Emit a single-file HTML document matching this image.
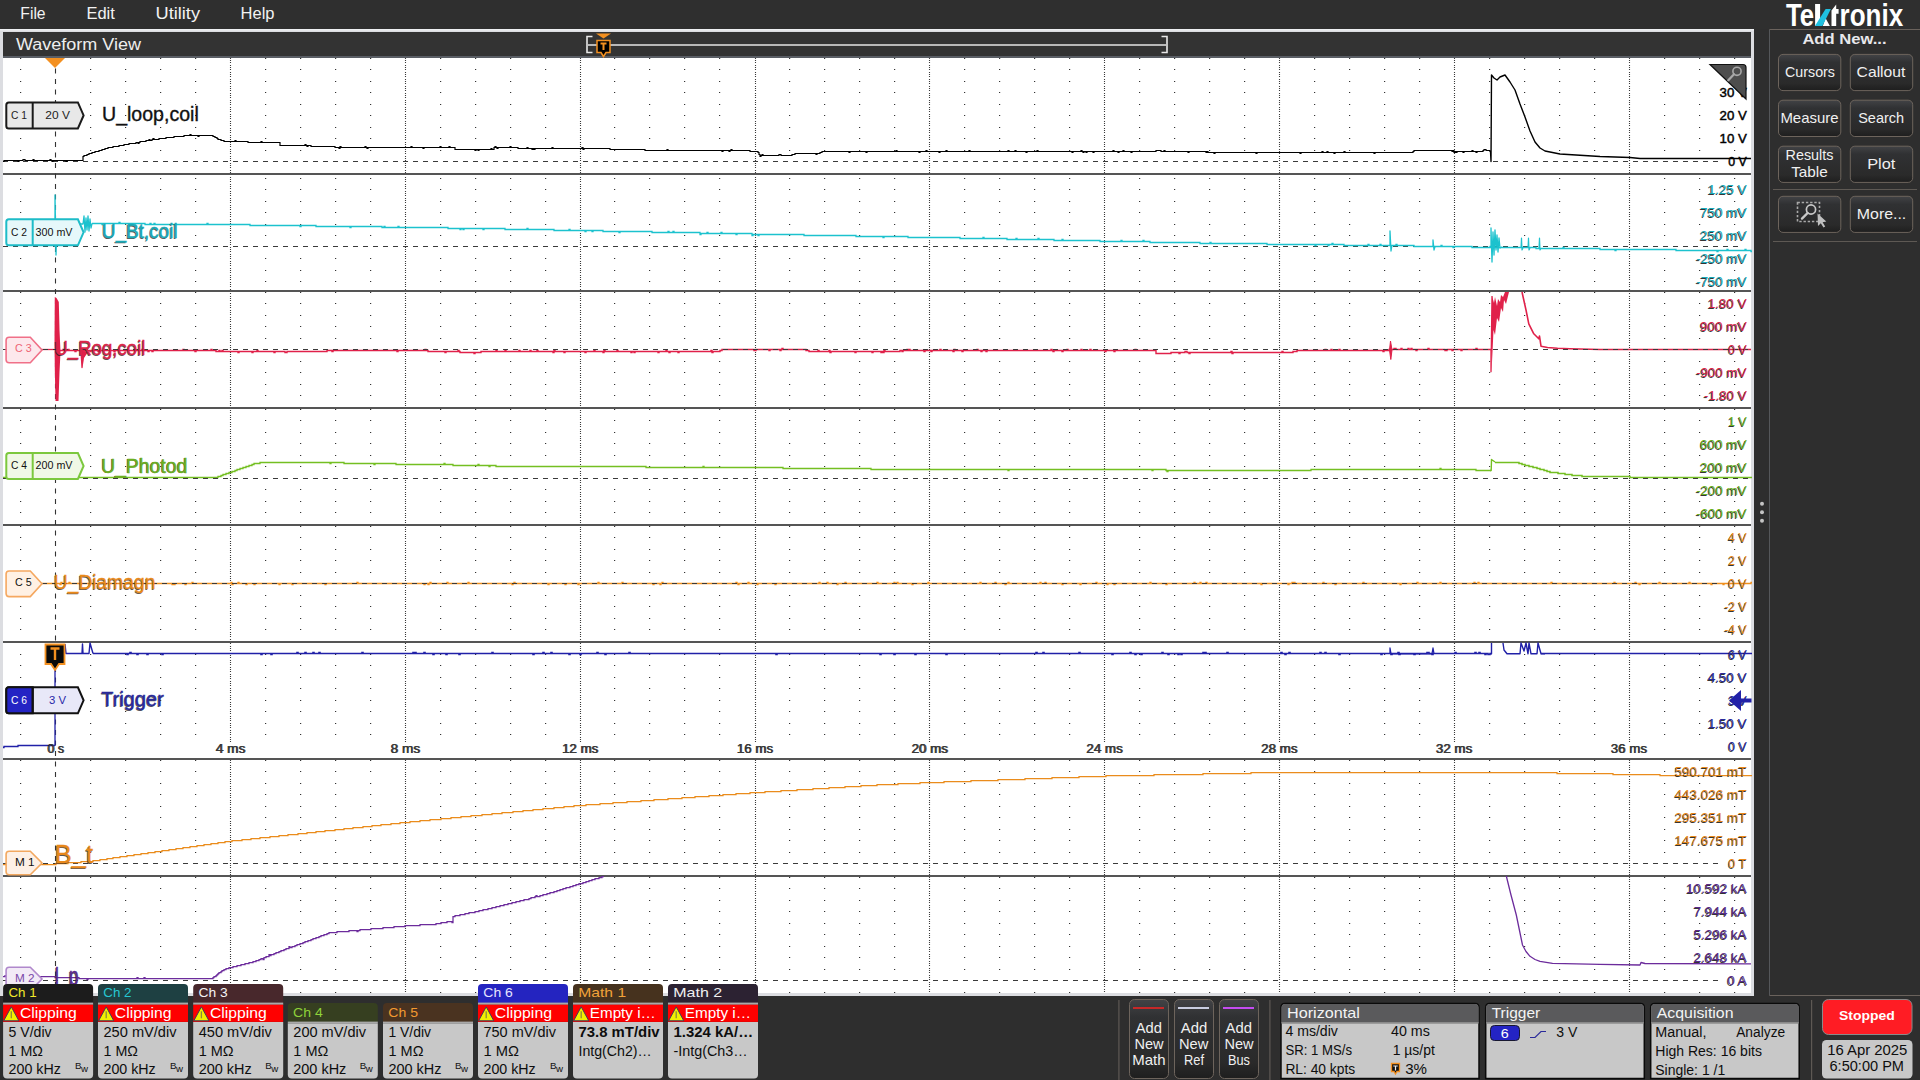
<!DOCTYPE html>
<html><head><meta charset="utf-8"><title>Waveform View</title>
<style>html,body{margin:0;padding:0;background:#2e2e2e;overflow:hidden}svg{display:block}text{font-family:"Liberation Sans", sans-serif}</style>
</head><body>
<svg width="1920" height="1080" viewBox="0 0 1920 1080">
<rect x="0" y="0" width="1920" height="1080" fill="#2e2e2e"/>
<rect x="0" y="0" width="1920" height="29" fill="#2f2f2f"/>
<text x="20.3" y="19.1" font-size="16.0" fill="#f2f2f2" textLength="25.3" lengthAdjust="spacingAndGlyphs">File</text>
<text x="86.4" y="19.1" font-size="16.0" fill="#f2f2f2" textLength="28.4" lengthAdjust="spacingAndGlyphs">Edit</text>
<text x="155.5" y="19.1" font-size="16.0" fill="#f2f2f2" textLength="44.5" lengthAdjust="spacingAndGlyphs">Utility</text>
<text x="240.6" y="19.1" font-size="16.0" fill="#f2f2f2" textLength="33.9" lengthAdjust="spacingAndGlyphs">Help</text>
<rect x="0" y="29" width="1754" height="967" fill="#dcdde1"/>
<rect x="0" y="29" width="1754" height="1.5" fill="#eef0f2"/>
<rect x="3" y="32" width="1748" height="24" fill="#333333"/>
<rect x="3" y="56" width="1748" height="2" fill="#5a5e65"/>
<text x="16.0" y="50.0" font-size="16.0" fill="#eeeeee" textLength="125.0" lengthAdjust="spacingAndGlyphs">Waveform View</text>
<path d="M592.5,36.5 H587 V52.5 H592.5" fill="none" stroke="#e8e8e8" stroke-width="1.6"/>
<path d="M1161.5,36.5 H1167 V52.5 H1161.5" fill="none" stroke="#e8e8e8" stroke-width="1.6"/>
<rect x="588" y="44" width="578" height="2" fill="#b8b8b8"/>
<path d="M596,33.5 H611 L603.5,38.5 Z" fill="#f39020"/>
<path d="M597,40.5 H610 V52.5 H606 L603.5,56.5 L601,52.5 H597 Z" fill="#000" stroke="#f39020" stroke-width="1.5"/>
<path d="M600.5,43.5 H606.5 M603.5,43.5 V50" stroke="#f39020" stroke-width="2"/>
<rect x="3" y="58" width="1748" height="935" fill="#ffffff"/>
<path d="M20,58.5h1.2 M90,58.5h1.2 M125,58.5h1.2 M160,58.5h1.2 M195,58.5h1.2 M265,58.5h1.2 M300,58.5h1.2 M335,58.5h1.2 M370,58.5h1.2 M440,58.5h1.2 M475,58.5h1.2 M510,58.5h1.2 M545,58.5h1.2 M614,58.5h1.2 M649,58.5h1.2 M684,58.5h1.2 M719,58.5h1.2 M789,58.5h1.2 M824,58.5h1.2 M859,58.5h1.2 M894,58.5h1.2 M964,58.5h1.2 M999,58.5h1.2 M1034,58.5h1.2 M1069,58.5h1.2 M1139,58.5h1.2 M1174,58.5h1.2 M1209,58.5h1.2 M1244,58.5h1.2 M1314,58.5h1.2 M1349,58.5h1.2 M1384,58.5h1.2 M1419,58.5h1.2 M1489,58.5h1.2 M1524,58.5h1.2 M1559,58.5h1.2 M1594,58.5h1.2 M1664,58.5h1.2 M1699,58.5h1.2 M1734,58.5h1.2 M20,69.5h1.2 M90,69.5h1.2 M125,69.5h1.2 M160,69.5h1.2 M195,69.5h1.2 M265,69.5h1.2 M300,69.5h1.2 M335,69.5h1.2 M370,69.5h1.2 M440,69.5h1.2 M475,69.5h1.2 M510,69.5h1.2 M545,69.5h1.2 M614,69.5h1.2 M649,69.5h1.2 M684,69.5h1.2 M719,69.5h1.2 M789,69.5h1.2 M824,69.5h1.2 M859,69.5h1.2 M894,69.5h1.2 M964,69.5h1.2 M999,69.5h1.2 M1034,69.5h1.2 M1069,69.5h1.2 M1139,69.5h1.2 M1174,69.5h1.2 M1209,69.5h1.2 M1244,69.5h1.2 M1314,69.5h1.2 M1349,69.5h1.2 M1384,69.5h1.2 M1419,69.5h1.2 M1489,69.5h1.2 M1524,69.5h1.2 M1559,69.5h1.2 M1594,69.5h1.2 M1664,69.5h1.2 M1699,69.5h1.2 M1734,69.5h1.2 M20,81.5h1.2 M90,81.5h1.2 M125,81.5h1.2 M160,81.5h1.2 M195,81.5h1.2 M265,81.5h1.2 M300,81.5h1.2 M335,81.5h1.2 M370,81.5h1.2 M440,81.5h1.2 M475,81.5h1.2 M510,81.5h1.2 M545,81.5h1.2 M614,81.5h1.2 M649,81.5h1.2 M684,81.5h1.2 M719,81.5h1.2 M789,81.5h1.2 M824,81.5h1.2 M859,81.5h1.2 M894,81.5h1.2 M964,81.5h1.2 M999,81.5h1.2 M1034,81.5h1.2 M1069,81.5h1.2 M1139,81.5h1.2 M1174,81.5h1.2 M1209,81.5h1.2 M1244,81.5h1.2 M1314,81.5h1.2 M1349,81.5h1.2 M1384,81.5h1.2 M1419,81.5h1.2 M1489,81.5h1.2 M1524,81.5h1.2 M1559,81.5h1.2 M1594,81.5h1.2 M1664,81.5h1.2 M1699,81.5h1.2 M1734,81.5h1.2 M20,92.5h1.2 M90,92.5h1.2 M125,92.5h1.2 M160,92.5h1.2 M195,92.5h1.2 M265,92.5h1.2 M300,92.5h1.2 M335,92.5h1.2 M370,92.5h1.2 M440,92.5h1.2 M475,92.5h1.2 M510,92.5h1.2 M545,92.5h1.2 M614,92.5h1.2 M649,92.5h1.2 M684,92.5h1.2 M719,92.5h1.2 M789,92.5h1.2 M824,92.5h1.2 M859,92.5h1.2 M894,92.5h1.2 M964,92.5h1.2 M999,92.5h1.2 M1034,92.5h1.2 M1069,92.5h1.2 M1139,92.5h1.2 M1174,92.5h1.2 M1209,92.5h1.2 M1244,92.5h1.2 M1314,92.5h1.2 M1349,92.5h1.2 M1384,92.5h1.2 M1419,92.5h1.2 M1489,92.5h1.2 M1524,92.5h1.2 M1559,92.5h1.2 M1594,92.5h1.2 M1664,92.5h1.2 M1699,92.5h1.2 M20,104.5h1.2 M90,104.5h1.2 M125,104.5h1.2 M160,104.5h1.2 M195,104.5h1.2 M265,104.5h1.2 M300,104.5h1.2 M335,104.5h1.2 M370,104.5h1.2 M440,104.5h1.2 M475,104.5h1.2 M510,104.5h1.2 M545,104.5h1.2 M614,104.5h1.2 M649,104.5h1.2 M684,104.5h1.2 M719,104.5h1.2 M789,104.5h1.2 M824,104.5h1.2 M859,104.5h1.2 M894,104.5h1.2 M964,104.5h1.2 M999,104.5h1.2 M1034,104.5h1.2 M1069,104.5h1.2 M1139,104.5h1.2 M1174,104.5h1.2 M1209,104.5h1.2 M1244,104.5h1.2 M1314,104.5h1.2 M1349,104.5h1.2 M1384,104.5h1.2 M1419,104.5h1.2 M1489,104.5h1.2 M1524,104.5h1.2 M1559,104.5h1.2 M1594,104.5h1.2 M1664,104.5h1.2 M1699,104.5h1.2 M1734,104.5h1.2 M20,115.5h1.2 M90,115.5h1.2 M125,115.5h1.2 M160,115.5h1.2 M195,115.5h1.2 M265,115.5h1.2 M300,115.5h1.2 M335,115.5h1.2 M370,115.5h1.2 M440,115.5h1.2 M475,115.5h1.2 M510,115.5h1.2 M545,115.5h1.2 M614,115.5h1.2 M649,115.5h1.2 M684,115.5h1.2 M719,115.5h1.2 M789,115.5h1.2 M824,115.5h1.2 M859,115.5h1.2 M894,115.5h1.2 M964,115.5h1.2 M999,115.5h1.2 M1034,115.5h1.2 M1069,115.5h1.2 M1139,115.5h1.2 M1174,115.5h1.2 M1209,115.5h1.2 M1244,115.5h1.2 M1314,115.5h1.2 M1349,115.5h1.2 M1384,115.5h1.2 M1419,115.5h1.2 M1489,115.5h1.2 M1524,115.5h1.2 M1559,115.5h1.2 M1594,115.5h1.2 M1664,115.5h1.2 M1699,115.5h1.2 M20,127.5h1.2 M90,127.5h1.2 M125,127.5h1.2 M160,127.5h1.2 M195,127.5h1.2 M265,127.5h1.2 M300,127.5h1.2 M335,127.5h1.2 M370,127.5h1.2 M440,127.5h1.2 M475,127.5h1.2 M510,127.5h1.2 M545,127.5h1.2 M614,127.5h1.2 M649,127.5h1.2 M684,127.5h1.2 M719,127.5h1.2 M789,127.5h1.2 M824,127.5h1.2 M859,127.5h1.2 M894,127.5h1.2 M964,127.5h1.2 M999,127.5h1.2 M1034,127.5h1.2 M1069,127.5h1.2 M1139,127.5h1.2 M1174,127.5h1.2 M1209,127.5h1.2 M1244,127.5h1.2 M1314,127.5h1.2 M1349,127.5h1.2 M1384,127.5h1.2 M1419,127.5h1.2 M1489,127.5h1.2 M1524,127.5h1.2 M1559,127.5h1.2 M1594,127.5h1.2 M1664,127.5h1.2 M1699,127.5h1.2 M1734,127.5h1.2 M20,138.5h1.2 M90,138.5h1.2 M125,138.5h1.2 M160,138.5h1.2 M195,138.5h1.2 M265,138.5h1.2 M300,138.5h1.2 M335,138.5h1.2 M370,138.5h1.2 M440,138.5h1.2 M475,138.5h1.2 M510,138.5h1.2 M545,138.5h1.2 M614,138.5h1.2 M649,138.5h1.2 M684,138.5h1.2 M719,138.5h1.2 M789,138.5h1.2 M824,138.5h1.2 M859,138.5h1.2 M894,138.5h1.2 M964,138.5h1.2 M999,138.5h1.2 M1034,138.5h1.2 M1069,138.5h1.2 M1139,138.5h1.2 M1174,138.5h1.2 M1209,138.5h1.2 M1244,138.5h1.2 M1314,138.5h1.2 M1349,138.5h1.2 M1384,138.5h1.2 M1419,138.5h1.2 M1489,138.5h1.2 M1524,138.5h1.2 M1559,138.5h1.2 M1594,138.5h1.2 M1664,138.5h1.2 M1699,138.5h1.2 M20,150.5h1.2 M90,150.5h1.2 M125,150.5h1.2 M160,150.5h1.2 M195,150.5h1.2 M265,150.5h1.2 M300,150.5h1.2 M335,150.5h1.2 M370,150.5h1.2 M440,150.5h1.2 M475,150.5h1.2 M510,150.5h1.2 M545,150.5h1.2 M614,150.5h1.2 M649,150.5h1.2 M684,150.5h1.2 M719,150.5h1.2 M789,150.5h1.2 M824,150.5h1.2 M859,150.5h1.2 M894,150.5h1.2 M964,150.5h1.2 M999,150.5h1.2 M1034,150.5h1.2 M1069,150.5h1.2 M1139,150.5h1.2 M1174,150.5h1.2 M1209,150.5h1.2 M1244,150.5h1.2 M1314,150.5h1.2 M1349,150.5h1.2 M1384,150.5h1.2 M1419,150.5h1.2 M1489,150.5h1.2 M1524,150.5h1.2 M1559,150.5h1.2 M1594,150.5h1.2 M1664,150.5h1.2 M1699,150.5h1.2 M1734,150.5h1.2 M20,178.5h1.2 M90,178.5h1.2 M125,178.5h1.2 M160,178.5h1.2 M195,178.5h1.2 M265,178.5h1.2 M300,178.5h1.2 M335,178.5h1.2 M370,178.5h1.2 M440,178.5h1.2 M475,178.5h1.2 M510,178.5h1.2 M545,178.5h1.2 M614,178.5h1.2 M649,178.5h1.2 M684,178.5h1.2 M719,178.5h1.2 M789,178.5h1.2 M824,178.5h1.2 M859,178.5h1.2 M894,178.5h1.2 M964,178.5h1.2 M999,178.5h1.2 M1034,178.5h1.2 M1069,178.5h1.2 M1139,178.5h1.2 M1174,178.5h1.2 M1209,178.5h1.2 M1244,178.5h1.2 M1314,178.5h1.2 M1349,178.5h1.2 M1384,178.5h1.2 M1419,178.5h1.2 M1489,178.5h1.2 M1524,178.5h1.2 M1559,178.5h1.2 M1594,178.5h1.2 M1664,178.5h1.2 M1699,178.5h1.2 M1734,178.5h1.2 M20,189.5h1.2 M90,189.5h1.2 M125,189.5h1.2 M160,189.5h1.2 M195,189.5h1.2 M265,189.5h1.2 M300,189.5h1.2 M335,189.5h1.2 M370,189.5h1.2 M440,189.5h1.2 M475,189.5h1.2 M510,189.5h1.2 M545,189.5h1.2 M614,189.5h1.2 M649,189.5h1.2 M684,189.5h1.2 M719,189.5h1.2 M789,189.5h1.2 M824,189.5h1.2 M859,189.5h1.2 M894,189.5h1.2 M964,189.5h1.2 M999,189.5h1.2 M1034,189.5h1.2 M1069,189.5h1.2 M1139,189.5h1.2 M1174,189.5h1.2 M1209,189.5h1.2 M1244,189.5h1.2 M1314,189.5h1.2 M1349,189.5h1.2 M1384,189.5h1.2 M1419,189.5h1.2 M1489,189.5h1.2 M1524,189.5h1.2 M1559,189.5h1.2 M1594,189.5h1.2 M1664,189.5h1.2 M1699,189.5h1.2 M20,201.5h1.2 M90,201.5h1.2 M125,201.5h1.2 M160,201.5h1.2 M195,201.5h1.2 M265,201.5h1.2 M300,201.5h1.2 M335,201.5h1.2 M370,201.5h1.2 M440,201.5h1.2 M475,201.5h1.2 M510,201.5h1.2 M545,201.5h1.2 M614,201.5h1.2 M649,201.5h1.2 M684,201.5h1.2 M719,201.5h1.2 M789,201.5h1.2 M824,201.5h1.2 M859,201.5h1.2 M894,201.5h1.2 M964,201.5h1.2 M999,201.5h1.2 M1034,201.5h1.2 M1069,201.5h1.2 M1139,201.5h1.2 M1174,201.5h1.2 M1209,201.5h1.2 M1244,201.5h1.2 M1314,201.5h1.2 M1349,201.5h1.2 M1384,201.5h1.2 M1419,201.5h1.2 M1489,201.5h1.2 M1524,201.5h1.2 M1559,201.5h1.2 M1594,201.5h1.2 M1664,201.5h1.2 M1699,201.5h1.2 M1734,201.5h1.2 M20,212.5h1.2 M90,212.5h1.2 M125,212.5h1.2 M160,212.5h1.2 M195,212.5h1.2 M265,212.5h1.2 M300,212.5h1.2 M335,212.5h1.2 M370,212.5h1.2 M440,212.5h1.2 M475,212.5h1.2 M510,212.5h1.2 M545,212.5h1.2 M614,212.5h1.2 M649,212.5h1.2 M684,212.5h1.2 M719,212.5h1.2 M789,212.5h1.2 M824,212.5h1.2 M859,212.5h1.2 M894,212.5h1.2 M964,212.5h1.2 M999,212.5h1.2 M1034,212.5h1.2 M1069,212.5h1.2 M1139,212.5h1.2 M1174,212.5h1.2 M1209,212.5h1.2 M1244,212.5h1.2 M1314,212.5h1.2 M1349,212.5h1.2 M1384,212.5h1.2 M1419,212.5h1.2 M1489,212.5h1.2 M1524,212.5h1.2 M1559,212.5h1.2 M1594,212.5h1.2 M1664,212.5h1.2 M20,224.5h1.2 M90,224.5h1.2 M125,224.5h1.2 M160,224.5h1.2 M195,224.5h1.2 M265,224.5h1.2 M300,224.5h1.2 M335,224.5h1.2 M370,224.5h1.2 M440,224.5h1.2 M475,224.5h1.2 M510,224.5h1.2 M545,224.5h1.2 M614,224.5h1.2 M649,224.5h1.2 M684,224.5h1.2 M719,224.5h1.2 M789,224.5h1.2 M824,224.5h1.2 M859,224.5h1.2 M894,224.5h1.2 M964,224.5h1.2 M999,224.5h1.2 M1034,224.5h1.2 M1069,224.5h1.2 M1139,224.5h1.2 M1174,224.5h1.2 M1209,224.5h1.2 M1244,224.5h1.2 M1314,224.5h1.2 M1349,224.5h1.2 M1384,224.5h1.2 M1419,224.5h1.2 M1489,224.5h1.2 M1524,224.5h1.2 M1559,224.5h1.2 M1594,224.5h1.2 M1664,224.5h1.2 M1699,224.5h1.2 M1734,224.5h1.2 M20,235.5h1.2 M90,235.5h1.2 M125,235.5h1.2 M160,235.5h1.2 M195,235.5h1.2 M265,235.5h1.2 M300,235.5h1.2 M335,235.5h1.2 M370,235.5h1.2 M440,235.5h1.2 M475,235.5h1.2 M510,235.5h1.2 M545,235.5h1.2 M614,235.5h1.2 M649,235.5h1.2 M684,235.5h1.2 M719,235.5h1.2 M789,235.5h1.2 M824,235.5h1.2 M859,235.5h1.2 M894,235.5h1.2 M964,235.5h1.2 M999,235.5h1.2 M1034,235.5h1.2 M1069,235.5h1.2 M1139,235.5h1.2 M1174,235.5h1.2 M1209,235.5h1.2 M1244,235.5h1.2 M1314,235.5h1.2 M1349,235.5h1.2 M1384,235.5h1.2 M1419,235.5h1.2 M1489,235.5h1.2 M1524,235.5h1.2 M1559,235.5h1.2 M1594,235.5h1.2 M1664,235.5h1.2 M20,258.5h1.2 M90,258.5h1.2 M125,258.5h1.2 M160,258.5h1.2 M195,258.5h1.2 M265,258.5h1.2 M300,258.5h1.2 M335,258.5h1.2 M370,258.5h1.2 M440,258.5h1.2 M475,258.5h1.2 M510,258.5h1.2 M545,258.5h1.2 M614,258.5h1.2 M649,258.5h1.2 M684,258.5h1.2 M719,258.5h1.2 M789,258.5h1.2 M824,258.5h1.2 M859,258.5h1.2 M894,258.5h1.2 M964,258.5h1.2 M999,258.5h1.2 M1034,258.5h1.2 M1069,258.5h1.2 M1139,258.5h1.2 M1174,258.5h1.2 M1209,258.5h1.2 M1244,258.5h1.2 M1314,258.5h1.2 M1349,258.5h1.2 M1384,258.5h1.2 M1419,258.5h1.2 M1489,258.5h1.2 M1524,258.5h1.2 M1559,258.5h1.2 M1594,258.5h1.2 M1664,258.5h1.2 M20,270.5h1.2 M90,270.5h1.2 M125,270.5h1.2 M160,270.5h1.2 M195,270.5h1.2 M265,270.5h1.2 M300,270.5h1.2 M335,270.5h1.2 M370,270.5h1.2 M440,270.5h1.2 M475,270.5h1.2 M510,270.5h1.2 M545,270.5h1.2 M614,270.5h1.2 M649,270.5h1.2 M684,270.5h1.2 M719,270.5h1.2 M789,270.5h1.2 M824,270.5h1.2 M859,270.5h1.2 M894,270.5h1.2 M964,270.5h1.2 M999,270.5h1.2 M1034,270.5h1.2 M1069,270.5h1.2 M1139,270.5h1.2 M1174,270.5h1.2 M1209,270.5h1.2 M1244,270.5h1.2 M1314,270.5h1.2 M1349,270.5h1.2 M1384,270.5h1.2 M1419,270.5h1.2 M1489,270.5h1.2 M1524,270.5h1.2 M1559,270.5h1.2 M1594,270.5h1.2 M1664,270.5h1.2 M1699,270.5h1.2 M1734,270.5h1.2 M20,281.5h1.2 M90,281.5h1.2 M125,281.5h1.2 M160,281.5h1.2 M195,281.5h1.2 M265,281.5h1.2 M300,281.5h1.2 M335,281.5h1.2 M370,281.5h1.2 M440,281.5h1.2 M475,281.5h1.2 M510,281.5h1.2 M545,281.5h1.2 M614,281.5h1.2 M649,281.5h1.2 M684,281.5h1.2 M719,281.5h1.2 M789,281.5h1.2 M824,281.5h1.2 M859,281.5h1.2 M894,281.5h1.2 M964,281.5h1.2 M999,281.5h1.2 M1034,281.5h1.2 M1069,281.5h1.2 M1139,281.5h1.2 M1174,281.5h1.2 M1209,281.5h1.2 M1244,281.5h1.2 M1314,281.5h1.2 M1349,281.5h1.2 M1384,281.5h1.2 M1419,281.5h1.2 M1489,281.5h1.2 M1524,281.5h1.2 M1559,281.5h1.2 M1594,281.5h1.2 M1664,281.5h1.2 M20,292.5h1.2 M90,292.5h1.2 M125,292.5h1.2 M160,292.5h1.2 M195,292.5h1.2 M265,292.5h1.2 M300,292.5h1.2 M335,292.5h1.2 M370,292.5h1.2 M440,292.5h1.2 M475,292.5h1.2 M510,292.5h1.2 M545,292.5h1.2 M614,292.5h1.2 M649,292.5h1.2 M684,292.5h1.2 M719,292.5h1.2 M789,292.5h1.2 M824,292.5h1.2 M859,292.5h1.2 M894,292.5h1.2 M964,292.5h1.2 M999,292.5h1.2 M1034,292.5h1.2 M1069,292.5h1.2 M1139,292.5h1.2 M1174,292.5h1.2 M1209,292.5h1.2 M1244,292.5h1.2 M1314,292.5h1.2 M1349,292.5h1.2 M1384,292.5h1.2 M1419,292.5h1.2 M1489,292.5h1.2 M1524,292.5h1.2 M1559,292.5h1.2 M1594,292.5h1.2 M1664,292.5h1.2 M1699,292.5h1.2 M1734,292.5h1.2 M20,303.5h1.2 M90,303.5h1.2 M125,303.5h1.2 M160,303.5h1.2 M195,303.5h1.2 M265,303.5h1.2 M300,303.5h1.2 M335,303.5h1.2 M370,303.5h1.2 M440,303.5h1.2 M475,303.5h1.2 M510,303.5h1.2 M545,303.5h1.2 M614,303.5h1.2 M649,303.5h1.2 M684,303.5h1.2 M719,303.5h1.2 M789,303.5h1.2 M824,303.5h1.2 M859,303.5h1.2 M894,303.5h1.2 M964,303.5h1.2 M999,303.5h1.2 M1034,303.5h1.2 M1069,303.5h1.2 M1139,303.5h1.2 M1174,303.5h1.2 M1209,303.5h1.2 M1244,303.5h1.2 M1314,303.5h1.2 M1349,303.5h1.2 M1384,303.5h1.2 M1419,303.5h1.2 M1489,303.5h1.2 M1524,303.5h1.2 M1559,303.5h1.2 M1594,303.5h1.2 M1664,303.5h1.2 M1699,303.5h1.2 M20,315.5h1.2 M90,315.5h1.2 M125,315.5h1.2 M160,315.5h1.2 M195,315.5h1.2 M265,315.5h1.2 M300,315.5h1.2 M335,315.5h1.2 M370,315.5h1.2 M440,315.5h1.2 M475,315.5h1.2 M510,315.5h1.2 M545,315.5h1.2 M614,315.5h1.2 M649,315.5h1.2 M684,315.5h1.2 M719,315.5h1.2 M789,315.5h1.2 M824,315.5h1.2 M859,315.5h1.2 M894,315.5h1.2 M964,315.5h1.2 M999,315.5h1.2 M1034,315.5h1.2 M1069,315.5h1.2 M1139,315.5h1.2 M1174,315.5h1.2 M1209,315.5h1.2 M1244,315.5h1.2 M1314,315.5h1.2 M1349,315.5h1.2 M1384,315.5h1.2 M1419,315.5h1.2 M1489,315.5h1.2 M1524,315.5h1.2 M1559,315.5h1.2 M1594,315.5h1.2 M1664,315.5h1.2 M1699,315.5h1.2 M1734,315.5h1.2 M20,326.5h1.2 M90,326.5h1.2 M125,326.5h1.2 M160,326.5h1.2 M195,326.5h1.2 M265,326.5h1.2 M300,326.5h1.2 M335,326.5h1.2 M370,326.5h1.2 M440,326.5h1.2 M475,326.5h1.2 M510,326.5h1.2 M545,326.5h1.2 M614,326.5h1.2 M649,326.5h1.2 M684,326.5h1.2 M719,326.5h1.2 M789,326.5h1.2 M824,326.5h1.2 M859,326.5h1.2 M894,326.5h1.2 M964,326.5h1.2 M999,326.5h1.2 M1034,326.5h1.2 M1069,326.5h1.2 M1139,326.5h1.2 M1174,326.5h1.2 M1209,326.5h1.2 M1244,326.5h1.2 M1314,326.5h1.2 M1349,326.5h1.2 M1384,326.5h1.2 M1419,326.5h1.2 M1489,326.5h1.2 M1524,326.5h1.2 M1559,326.5h1.2 M1594,326.5h1.2 M1664,326.5h1.2 M20,338.5h1.2 M90,338.5h1.2 M125,338.5h1.2 M160,338.5h1.2 M195,338.5h1.2 M265,338.5h1.2 M300,338.5h1.2 M335,338.5h1.2 M370,338.5h1.2 M440,338.5h1.2 M475,338.5h1.2 M510,338.5h1.2 M545,338.5h1.2 M614,338.5h1.2 M649,338.5h1.2 M684,338.5h1.2 M719,338.5h1.2 M789,338.5h1.2 M824,338.5h1.2 M859,338.5h1.2 M894,338.5h1.2 M964,338.5h1.2 M999,338.5h1.2 M1034,338.5h1.2 M1069,338.5h1.2 M1139,338.5h1.2 M1174,338.5h1.2 M1209,338.5h1.2 M1244,338.5h1.2 M1314,338.5h1.2 M1349,338.5h1.2 M1384,338.5h1.2 M1419,338.5h1.2 M1489,338.5h1.2 M1524,338.5h1.2 M1559,338.5h1.2 M1594,338.5h1.2 M1664,338.5h1.2 M1699,338.5h1.2 M1734,338.5h1.2 M20,361.5h1.2 M90,361.5h1.2 M125,361.5h1.2 M160,361.5h1.2 M195,361.5h1.2 M265,361.5h1.2 M300,361.5h1.2 M335,361.5h1.2 M370,361.5h1.2 M440,361.5h1.2 M475,361.5h1.2 M510,361.5h1.2 M545,361.5h1.2 M614,361.5h1.2 M649,361.5h1.2 M684,361.5h1.2 M719,361.5h1.2 M789,361.5h1.2 M824,361.5h1.2 M859,361.5h1.2 M894,361.5h1.2 M964,361.5h1.2 M999,361.5h1.2 M1034,361.5h1.2 M1069,361.5h1.2 M1139,361.5h1.2 M1174,361.5h1.2 M1209,361.5h1.2 M1244,361.5h1.2 M1314,361.5h1.2 M1349,361.5h1.2 M1384,361.5h1.2 M1419,361.5h1.2 M1489,361.5h1.2 M1524,361.5h1.2 M1559,361.5h1.2 M1594,361.5h1.2 M1664,361.5h1.2 M1699,361.5h1.2 M1734,361.5h1.2 M20,372.5h1.2 M90,372.5h1.2 M125,372.5h1.2 M160,372.5h1.2 M195,372.5h1.2 M265,372.5h1.2 M300,372.5h1.2 M335,372.5h1.2 M370,372.5h1.2 M440,372.5h1.2 M475,372.5h1.2 M510,372.5h1.2 M545,372.5h1.2 M614,372.5h1.2 M649,372.5h1.2 M684,372.5h1.2 M719,372.5h1.2 M789,372.5h1.2 M824,372.5h1.2 M859,372.5h1.2 M894,372.5h1.2 M964,372.5h1.2 M999,372.5h1.2 M1034,372.5h1.2 M1069,372.5h1.2 M1139,372.5h1.2 M1174,372.5h1.2 M1209,372.5h1.2 M1244,372.5h1.2 M1314,372.5h1.2 M1349,372.5h1.2 M1384,372.5h1.2 M1419,372.5h1.2 M1489,372.5h1.2 M1524,372.5h1.2 M1559,372.5h1.2 M1594,372.5h1.2 M1664,372.5h1.2 M20,384.5h1.2 M90,384.5h1.2 M125,384.5h1.2 M160,384.5h1.2 M195,384.5h1.2 M265,384.5h1.2 M300,384.5h1.2 M335,384.5h1.2 M370,384.5h1.2 M440,384.5h1.2 M475,384.5h1.2 M510,384.5h1.2 M545,384.5h1.2 M614,384.5h1.2 M649,384.5h1.2 M684,384.5h1.2 M719,384.5h1.2 M789,384.5h1.2 M824,384.5h1.2 M859,384.5h1.2 M894,384.5h1.2 M964,384.5h1.2 M999,384.5h1.2 M1034,384.5h1.2 M1069,384.5h1.2 M1139,384.5h1.2 M1174,384.5h1.2 M1209,384.5h1.2 M1244,384.5h1.2 M1314,384.5h1.2 M1349,384.5h1.2 M1384,384.5h1.2 M1419,384.5h1.2 M1489,384.5h1.2 M1524,384.5h1.2 M1559,384.5h1.2 M1594,384.5h1.2 M1664,384.5h1.2 M1699,384.5h1.2 M1734,384.5h1.2 M20,395.5h1.2 M90,395.5h1.2 M125,395.5h1.2 M160,395.5h1.2 M195,395.5h1.2 M265,395.5h1.2 M300,395.5h1.2 M335,395.5h1.2 M370,395.5h1.2 M440,395.5h1.2 M475,395.5h1.2 M510,395.5h1.2 M545,395.5h1.2 M614,395.5h1.2 M649,395.5h1.2 M684,395.5h1.2 M719,395.5h1.2 M789,395.5h1.2 M824,395.5h1.2 M859,395.5h1.2 M894,395.5h1.2 M964,395.5h1.2 M999,395.5h1.2 M1034,395.5h1.2 M1069,395.5h1.2 M1139,395.5h1.2 M1174,395.5h1.2 M1209,395.5h1.2 M1244,395.5h1.2 M1314,395.5h1.2 M1349,395.5h1.2 M1384,395.5h1.2 M1419,395.5h1.2 M1489,395.5h1.2 M1524,395.5h1.2 M1559,395.5h1.2 M1594,395.5h1.2 M1664,395.5h1.2 M1699,395.5h1.2 M20,409.5h1.2 M90,409.5h1.2 M125,409.5h1.2 M160,409.5h1.2 M195,409.5h1.2 M265,409.5h1.2 M300,409.5h1.2 M335,409.5h1.2 M370,409.5h1.2 M440,409.5h1.2 M475,409.5h1.2 M510,409.5h1.2 M545,409.5h1.2 M614,409.5h1.2 M649,409.5h1.2 M684,409.5h1.2 M719,409.5h1.2 M789,409.5h1.2 M824,409.5h1.2 M859,409.5h1.2 M894,409.5h1.2 M964,409.5h1.2 M999,409.5h1.2 M1034,409.5h1.2 M1069,409.5h1.2 M1139,409.5h1.2 M1174,409.5h1.2 M1209,409.5h1.2 M1244,409.5h1.2 M1314,409.5h1.2 M1349,409.5h1.2 M1384,409.5h1.2 M1419,409.5h1.2 M1489,409.5h1.2 M1524,409.5h1.2 M1559,409.5h1.2 M1594,409.5h1.2 M1664,409.5h1.2 M1699,409.5h1.2 M1734,409.5h1.2 M20,420.5h1.2 M90,420.5h1.2 M125,420.5h1.2 M160,420.5h1.2 M195,420.5h1.2 M265,420.5h1.2 M300,420.5h1.2 M335,420.5h1.2 M370,420.5h1.2 M440,420.5h1.2 M475,420.5h1.2 M510,420.5h1.2 M545,420.5h1.2 M614,420.5h1.2 M649,420.5h1.2 M684,420.5h1.2 M719,420.5h1.2 M789,420.5h1.2 M824,420.5h1.2 M859,420.5h1.2 M894,420.5h1.2 M964,420.5h1.2 M999,420.5h1.2 M1034,420.5h1.2 M1069,420.5h1.2 M1139,420.5h1.2 M1174,420.5h1.2 M1209,420.5h1.2 M1244,420.5h1.2 M1314,420.5h1.2 M1349,420.5h1.2 M1384,420.5h1.2 M1419,420.5h1.2 M1489,420.5h1.2 M1524,420.5h1.2 M1559,420.5h1.2 M1594,420.5h1.2 M1664,420.5h1.2 M1699,420.5h1.2 M20,432.5h1.2 M90,432.5h1.2 M125,432.5h1.2 M160,432.5h1.2 M195,432.5h1.2 M265,432.5h1.2 M300,432.5h1.2 M335,432.5h1.2 M370,432.5h1.2 M440,432.5h1.2 M475,432.5h1.2 M510,432.5h1.2 M545,432.5h1.2 M614,432.5h1.2 M649,432.5h1.2 M684,432.5h1.2 M719,432.5h1.2 M789,432.5h1.2 M824,432.5h1.2 M859,432.5h1.2 M894,432.5h1.2 M964,432.5h1.2 M999,432.5h1.2 M1034,432.5h1.2 M1069,432.5h1.2 M1139,432.5h1.2 M1174,432.5h1.2 M1209,432.5h1.2 M1244,432.5h1.2 M1314,432.5h1.2 M1349,432.5h1.2 M1384,432.5h1.2 M1419,432.5h1.2 M1489,432.5h1.2 M1524,432.5h1.2 M1559,432.5h1.2 M1594,432.5h1.2 M1664,432.5h1.2 M1699,432.5h1.2 M1734,432.5h1.2 M20,443.5h1.2 M90,443.5h1.2 M125,443.5h1.2 M160,443.5h1.2 M195,443.5h1.2 M265,443.5h1.2 M300,443.5h1.2 M335,443.5h1.2 M370,443.5h1.2 M440,443.5h1.2 M475,443.5h1.2 M510,443.5h1.2 M545,443.5h1.2 M614,443.5h1.2 M649,443.5h1.2 M684,443.5h1.2 M719,443.5h1.2 M789,443.5h1.2 M824,443.5h1.2 M859,443.5h1.2 M894,443.5h1.2 M964,443.5h1.2 M999,443.5h1.2 M1034,443.5h1.2 M1069,443.5h1.2 M1139,443.5h1.2 M1174,443.5h1.2 M1209,443.5h1.2 M1244,443.5h1.2 M1314,443.5h1.2 M1349,443.5h1.2 M1384,443.5h1.2 M1419,443.5h1.2 M1489,443.5h1.2 M1524,443.5h1.2 M1559,443.5h1.2 M1594,443.5h1.2 M1664,443.5h1.2 M20,455.5h1.2 M90,455.5h1.2 M125,455.5h1.2 M160,455.5h1.2 M195,455.5h1.2 M265,455.5h1.2 M300,455.5h1.2 M335,455.5h1.2 M370,455.5h1.2 M440,455.5h1.2 M475,455.5h1.2 M510,455.5h1.2 M545,455.5h1.2 M614,455.5h1.2 M649,455.5h1.2 M684,455.5h1.2 M719,455.5h1.2 M789,455.5h1.2 M824,455.5h1.2 M859,455.5h1.2 M894,455.5h1.2 M964,455.5h1.2 M999,455.5h1.2 M1034,455.5h1.2 M1069,455.5h1.2 M1139,455.5h1.2 M1174,455.5h1.2 M1209,455.5h1.2 M1244,455.5h1.2 M1314,455.5h1.2 M1349,455.5h1.2 M1384,455.5h1.2 M1419,455.5h1.2 M1489,455.5h1.2 M1524,455.5h1.2 M1559,455.5h1.2 M1594,455.5h1.2 M1664,455.5h1.2 M1699,455.5h1.2 M1734,455.5h1.2 M20,466.5h1.2 M90,466.5h1.2 M125,466.5h1.2 M160,466.5h1.2 M195,466.5h1.2 M265,466.5h1.2 M300,466.5h1.2 M335,466.5h1.2 M370,466.5h1.2 M440,466.5h1.2 M475,466.5h1.2 M510,466.5h1.2 M545,466.5h1.2 M614,466.5h1.2 M649,466.5h1.2 M684,466.5h1.2 M719,466.5h1.2 M789,466.5h1.2 M824,466.5h1.2 M859,466.5h1.2 M894,466.5h1.2 M964,466.5h1.2 M999,466.5h1.2 M1034,466.5h1.2 M1069,466.5h1.2 M1139,466.5h1.2 M1174,466.5h1.2 M1209,466.5h1.2 M1244,466.5h1.2 M1314,466.5h1.2 M1349,466.5h1.2 M1384,466.5h1.2 M1419,466.5h1.2 M1489,466.5h1.2 M1524,466.5h1.2 M1559,466.5h1.2 M1594,466.5h1.2 M1664,466.5h1.2 M20,489.5h1.2 M90,489.5h1.2 M125,489.5h1.2 M160,489.5h1.2 M195,489.5h1.2 M265,489.5h1.2 M300,489.5h1.2 M335,489.5h1.2 M370,489.5h1.2 M440,489.5h1.2 M475,489.5h1.2 M510,489.5h1.2 M545,489.5h1.2 M614,489.5h1.2 M649,489.5h1.2 M684,489.5h1.2 M719,489.5h1.2 M789,489.5h1.2 M824,489.5h1.2 M859,489.5h1.2 M894,489.5h1.2 M964,489.5h1.2 M999,489.5h1.2 M1034,489.5h1.2 M1069,489.5h1.2 M1139,489.5h1.2 M1174,489.5h1.2 M1209,489.5h1.2 M1244,489.5h1.2 M1314,489.5h1.2 M1349,489.5h1.2 M1384,489.5h1.2 M1419,489.5h1.2 M1489,489.5h1.2 M1524,489.5h1.2 M1559,489.5h1.2 M1594,489.5h1.2 M1664,489.5h1.2 M20,501.5h1.2 M90,501.5h1.2 M125,501.5h1.2 M160,501.5h1.2 M195,501.5h1.2 M265,501.5h1.2 M300,501.5h1.2 M335,501.5h1.2 M370,501.5h1.2 M440,501.5h1.2 M475,501.5h1.2 M510,501.5h1.2 M545,501.5h1.2 M614,501.5h1.2 M649,501.5h1.2 M684,501.5h1.2 M719,501.5h1.2 M789,501.5h1.2 M824,501.5h1.2 M859,501.5h1.2 M894,501.5h1.2 M964,501.5h1.2 M999,501.5h1.2 M1034,501.5h1.2 M1069,501.5h1.2 M1139,501.5h1.2 M1174,501.5h1.2 M1209,501.5h1.2 M1244,501.5h1.2 M1314,501.5h1.2 M1349,501.5h1.2 M1384,501.5h1.2 M1419,501.5h1.2 M1489,501.5h1.2 M1524,501.5h1.2 M1559,501.5h1.2 M1594,501.5h1.2 M1664,501.5h1.2 M1699,501.5h1.2 M1734,501.5h1.2 M20,512.5h1.2 M90,512.5h1.2 M125,512.5h1.2 M160,512.5h1.2 M195,512.5h1.2 M265,512.5h1.2 M300,512.5h1.2 M335,512.5h1.2 M370,512.5h1.2 M440,512.5h1.2 M475,512.5h1.2 M510,512.5h1.2 M545,512.5h1.2 M614,512.5h1.2 M649,512.5h1.2 M684,512.5h1.2 M719,512.5h1.2 M789,512.5h1.2 M824,512.5h1.2 M859,512.5h1.2 M894,512.5h1.2 M964,512.5h1.2 M999,512.5h1.2 M1034,512.5h1.2 M1069,512.5h1.2 M1139,512.5h1.2 M1174,512.5h1.2 M1209,512.5h1.2 M1244,512.5h1.2 M1314,512.5h1.2 M1349,512.5h1.2 M1384,512.5h1.2 M1419,512.5h1.2 M1489,512.5h1.2 M1524,512.5h1.2 M1559,512.5h1.2 M1594,512.5h1.2 M1664,512.5h1.2 M20,526.5h1.2 M90,526.5h1.2 M125,526.5h1.2 M160,526.5h1.2 M195,526.5h1.2 M265,526.5h1.2 M300,526.5h1.2 M335,526.5h1.2 M370,526.5h1.2 M440,526.5h1.2 M475,526.5h1.2 M510,526.5h1.2 M545,526.5h1.2 M614,526.5h1.2 M649,526.5h1.2 M684,526.5h1.2 M719,526.5h1.2 M789,526.5h1.2 M824,526.5h1.2 M859,526.5h1.2 M894,526.5h1.2 M964,526.5h1.2 M999,526.5h1.2 M1034,526.5h1.2 M1069,526.5h1.2 M1139,526.5h1.2 M1174,526.5h1.2 M1209,526.5h1.2 M1244,526.5h1.2 M1314,526.5h1.2 M1349,526.5h1.2 M1384,526.5h1.2 M1419,526.5h1.2 M1489,526.5h1.2 M1524,526.5h1.2 M1559,526.5h1.2 M1594,526.5h1.2 M1664,526.5h1.2 M1699,526.5h1.2 M1734,526.5h1.2 M20,537.5h1.2 M90,537.5h1.2 M125,537.5h1.2 M160,537.5h1.2 M195,537.5h1.2 M265,537.5h1.2 M300,537.5h1.2 M335,537.5h1.2 M370,537.5h1.2 M440,537.5h1.2 M475,537.5h1.2 M510,537.5h1.2 M545,537.5h1.2 M614,537.5h1.2 M649,537.5h1.2 M684,537.5h1.2 M719,537.5h1.2 M789,537.5h1.2 M824,537.5h1.2 M859,537.5h1.2 M894,537.5h1.2 M964,537.5h1.2 M999,537.5h1.2 M1034,537.5h1.2 M1069,537.5h1.2 M1139,537.5h1.2 M1174,537.5h1.2 M1209,537.5h1.2 M1244,537.5h1.2 M1314,537.5h1.2 M1349,537.5h1.2 M1384,537.5h1.2 M1419,537.5h1.2 M1489,537.5h1.2 M1524,537.5h1.2 M1559,537.5h1.2 M1594,537.5h1.2 M1664,537.5h1.2 M1699,537.5h1.2 M20,549.5h1.2 M90,549.5h1.2 M125,549.5h1.2 M160,549.5h1.2 M195,549.5h1.2 M265,549.5h1.2 M300,549.5h1.2 M335,549.5h1.2 M370,549.5h1.2 M440,549.5h1.2 M475,549.5h1.2 M510,549.5h1.2 M545,549.5h1.2 M614,549.5h1.2 M649,549.5h1.2 M684,549.5h1.2 M719,549.5h1.2 M789,549.5h1.2 M824,549.5h1.2 M859,549.5h1.2 M894,549.5h1.2 M964,549.5h1.2 M999,549.5h1.2 M1034,549.5h1.2 M1069,549.5h1.2 M1139,549.5h1.2 M1174,549.5h1.2 M1209,549.5h1.2 M1244,549.5h1.2 M1314,549.5h1.2 M1349,549.5h1.2 M1384,549.5h1.2 M1419,549.5h1.2 M1489,549.5h1.2 M1524,549.5h1.2 M1559,549.5h1.2 M1594,549.5h1.2 M1664,549.5h1.2 M1699,549.5h1.2 M1734,549.5h1.2 M20,560.5h1.2 M90,560.5h1.2 M125,560.5h1.2 M160,560.5h1.2 M195,560.5h1.2 M265,560.5h1.2 M300,560.5h1.2 M335,560.5h1.2 M370,560.5h1.2 M440,560.5h1.2 M475,560.5h1.2 M510,560.5h1.2 M545,560.5h1.2 M614,560.5h1.2 M649,560.5h1.2 M684,560.5h1.2 M719,560.5h1.2 M789,560.5h1.2 M824,560.5h1.2 M859,560.5h1.2 M894,560.5h1.2 M964,560.5h1.2 M999,560.5h1.2 M1034,560.5h1.2 M1069,560.5h1.2 M1139,560.5h1.2 M1174,560.5h1.2 M1209,560.5h1.2 M1244,560.5h1.2 M1314,560.5h1.2 M1349,560.5h1.2 M1384,560.5h1.2 M1419,560.5h1.2 M1489,560.5h1.2 M1524,560.5h1.2 M1559,560.5h1.2 M1594,560.5h1.2 M1664,560.5h1.2 M1699,560.5h1.2 M20,572.5h1.2 M90,572.5h1.2 M125,572.5h1.2 M160,572.5h1.2 M195,572.5h1.2 M265,572.5h1.2 M300,572.5h1.2 M335,572.5h1.2 M370,572.5h1.2 M440,572.5h1.2 M475,572.5h1.2 M510,572.5h1.2 M545,572.5h1.2 M614,572.5h1.2 M649,572.5h1.2 M684,572.5h1.2 M719,572.5h1.2 M789,572.5h1.2 M824,572.5h1.2 M859,572.5h1.2 M894,572.5h1.2 M964,572.5h1.2 M999,572.5h1.2 M1034,572.5h1.2 M1069,572.5h1.2 M1139,572.5h1.2 M1174,572.5h1.2 M1209,572.5h1.2 M1244,572.5h1.2 M1314,572.5h1.2 M1349,572.5h1.2 M1384,572.5h1.2 M1419,572.5h1.2 M1489,572.5h1.2 M1524,572.5h1.2 M1559,572.5h1.2 M1594,572.5h1.2 M1664,572.5h1.2 M1699,572.5h1.2 M1734,572.5h1.2 M20,595.5h1.2 M90,595.5h1.2 M125,595.5h1.2 M160,595.5h1.2 M195,595.5h1.2 M265,595.5h1.2 M300,595.5h1.2 M335,595.5h1.2 M370,595.5h1.2 M440,595.5h1.2 M475,595.5h1.2 M510,595.5h1.2 M545,595.5h1.2 M614,595.5h1.2 M649,595.5h1.2 M684,595.5h1.2 M719,595.5h1.2 M789,595.5h1.2 M824,595.5h1.2 M859,595.5h1.2 M894,595.5h1.2 M964,595.5h1.2 M999,595.5h1.2 M1034,595.5h1.2 M1069,595.5h1.2 M1139,595.5h1.2 M1174,595.5h1.2 M1209,595.5h1.2 M1244,595.5h1.2 M1314,595.5h1.2 M1349,595.5h1.2 M1384,595.5h1.2 M1419,595.5h1.2 M1489,595.5h1.2 M1524,595.5h1.2 M1559,595.5h1.2 M1594,595.5h1.2 M1664,595.5h1.2 M1699,595.5h1.2 M1734,595.5h1.2 M20,606.5h1.2 M90,606.5h1.2 M125,606.5h1.2 M160,606.5h1.2 M195,606.5h1.2 M265,606.5h1.2 M300,606.5h1.2 M335,606.5h1.2 M370,606.5h1.2 M440,606.5h1.2 M475,606.5h1.2 M510,606.5h1.2 M545,606.5h1.2 M614,606.5h1.2 M649,606.5h1.2 M684,606.5h1.2 M719,606.5h1.2 M789,606.5h1.2 M824,606.5h1.2 M859,606.5h1.2 M894,606.5h1.2 M964,606.5h1.2 M999,606.5h1.2 M1034,606.5h1.2 M1069,606.5h1.2 M1139,606.5h1.2 M1174,606.5h1.2 M1209,606.5h1.2 M1244,606.5h1.2 M1314,606.5h1.2 M1349,606.5h1.2 M1384,606.5h1.2 M1419,606.5h1.2 M1489,606.5h1.2 M1524,606.5h1.2 M1559,606.5h1.2 M1594,606.5h1.2 M1664,606.5h1.2 M1699,606.5h1.2 M20,618.5h1.2 M90,618.5h1.2 M125,618.5h1.2 M160,618.5h1.2 M195,618.5h1.2 M265,618.5h1.2 M300,618.5h1.2 M335,618.5h1.2 M370,618.5h1.2 M440,618.5h1.2 M475,618.5h1.2 M510,618.5h1.2 M545,618.5h1.2 M614,618.5h1.2 M649,618.5h1.2 M684,618.5h1.2 M719,618.5h1.2 M789,618.5h1.2 M824,618.5h1.2 M859,618.5h1.2 M894,618.5h1.2 M964,618.5h1.2 M999,618.5h1.2 M1034,618.5h1.2 M1069,618.5h1.2 M1139,618.5h1.2 M1174,618.5h1.2 M1209,618.5h1.2 M1244,618.5h1.2 M1314,618.5h1.2 M1349,618.5h1.2 M1384,618.5h1.2 M1419,618.5h1.2 M1489,618.5h1.2 M1524,618.5h1.2 M1559,618.5h1.2 M1594,618.5h1.2 M1664,618.5h1.2 M1699,618.5h1.2 M1734,618.5h1.2 M20,629.5h1.2 M90,629.5h1.2 M125,629.5h1.2 M160,629.5h1.2 M195,629.5h1.2 M265,629.5h1.2 M300,629.5h1.2 M335,629.5h1.2 M370,629.5h1.2 M440,629.5h1.2 M475,629.5h1.2 M510,629.5h1.2 M545,629.5h1.2 M614,629.5h1.2 M649,629.5h1.2 M684,629.5h1.2 M719,629.5h1.2 M789,629.5h1.2 M824,629.5h1.2 M859,629.5h1.2 M894,629.5h1.2 M964,629.5h1.2 M999,629.5h1.2 M1034,629.5h1.2 M1069,629.5h1.2 M1139,629.5h1.2 M1174,629.5h1.2 M1209,629.5h1.2 M1244,629.5h1.2 M1314,629.5h1.2 M1349,629.5h1.2 M1384,629.5h1.2 M1419,629.5h1.2 M1489,629.5h1.2 M1524,629.5h1.2 M1559,629.5h1.2 M1594,629.5h1.2 M1664,629.5h1.2 M1699,629.5h1.2 M20,654.5h1.2 M90,654.5h1.2 M125,654.5h1.2 M160,654.5h1.2 M195,654.5h1.2 M265,654.5h1.2 M300,654.5h1.2 M335,654.5h1.2 M370,654.5h1.2 M440,654.5h1.2 M475,654.5h1.2 M510,654.5h1.2 M545,654.5h1.2 M614,654.5h1.2 M649,654.5h1.2 M684,654.5h1.2 M719,654.5h1.2 M789,654.5h1.2 M824,654.5h1.2 M859,654.5h1.2 M894,654.5h1.2 M964,654.5h1.2 M999,654.5h1.2 M1034,654.5h1.2 M1069,654.5h1.2 M1139,654.5h1.2 M1174,654.5h1.2 M1209,654.5h1.2 M1244,654.5h1.2 M1314,654.5h1.2 M1349,654.5h1.2 M1384,654.5h1.2 M1419,654.5h1.2 M1489,654.5h1.2 M1524,654.5h1.2 M1559,654.5h1.2 M1594,654.5h1.2 M1664,654.5h1.2 M1699,654.5h1.2 M20,665.5h1.2 M90,665.5h1.2 M125,665.5h1.2 M160,665.5h1.2 M195,665.5h1.2 M265,665.5h1.2 M300,665.5h1.2 M335,665.5h1.2 M370,665.5h1.2 M440,665.5h1.2 M475,665.5h1.2 M510,665.5h1.2 M545,665.5h1.2 M614,665.5h1.2 M649,665.5h1.2 M684,665.5h1.2 M719,665.5h1.2 M789,665.5h1.2 M824,665.5h1.2 M859,665.5h1.2 M894,665.5h1.2 M964,665.5h1.2 M999,665.5h1.2 M1034,665.5h1.2 M1069,665.5h1.2 M1139,665.5h1.2 M1174,665.5h1.2 M1209,665.5h1.2 M1244,665.5h1.2 M1314,665.5h1.2 M1349,665.5h1.2 M1384,665.5h1.2 M1419,665.5h1.2 M1489,665.5h1.2 M1524,665.5h1.2 M1559,665.5h1.2 M1594,665.5h1.2 M1664,665.5h1.2 M1699,665.5h1.2 M1734,665.5h1.2 M20,677.5h1.2 M90,677.5h1.2 M125,677.5h1.2 M160,677.5h1.2 M195,677.5h1.2 M265,677.5h1.2 M300,677.5h1.2 M335,677.5h1.2 M370,677.5h1.2 M440,677.5h1.2 M475,677.5h1.2 M510,677.5h1.2 M545,677.5h1.2 M614,677.5h1.2 M649,677.5h1.2 M684,677.5h1.2 M719,677.5h1.2 M789,677.5h1.2 M824,677.5h1.2 M859,677.5h1.2 M894,677.5h1.2 M964,677.5h1.2 M999,677.5h1.2 M1034,677.5h1.2 M1069,677.5h1.2 M1139,677.5h1.2 M1174,677.5h1.2 M1209,677.5h1.2 M1244,677.5h1.2 M1314,677.5h1.2 M1349,677.5h1.2 M1384,677.5h1.2 M1419,677.5h1.2 M1489,677.5h1.2 M1524,677.5h1.2 M1559,677.5h1.2 M1594,677.5h1.2 M1664,677.5h1.2 M1699,677.5h1.2 M20,688.5h1.2 M90,688.5h1.2 M125,688.5h1.2 M160,688.5h1.2 M195,688.5h1.2 M265,688.5h1.2 M300,688.5h1.2 M335,688.5h1.2 M370,688.5h1.2 M440,688.5h1.2 M475,688.5h1.2 M510,688.5h1.2 M545,688.5h1.2 M614,688.5h1.2 M649,688.5h1.2 M684,688.5h1.2 M719,688.5h1.2 M789,688.5h1.2 M824,688.5h1.2 M859,688.5h1.2 M894,688.5h1.2 M964,688.5h1.2 M999,688.5h1.2 M1034,688.5h1.2 M1069,688.5h1.2 M1139,688.5h1.2 M1174,688.5h1.2 M1209,688.5h1.2 M1244,688.5h1.2 M1314,688.5h1.2 M1349,688.5h1.2 M1384,688.5h1.2 M1419,688.5h1.2 M1489,688.5h1.2 M1524,688.5h1.2 M1559,688.5h1.2 M1594,688.5h1.2 M1664,688.5h1.2 M1699,688.5h1.2 M1734,688.5h1.2 M20,700.5h1.2 M90,700.5h1.2 M125,700.5h1.2 M160,700.5h1.2 M195,700.5h1.2 M265,700.5h1.2 M300,700.5h1.2 M335,700.5h1.2 M370,700.5h1.2 M440,700.5h1.2 M475,700.5h1.2 M510,700.5h1.2 M545,700.5h1.2 M614,700.5h1.2 M649,700.5h1.2 M684,700.5h1.2 M719,700.5h1.2 M789,700.5h1.2 M824,700.5h1.2 M859,700.5h1.2 M894,700.5h1.2 M964,700.5h1.2 M999,700.5h1.2 M1034,700.5h1.2 M1069,700.5h1.2 M1139,700.5h1.2 M1174,700.5h1.2 M1209,700.5h1.2 M1244,700.5h1.2 M1314,700.5h1.2 M1349,700.5h1.2 M1384,700.5h1.2 M1419,700.5h1.2 M1489,700.5h1.2 M1524,700.5h1.2 M1559,700.5h1.2 M1594,700.5h1.2 M1664,700.5h1.2 M1699,700.5h1.2 M20,711.5h1.2 M90,711.5h1.2 M125,711.5h1.2 M160,711.5h1.2 M195,711.5h1.2 M265,711.5h1.2 M300,711.5h1.2 M335,711.5h1.2 M370,711.5h1.2 M440,711.5h1.2 M475,711.5h1.2 M510,711.5h1.2 M545,711.5h1.2 M614,711.5h1.2 M649,711.5h1.2 M684,711.5h1.2 M719,711.5h1.2 M789,711.5h1.2 M824,711.5h1.2 M859,711.5h1.2 M894,711.5h1.2 M964,711.5h1.2 M999,711.5h1.2 M1034,711.5h1.2 M1069,711.5h1.2 M1139,711.5h1.2 M1174,711.5h1.2 M1209,711.5h1.2 M1244,711.5h1.2 M1314,711.5h1.2 M1349,711.5h1.2 M1384,711.5h1.2 M1419,711.5h1.2 M1489,711.5h1.2 M1524,711.5h1.2 M1559,711.5h1.2 M1594,711.5h1.2 M1664,711.5h1.2 M1699,711.5h1.2 M1734,711.5h1.2 M20,723.5h1.2 M90,723.5h1.2 M125,723.5h1.2 M160,723.5h1.2 M195,723.5h1.2 M265,723.5h1.2 M300,723.5h1.2 M335,723.5h1.2 M370,723.5h1.2 M440,723.5h1.2 M475,723.5h1.2 M510,723.5h1.2 M545,723.5h1.2 M614,723.5h1.2 M649,723.5h1.2 M684,723.5h1.2 M719,723.5h1.2 M789,723.5h1.2 M824,723.5h1.2 M859,723.5h1.2 M894,723.5h1.2 M964,723.5h1.2 M999,723.5h1.2 M1034,723.5h1.2 M1069,723.5h1.2 M1139,723.5h1.2 M1174,723.5h1.2 M1209,723.5h1.2 M1244,723.5h1.2 M1314,723.5h1.2 M1349,723.5h1.2 M1384,723.5h1.2 M1419,723.5h1.2 M1489,723.5h1.2 M1524,723.5h1.2 M1559,723.5h1.2 M1594,723.5h1.2 M1664,723.5h1.2 M1699,723.5h1.2 M20,734.5h1.2 M90,734.5h1.2 M125,734.5h1.2 M160,734.5h1.2 M195,734.5h1.2 M265,734.5h1.2 M300,734.5h1.2 M335,734.5h1.2 M370,734.5h1.2 M440,734.5h1.2 M475,734.5h1.2 M510,734.5h1.2 M545,734.5h1.2 M614,734.5h1.2 M649,734.5h1.2 M684,734.5h1.2 M719,734.5h1.2 M789,734.5h1.2 M824,734.5h1.2 M859,734.5h1.2 M894,734.5h1.2 M964,734.5h1.2 M999,734.5h1.2 M1034,734.5h1.2 M1069,734.5h1.2 M1139,734.5h1.2 M1174,734.5h1.2 M1209,734.5h1.2 M1244,734.5h1.2 M1314,734.5h1.2 M1349,734.5h1.2 M1384,734.5h1.2 M1419,734.5h1.2 M1489,734.5h1.2 M1524,734.5h1.2 M1559,734.5h1.2 M1594,734.5h1.2 M1664,734.5h1.2 M1699,734.5h1.2 M1734,734.5h1.2 M20,760.5h1.2 M90,760.5h1.2 M125,760.5h1.2 M160,760.5h1.2 M195,760.5h1.2 M265,760.5h1.2 M300,760.5h1.2 M335,760.5h1.2 M370,760.5h1.2 M440,760.5h1.2 M475,760.5h1.2 M510,760.5h1.2 M545,760.5h1.2 M614,760.5h1.2 M649,760.5h1.2 M684,760.5h1.2 M719,760.5h1.2 M789,760.5h1.2 M824,760.5h1.2 M859,760.5h1.2 M894,760.5h1.2 M964,760.5h1.2 M999,760.5h1.2 M1034,760.5h1.2 M1069,760.5h1.2 M1139,760.5h1.2 M1174,760.5h1.2 M1209,760.5h1.2 M1244,760.5h1.2 M1314,760.5h1.2 M1349,760.5h1.2 M1384,760.5h1.2 M1419,760.5h1.2 M1489,760.5h1.2 M1524,760.5h1.2 M1559,760.5h1.2 M1594,760.5h1.2 M1664,760.5h1.2 M1699,760.5h1.2 M1734,760.5h1.2 M20,771.5h1.2 M90,771.5h1.2 M125,771.5h1.2 M160,771.5h1.2 M195,771.5h1.2 M265,771.5h1.2 M300,771.5h1.2 M335,771.5h1.2 M370,771.5h1.2 M440,771.5h1.2 M475,771.5h1.2 M510,771.5h1.2 M545,771.5h1.2 M614,771.5h1.2 M649,771.5h1.2 M684,771.5h1.2 M719,771.5h1.2 M789,771.5h1.2 M824,771.5h1.2 M859,771.5h1.2 M894,771.5h1.2 M964,771.5h1.2 M999,771.5h1.2 M1034,771.5h1.2 M1069,771.5h1.2 M1139,771.5h1.2 M1174,771.5h1.2 M1209,771.5h1.2 M1244,771.5h1.2 M1314,771.5h1.2 M1349,771.5h1.2 M1384,771.5h1.2 M1419,771.5h1.2 M1489,771.5h1.2 M1524,771.5h1.2 M1559,771.5h1.2 M1594,771.5h1.2 M1664,771.5h1.2 M20,783.5h1.2 M90,783.5h1.2 M125,783.5h1.2 M160,783.5h1.2 M195,783.5h1.2 M265,783.5h1.2 M300,783.5h1.2 M335,783.5h1.2 M370,783.5h1.2 M440,783.5h1.2 M475,783.5h1.2 M510,783.5h1.2 M545,783.5h1.2 M614,783.5h1.2 M649,783.5h1.2 M684,783.5h1.2 M719,783.5h1.2 M789,783.5h1.2 M824,783.5h1.2 M859,783.5h1.2 M894,783.5h1.2 M964,783.5h1.2 M999,783.5h1.2 M1034,783.5h1.2 M1069,783.5h1.2 M1139,783.5h1.2 M1174,783.5h1.2 M1209,783.5h1.2 M1244,783.5h1.2 M1314,783.5h1.2 M1349,783.5h1.2 M1384,783.5h1.2 M1419,783.5h1.2 M1489,783.5h1.2 M1524,783.5h1.2 M1559,783.5h1.2 M1594,783.5h1.2 M1664,783.5h1.2 M1699,783.5h1.2 M1734,783.5h1.2 M20,794.5h1.2 M90,794.5h1.2 M125,794.5h1.2 M160,794.5h1.2 M195,794.5h1.2 M265,794.5h1.2 M300,794.5h1.2 M335,794.5h1.2 M370,794.5h1.2 M440,794.5h1.2 M475,794.5h1.2 M510,794.5h1.2 M545,794.5h1.2 M614,794.5h1.2 M649,794.5h1.2 M684,794.5h1.2 M719,794.5h1.2 M789,794.5h1.2 M824,794.5h1.2 M859,794.5h1.2 M894,794.5h1.2 M964,794.5h1.2 M999,794.5h1.2 M1034,794.5h1.2 M1069,794.5h1.2 M1139,794.5h1.2 M1174,794.5h1.2 M1209,794.5h1.2 M1244,794.5h1.2 M1314,794.5h1.2 M1349,794.5h1.2 M1384,794.5h1.2 M1419,794.5h1.2 M1489,794.5h1.2 M1524,794.5h1.2 M1559,794.5h1.2 M1594,794.5h1.2 M1664,794.5h1.2 M20,806.5h1.2 M90,806.5h1.2 M125,806.5h1.2 M160,806.5h1.2 M195,806.5h1.2 M265,806.5h1.2 M300,806.5h1.2 M335,806.5h1.2 M370,806.5h1.2 M440,806.5h1.2 M475,806.5h1.2 M510,806.5h1.2 M545,806.5h1.2 M614,806.5h1.2 M649,806.5h1.2 M684,806.5h1.2 M719,806.5h1.2 M789,806.5h1.2 M824,806.5h1.2 M859,806.5h1.2 M894,806.5h1.2 M964,806.5h1.2 M999,806.5h1.2 M1034,806.5h1.2 M1069,806.5h1.2 M1139,806.5h1.2 M1174,806.5h1.2 M1209,806.5h1.2 M1244,806.5h1.2 M1314,806.5h1.2 M1349,806.5h1.2 M1384,806.5h1.2 M1419,806.5h1.2 M1489,806.5h1.2 M1524,806.5h1.2 M1559,806.5h1.2 M1594,806.5h1.2 M1664,806.5h1.2 M1699,806.5h1.2 M1734,806.5h1.2 M20,817.5h1.2 M90,817.5h1.2 M125,817.5h1.2 M160,817.5h1.2 M195,817.5h1.2 M265,817.5h1.2 M300,817.5h1.2 M335,817.5h1.2 M370,817.5h1.2 M440,817.5h1.2 M475,817.5h1.2 M510,817.5h1.2 M545,817.5h1.2 M614,817.5h1.2 M649,817.5h1.2 M684,817.5h1.2 M719,817.5h1.2 M789,817.5h1.2 M824,817.5h1.2 M859,817.5h1.2 M894,817.5h1.2 M964,817.5h1.2 M999,817.5h1.2 M1034,817.5h1.2 M1069,817.5h1.2 M1139,817.5h1.2 M1174,817.5h1.2 M1209,817.5h1.2 M1244,817.5h1.2 M1314,817.5h1.2 M1349,817.5h1.2 M1384,817.5h1.2 M1419,817.5h1.2 M1489,817.5h1.2 M1524,817.5h1.2 M1559,817.5h1.2 M1594,817.5h1.2 M1664,817.5h1.2 M20,829.5h1.2 M90,829.5h1.2 M125,829.5h1.2 M160,829.5h1.2 M195,829.5h1.2 M265,829.5h1.2 M300,829.5h1.2 M335,829.5h1.2 M370,829.5h1.2 M440,829.5h1.2 M475,829.5h1.2 M510,829.5h1.2 M545,829.5h1.2 M614,829.5h1.2 M649,829.5h1.2 M684,829.5h1.2 M719,829.5h1.2 M789,829.5h1.2 M824,829.5h1.2 M859,829.5h1.2 M894,829.5h1.2 M964,829.5h1.2 M999,829.5h1.2 M1034,829.5h1.2 M1069,829.5h1.2 M1139,829.5h1.2 M1174,829.5h1.2 M1209,829.5h1.2 M1244,829.5h1.2 M1314,829.5h1.2 M1349,829.5h1.2 M1384,829.5h1.2 M1419,829.5h1.2 M1489,829.5h1.2 M1524,829.5h1.2 M1559,829.5h1.2 M1594,829.5h1.2 M1664,829.5h1.2 M1699,829.5h1.2 M1734,829.5h1.2 M20,840.5h1.2 M90,840.5h1.2 M125,840.5h1.2 M160,840.5h1.2 M195,840.5h1.2 M265,840.5h1.2 M300,840.5h1.2 M335,840.5h1.2 M370,840.5h1.2 M440,840.5h1.2 M475,840.5h1.2 M510,840.5h1.2 M545,840.5h1.2 M614,840.5h1.2 M649,840.5h1.2 M684,840.5h1.2 M719,840.5h1.2 M789,840.5h1.2 M824,840.5h1.2 M859,840.5h1.2 M894,840.5h1.2 M964,840.5h1.2 M999,840.5h1.2 M1034,840.5h1.2 M1069,840.5h1.2 M1139,840.5h1.2 M1174,840.5h1.2 M1209,840.5h1.2 M1244,840.5h1.2 M1314,840.5h1.2 M1349,840.5h1.2 M1384,840.5h1.2 M1419,840.5h1.2 M1489,840.5h1.2 M1524,840.5h1.2 M1559,840.5h1.2 M1594,840.5h1.2 M1664,840.5h1.2 M20,852.5h1.2 M90,852.5h1.2 M125,852.5h1.2 M160,852.5h1.2 M195,852.5h1.2 M265,852.5h1.2 M300,852.5h1.2 M335,852.5h1.2 M370,852.5h1.2 M440,852.5h1.2 M475,852.5h1.2 M510,852.5h1.2 M545,852.5h1.2 M614,852.5h1.2 M649,852.5h1.2 M684,852.5h1.2 M719,852.5h1.2 M789,852.5h1.2 M824,852.5h1.2 M859,852.5h1.2 M894,852.5h1.2 M964,852.5h1.2 M999,852.5h1.2 M1034,852.5h1.2 M1069,852.5h1.2 M1139,852.5h1.2 M1174,852.5h1.2 M1209,852.5h1.2 M1244,852.5h1.2 M1314,852.5h1.2 M1349,852.5h1.2 M1384,852.5h1.2 M1419,852.5h1.2 M1489,852.5h1.2 M1524,852.5h1.2 M1559,852.5h1.2 M1594,852.5h1.2 M1664,852.5h1.2 M1699,852.5h1.2 M1734,852.5h1.2 M20,877.5h1.2 M90,877.5h1.2 M125,877.5h1.2 M160,877.5h1.2 M195,877.5h1.2 M265,877.5h1.2 M300,877.5h1.2 M335,877.5h1.2 M370,877.5h1.2 M440,877.5h1.2 M475,877.5h1.2 M510,877.5h1.2 M545,877.5h1.2 M614,877.5h1.2 M649,877.5h1.2 M684,877.5h1.2 M719,877.5h1.2 M789,877.5h1.2 M824,877.5h1.2 M859,877.5h1.2 M894,877.5h1.2 M964,877.5h1.2 M999,877.5h1.2 M1034,877.5h1.2 M1069,877.5h1.2 M1139,877.5h1.2 M1174,877.5h1.2 M1209,877.5h1.2 M1244,877.5h1.2 M1314,877.5h1.2 M1349,877.5h1.2 M1384,877.5h1.2 M1419,877.5h1.2 M1489,877.5h1.2 M1524,877.5h1.2 M1559,877.5h1.2 M1594,877.5h1.2 M1664,877.5h1.2 M1699,877.5h1.2 M1734,877.5h1.2 M20,888.5h1.2 M90,888.5h1.2 M125,888.5h1.2 M160,888.5h1.2 M195,888.5h1.2 M265,888.5h1.2 M300,888.5h1.2 M335,888.5h1.2 M370,888.5h1.2 M440,888.5h1.2 M475,888.5h1.2 M510,888.5h1.2 M545,888.5h1.2 M614,888.5h1.2 M649,888.5h1.2 M684,888.5h1.2 M719,888.5h1.2 M789,888.5h1.2 M824,888.5h1.2 M859,888.5h1.2 M894,888.5h1.2 M964,888.5h1.2 M999,888.5h1.2 M1034,888.5h1.2 M1069,888.5h1.2 M1139,888.5h1.2 M1174,888.5h1.2 M1209,888.5h1.2 M1244,888.5h1.2 M1314,888.5h1.2 M1349,888.5h1.2 M1384,888.5h1.2 M1419,888.5h1.2 M1489,888.5h1.2 M1524,888.5h1.2 M1559,888.5h1.2 M1594,888.5h1.2 M1664,888.5h1.2 M20,900.5h1.2 M90,900.5h1.2 M125,900.5h1.2 M160,900.5h1.2 M195,900.5h1.2 M265,900.5h1.2 M300,900.5h1.2 M335,900.5h1.2 M370,900.5h1.2 M440,900.5h1.2 M475,900.5h1.2 M510,900.5h1.2 M545,900.5h1.2 M614,900.5h1.2 M649,900.5h1.2 M684,900.5h1.2 M719,900.5h1.2 M789,900.5h1.2 M824,900.5h1.2 M859,900.5h1.2 M894,900.5h1.2 M964,900.5h1.2 M999,900.5h1.2 M1034,900.5h1.2 M1069,900.5h1.2 M1139,900.5h1.2 M1174,900.5h1.2 M1209,900.5h1.2 M1244,900.5h1.2 M1314,900.5h1.2 M1349,900.5h1.2 M1384,900.5h1.2 M1419,900.5h1.2 M1489,900.5h1.2 M1524,900.5h1.2 M1559,900.5h1.2 M1594,900.5h1.2 M1664,900.5h1.2 M1699,900.5h1.2 M1734,900.5h1.2 M20,911.5h1.2 M90,911.5h1.2 M125,911.5h1.2 M160,911.5h1.2 M195,911.5h1.2 M265,911.5h1.2 M300,911.5h1.2 M335,911.5h1.2 M370,911.5h1.2 M440,911.5h1.2 M475,911.5h1.2 M510,911.5h1.2 M545,911.5h1.2 M614,911.5h1.2 M649,911.5h1.2 M684,911.5h1.2 M719,911.5h1.2 M789,911.5h1.2 M824,911.5h1.2 M859,911.5h1.2 M894,911.5h1.2 M964,911.5h1.2 M999,911.5h1.2 M1034,911.5h1.2 M1069,911.5h1.2 M1139,911.5h1.2 M1174,911.5h1.2 M1209,911.5h1.2 M1244,911.5h1.2 M1314,911.5h1.2 M1349,911.5h1.2 M1384,911.5h1.2 M1419,911.5h1.2 M1489,911.5h1.2 M1524,911.5h1.2 M1559,911.5h1.2 M1594,911.5h1.2 M1664,911.5h1.2 M20,923.5h1.2 M90,923.5h1.2 M125,923.5h1.2 M160,923.5h1.2 M195,923.5h1.2 M265,923.5h1.2 M300,923.5h1.2 M335,923.5h1.2 M370,923.5h1.2 M440,923.5h1.2 M475,923.5h1.2 M510,923.5h1.2 M545,923.5h1.2 M614,923.5h1.2 M649,923.5h1.2 M684,923.5h1.2 M719,923.5h1.2 M789,923.5h1.2 M824,923.5h1.2 M859,923.5h1.2 M894,923.5h1.2 M964,923.5h1.2 M999,923.5h1.2 M1034,923.5h1.2 M1069,923.5h1.2 M1139,923.5h1.2 M1174,923.5h1.2 M1209,923.5h1.2 M1244,923.5h1.2 M1314,923.5h1.2 M1349,923.5h1.2 M1384,923.5h1.2 M1419,923.5h1.2 M1489,923.5h1.2 M1524,923.5h1.2 M1559,923.5h1.2 M1594,923.5h1.2 M1664,923.5h1.2 M1699,923.5h1.2 M1734,923.5h1.2 M20,934.5h1.2 M90,934.5h1.2 M125,934.5h1.2 M160,934.5h1.2 M195,934.5h1.2 M265,934.5h1.2 M300,934.5h1.2 M335,934.5h1.2 M370,934.5h1.2 M440,934.5h1.2 M475,934.5h1.2 M510,934.5h1.2 M545,934.5h1.2 M614,934.5h1.2 M649,934.5h1.2 M684,934.5h1.2 M719,934.5h1.2 M789,934.5h1.2 M824,934.5h1.2 M859,934.5h1.2 M894,934.5h1.2 M964,934.5h1.2 M999,934.5h1.2 M1034,934.5h1.2 M1069,934.5h1.2 M1139,934.5h1.2 M1174,934.5h1.2 M1209,934.5h1.2 M1244,934.5h1.2 M1314,934.5h1.2 M1349,934.5h1.2 M1384,934.5h1.2 M1419,934.5h1.2 M1489,934.5h1.2 M1524,934.5h1.2 M1559,934.5h1.2 M1594,934.5h1.2 M1664,934.5h1.2 M20,946.5h1.2 M90,946.5h1.2 M125,946.5h1.2 M160,946.5h1.2 M195,946.5h1.2 M265,946.5h1.2 M300,946.5h1.2 M335,946.5h1.2 M370,946.5h1.2 M440,946.5h1.2 M475,946.5h1.2 M510,946.5h1.2 M545,946.5h1.2 M614,946.5h1.2 M649,946.5h1.2 M684,946.5h1.2 M719,946.5h1.2 M789,946.5h1.2 M824,946.5h1.2 M859,946.5h1.2 M894,946.5h1.2 M964,946.5h1.2 M999,946.5h1.2 M1034,946.5h1.2 M1069,946.5h1.2 M1139,946.5h1.2 M1174,946.5h1.2 M1209,946.5h1.2 M1244,946.5h1.2 M1314,946.5h1.2 M1349,946.5h1.2 M1384,946.5h1.2 M1419,946.5h1.2 M1489,946.5h1.2 M1524,946.5h1.2 M1559,946.5h1.2 M1594,946.5h1.2 M1664,946.5h1.2 M1699,946.5h1.2 M1734,946.5h1.2 M20,957.5h1.2 M90,957.5h1.2 M125,957.5h1.2 M160,957.5h1.2 M195,957.5h1.2 M265,957.5h1.2 M300,957.5h1.2 M335,957.5h1.2 M370,957.5h1.2 M440,957.5h1.2 M475,957.5h1.2 M510,957.5h1.2 M545,957.5h1.2 M614,957.5h1.2 M649,957.5h1.2 M684,957.5h1.2 M719,957.5h1.2 M789,957.5h1.2 M824,957.5h1.2 M859,957.5h1.2 M894,957.5h1.2 M964,957.5h1.2 M999,957.5h1.2 M1034,957.5h1.2 M1069,957.5h1.2 M1139,957.5h1.2 M1174,957.5h1.2 M1209,957.5h1.2 M1244,957.5h1.2 M1314,957.5h1.2 M1349,957.5h1.2 M1384,957.5h1.2 M1419,957.5h1.2 M1489,957.5h1.2 M1524,957.5h1.2 M1559,957.5h1.2 M1594,957.5h1.2 M1664,957.5h1.2 M20,969.5h1.2 M90,969.5h1.2 M125,969.5h1.2 M160,969.5h1.2 M195,969.5h1.2 M265,969.5h1.2 M300,969.5h1.2 M335,969.5h1.2 M370,969.5h1.2 M440,969.5h1.2 M475,969.5h1.2 M510,969.5h1.2 M545,969.5h1.2 M614,969.5h1.2 M649,969.5h1.2 M684,969.5h1.2 M719,969.5h1.2 M789,969.5h1.2 M824,969.5h1.2 M859,969.5h1.2 M894,969.5h1.2 M964,969.5h1.2 M999,969.5h1.2 M1034,969.5h1.2 M1069,969.5h1.2 M1139,969.5h1.2 M1174,969.5h1.2 M1209,969.5h1.2 M1244,969.5h1.2 M1314,969.5h1.2 M1349,969.5h1.2 M1384,969.5h1.2 M1419,969.5h1.2 M1489,969.5h1.2 M1524,969.5h1.2 M1559,969.5h1.2 M1594,969.5h1.2 M1664,969.5h1.2 M1699,969.5h1.2 M1734,969.5h1.2 M20,992.5h1.2 M90,992.5h1.2 M125,992.5h1.2 M160,992.5h1.2 M195,992.5h1.2 M265,992.5h1.2 M300,992.5h1.2 M335,992.5h1.2 M370,992.5h1.2 M440,992.5h1.2 M475,992.5h1.2 M510,992.5h1.2 M545,992.5h1.2 M614,992.5h1.2 M649,992.5h1.2 M684,992.5h1.2 M719,992.5h1.2 M789,992.5h1.2 M824,992.5h1.2 M859,992.5h1.2 M894,992.5h1.2 M964,992.5h1.2 M999,992.5h1.2 M1034,992.5h1.2 M1069,992.5h1.2 M1139,992.5h1.2 M1174,992.5h1.2 M1209,992.5h1.2 M1244,992.5h1.2 M1314,992.5h1.2 M1349,992.5h1.2 M1384,992.5h1.2 M1419,992.5h1.2 M1489,992.5h1.2 M1524,992.5h1.2 M1559,992.5h1.2 M1594,992.5h1.2 M1664,992.5h1.2 M1699,992.5h1.2 M1734,992.5h1.2" stroke="#333" stroke-width="1.1"/>
<path d="M230.5,58v1M230.5,60v1M230.5,62v1M230.5,65v1M230.5,67v1M230.5,69v1M230.5,72v1M230.5,74v1M230.5,76v1M230.5,79v1M230.5,81v1M230.5,83v1M230.5,86v1M230.5,88v1M230.5,90v1M230.5,93v1M230.5,95v1M230.5,97v1M230.5,100v1M230.5,102v1M230.5,104v1M230.5,107v1M230.5,109v1M230.5,111v1M230.5,114v1M230.5,116v1M230.5,118v1M230.5,121v1M230.5,123v1M230.5,125v1M230.5,128v1M230.5,130v1M230.5,132v1M230.5,135v1M230.5,137v1M230.5,139v1M230.5,142v1M230.5,144v1M230.5,146v1M230.5,149v1M230.5,151v1M230.5,153v1M230.5,156v1M230.5,158v1M230.5,160v1M230.5,163v1M230.5,165v1M230.5,167v1M230.5,170v1M230.5,172v1M230.5,174v1M230.5,177v1M230.5,179v1M230.5,181v1M230.5,184v1M230.5,186v1M230.5,188v1M230.5,191v1M230.5,193v1M230.5,195v1M230.5,198v1M230.5,200v1M230.5,202v1M230.5,205v1M230.5,207v1M230.5,209v1M230.5,212v1M230.5,214v1M230.5,216v1M230.5,219v1M230.5,221v1M230.5,223v1M230.5,226v1M230.5,228v1M230.5,230v1M230.5,233v1M230.5,235v1M230.5,237v1M230.5,240v1M230.5,242v1M230.5,244v1M230.5,247v1M230.5,249v1M230.5,251v1M230.5,254v1M230.5,256v1M230.5,258v1M230.5,261v1M230.5,263v1M230.5,265v1M230.5,268v1M230.5,270v1M230.5,272v1M230.5,275v1M230.5,277v1M230.5,279v1M230.5,282v1M230.5,284v1M230.5,286v1M230.5,289v1M230.5,291v1M230.5,293v1M230.5,296v1M230.5,298v1M230.5,300v1M230.5,303v1M230.5,305v1M230.5,307v1M230.5,310v1M230.5,312v1M230.5,314v1M230.5,317v1M230.5,319v1M230.5,321v1M230.5,324v1M230.5,326v1M230.5,328v1M230.5,331v1M230.5,333v1M230.5,335v1M230.5,338v1M230.5,340v1M230.5,342v1M230.5,345v1M230.5,347v1M230.5,349v1M230.5,352v1M230.5,354v1M230.5,356v1M230.5,359v1M230.5,361v1M230.5,363v1M230.5,366v1M230.5,368v1M230.5,370v1M230.5,373v1M230.5,375v1M230.5,377v1M230.5,380v1M230.5,382v1M230.5,384v1M230.5,387v1M230.5,389v1M230.5,391v1M230.5,394v1M230.5,396v1M230.5,398v1M230.5,401v1M230.5,403v1M230.5,405v1M230.5,408v1M230.5,410v1M230.5,412v1M230.5,415v1M230.5,417v1M230.5,419v1M230.5,422v1M230.5,424v1M230.5,426v1M230.5,429v1M230.5,431v1M230.5,433v1M230.5,436v1M230.5,438v1M230.5,440v1M230.5,443v1M230.5,445v1M230.5,447v1M230.5,450v1M230.5,452v1M230.5,454v1M230.5,457v1M230.5,459v1M230.5,461v1M230.5,464v1M230.5,466v1M230.5,468v1M230.5,471v1M230.5,473v1M230.5,475v1M230.5,478v1M230.5,480v1M230.5,482v1M230.5,485v1M230.5,487v1M230.5,489v1M230.5,492v1M230.5,494v1M230.5,496v1M230.5,499v1M230.5,501v1M230.5,503v1M230.5,506v1M230.5,508v1M230.5,510v1M230.5,513v1M230.5,515v1M230.5,517v1M230.5,520v1M230.5,522v1M230.5,524v1M230.5,527v1M230.5,529v1M230.5,531v1M230.5,534v1M230.5,536v1M230.5,538v1M230.5,541v1M230.5,543v1M230.5,545v1M230.5,548v1M230.5,550v1M230.5,552v1M230.5,555v1M230.5,557v1M230.5,559v1M230.5,562v1M230.5,564v1M230.5,566v1M230.5,569v1M230.5,571v1M230.5,573v1M230.5,576v1M230.5,578v1M230.5,580v1M230.5,583v1M230.5,585v1M230.5,587v1M230.5,590v1M230.5,592v1M230.5,594v1M230.5,597v1M230.5,599v1M230.5,601v1M230.5,604v1M230.5,606v1M230.5,608v1M230.5,611v1M230.5,613v1M230.5,615v1M230.5,618v1M230.5,620v1M230.5,622v1M230.5,625v1M230.5,627v1M230.5,629v1M230.5,632v1M230.5,634v1M230.5,636v1M230.5,639v1M230.5,641v1M230.5,643v1M230.5,646v1M230.5,648v1M230.5,650v1M230.5,653v1M230.5,655v1M230.5,657v1M230.5,660v1M230.5,662v1M230.5,664v1M230.5,667v1M230.5,669v1M230.5,671v1M230.5,674v1M230.5,676v1M230.5,678v1M230.5,681v1M230.5,683v1M230.5,685v1M230.5,688v1M230.5,690v1M230.5,692v1M230.5,695v1M230.5,697v1M230.5,699v1M230.5,702v1M230.5,704v1M230.5,706v1M230.5,709v1M230.5,711v1M230.5,713v1M230.5,716v1M230.5,718v1M230.5,720v1M230.5,723v1M230.5,725v1M230.5,727v1M230.5,730v1M230.5,732v1M230.5,734v1M230.5,737v1M230.5,739v1M230.5,741v1M230.5,760v1M230.5,762v1M230.5,765v1M230.5,767v1M230.5,769v1M230.5,772v1M230.5,774v1M230.5,776v1M230.5,779v1M230.5,781v1M230.5,783v1M230.5,786v1M230.5,788v1M230.5,790v1M230.5,793v1M230.5,795v1M230.5,797v1M230.5,800v1M230.5,802v1M230.5,804v1M230.5,807v1M230.5,809v1M230.5,811v1M230.5,814v1M230.5,816v1M230.5,818v1M230.5,821v1M230.5,823v1M230.5,825v1M230.5,828v1M230.5,830v1M230.5,832v1M230.5,835v1M230.5,837v1M230.5,839v1M230.5,842v1M230.5,844v1M230.5,846v1M230.5,849v1M230.5,851v1M230.5,853v1M230.5,856v1M230.5,858v1M230.5,860v1M230.5,863v1M230.5,865v1M230.5,867v1M230.5,870v1M230.5,872v1M230.5,874v1M230.5,877v1M230.5,879v1M230.5,881v1M230.5,884v1M230.5,886v1M230.5,888v1M230.5,891v1M230.5,893v1M230.5,895v1M230.5,898v1M230.5,900v1M230.5,902v1M230.5,905v1M230.5,907v1M230.5,909v1M230.5,912v1M230.5,914v1M230.5,916v1M230.5,919v1M230.5,921v1M230.5,923v1M230.5,926v1M230.5,928v1M230.5,930v1M230.5,933v1M230.5,935v1M230.5,937v1M230.5,940v1M230.5,942v1M230.5,944v1M230.5,947v1M230.5,949v1M230.5,951v1M230.5,954v1M230.5,956v1M230.5,958v1M230.5,961v1M230.5,963v1M230.5,965v1M230.5,968v1M230.5,970v1M230.5,972v1M230.5,975v1M230.5,977v1M230.5,979v1M230.5,982v1M230.5,984v1M230.5,986v1M230.5,989v1M230.5,991v1M405.5,58v1M405.5,60v1M405.5,62v1M405.5,65v1M405.5,67v1M405.5,69v1M405.5,72v1M405.5,74v1M405.5,76v1M405.5,79v1M405.5,81v1M405.5,83v1M405.5,86v1M405.5,88v1M405.5,90v1M405.5,93v1M405.5,95v1M405.5,97v1M405.5,100v1M405.5,102v1M405.5,104v1M405.5,107v1M405.5,109v1M405.5,111v1M405.5,114v1M405.5,116v1M405.5,118v1M405.5,121v1M405.5,123v1M405.5,125v1M405.5,128v1M405.5,130v1M405.5,132v1M405.5,135v1M405.5,137v1M405.5,139v1M405.5,142v1M405.5,144v1M405.5,146v1M405.5,149v1M405.5,151v1M405.5,153v1M405.5,156v1M405.5,158v1M405.5,160v1M405.5,163v1M405.5,165v1M405.5,167v1M405.5,170v1M405.5,172v1M405.5,174v1M405.5,177v1M405.5,179v1M405.5,181v1M405.5,184v1M405.5,186v1M405.5,188v1M405.5,191v1M405.5,193v1M405.5,195v1M405.5,198v1M405.5,200v1M405.5,202v1M405.5,205v1M405.5,207v1M405.5,209v1M405.5,212v1M405.5,214v1M405.5,216v1M405.5,219v1M405.5,221v1M405.5,223v1M405.5,226v1M405.5,228v1M405.5,230v1M405.5,233v1M405.5,235v1M405.5,237v1M405.5,240v1M405.5,242v1M405.5,244v1M405.5,247v1M405.5,249v1M405.5,251v1M405.5,254v1M405.5,256v1M405.5,258v1M405.5,261v1M405.5,263v1M405.5,265v1M405.5,268v1M405.5,270v1M405.5,272v1M405.5,275v1M405.5,277v1M405.5,279v1M405.5,282v1M405.5,284v1M405.5,286v1M405.5,289v1M405.5,291v1M405.5,293v1M405.5,296v1M405.5,298v1M405.5,300v1M405.5,303v1M405.5,305v1M405.5,307v1M405.5,310v1M405.5,312v1M405.5,314v1M405.5,317v1M405.5,319v1M405.5,321v1M405.5,324v1M405.5,326v1M405.5,328v1M405.5,331v1M405.5,333v1M405.5,335v1M405.5,338v1M405.5,340v1M405.5,342v1M405.5,345v1M405.5,347v1M405.5,349v1M405.5,352v1M405.5,354v1M405.5,356v1M405.5,359v1M405.5,361v1M405.5,363v1M405.5,366v1M405.5,368v1M405.5,370v1M405.5,373v1M405.5,375v1M405.5,377v1M405.5,380v1M405.5,382v1M405.5,384v1M405.5,387v1M405.5,389v1M405.5,391v1M405.5,394v1M405.5,396v1M405.5,398v1M405.5,401v1M405.5,403v1M405.5,405v1M405.5,408v1M405.5,410v1M405.5,412v1M405.5,415v1M405.5,417v1M405.5,419v1M405.5,422v1M405.5,424v1M405.5,426v1M405.5,429v1M405.5,431v1M405.5,433v1M405.5,436v1M405.5,438v1M405.5,440v1M405.5,443v1M405.5,445v1M405.5,447v1M405.5,450v1M405.5,452v1M405.5,454v1M405.5,457v1M405.5,459v1M405.5,461v1M405.5,464v1M405.5,466v1M405.5,468v1M405.5,471v1M405.5,473v1M405.5,475v1M405.5,478v1M405.5,480v1M405.5,482v1M405.5,485v1M405.5,487v1M405.5,489v1M405.5,492v1M405.5,494v1M405.5,496v1M405.5,499v1M405.5,501v1M405.5,503v1M405.5,506v1M405.5,508v1M405.5,510v1M405.5,513v1M405.5,515v1M405.5,517v1M405.5,520v1M405.5,522v1M405.5,524v1M405.5,527v1M405.5,529v1M405.5,531v1M405.5,534v1M405.5,536v1M405.5,538v1M405.5,541v1M405.5,543v1M405.5,545v1M405.5,548v1M405.5,550v1M405.5,552v1M405.5,555v1M405.5,557v1M405.5,559v1M405.5,562v1M405.5,564v1M405.5,566v1M405.5,569v1M405.5,571v1M405.5,573v1M405.5,576v1M405.5,578v1M405.5,580v1M405.5,583v1M405.5,585v1M405.5,587v1M405.5,590v1M405.5,592v1M405.5,594v1M405.5,597v1M405.5,599v1M405.5,601v1M405.5,604v1M405.5,606v1M405.5,608v1M405.5,611v1M405.5,613v1M405.5,615v1M405.5,618v1M405.5,620v1M405.5,622v1M405.5,625v1M405.5,627v1M405.5,629v1M405.5,632v1M405.5,634v1M405.5,636v1M405.5,639v1M405.5,641v1M405.5,643v1M405.5,646v1M405.5,648v1M405.5,650v1M405.5,653v1M405.5,655v1M405.5,657v1M405.5,660v1M405.5,662v1M405.5,664v1M405.5,667v1M405.5,669v1M405.5,671v1M405.5,674v1M405.5,676v1M405.5,678v1M405.5,681v1M405.5,683v1M405.5,685v1M405.5,688v1M405.5,690v1M405.5,692v1M405.5,695v1M405.5,697v1M405.5,699v1M405.5,702v1M405.5,704v1M405.5,706v1M405.5,709v1M405.5,711v1M405.5,713v1M405.5,716v1M405.5,718v1M405.5,720v1M405.5,723v1M405.5,725v1M405.5,727v1M405.5,730v1M405.5,732v1M405.5,734v1M405.5,737v1M405.5,739v1M405.5,741v1M405.5,760v1M405.5,762v1M405.5,765v1M405.5,767v1M405.5,769v1M405.5,772v1M405.5,774v1M405.5,776v1M405.5,779v1M405.5,781v1M405.5,783v1M405.5,786v1M405.5,788v1M405.5,790v1M405.5,793v1M405.5,795v1M405.5,797v1M405.5,800v1M405.5,802v1M405.5,804v1M405.5,807v1M405.5,809v1M405.5,811v1M405.5,814v1M405.5,816v1M405.5,818v1M405.5,821v1M405.5,823v1M405.5,825v1M405.5,828v1M405.5,830v1M405.5,832v1M405.5,835v1M405.5,837v1M405.5,839v1M405.5,842v1M405.5,844v1M405.5,846v1M405.5,849v1M405.5,851v1M405.5,853v1M405.5,856v1M405.5,858v1M405.5,860v1M405.5,863v1M405.5,865v1M405.5,867v1M405.5,870v1M405.5,872v1M405.5,874v1M405.5,877v1M405.5,879v1M405.5,881v1M405.5,884v1M405.5,886v1M405.5,888v1M405.5,891v1M405.5,893v1M405.5,895v1M405.5,898v1M405.5,900v1M405.5,902v1M405.5,905v1M405.5,907v1M405.5,909v1M405.5,912v1M405.5,914v1M405.5,916v1M405.5,919v1M405.5,921v1M405.5,923v1M405.5,926v1M405.5,928v1M405.5,930v1M405.5,933v1M405.5,935v1M405.5,937v1M405.5,940v1M405.5,942v1M405.5,944v1M405.5,947v1M405.5,949v1M405.5,951v1M405.5,954v1M405.5,956v1M405.5,958v1M405.5,961v1M405.5,963v1M405.5,965v1M405.5,968v1M405.5,970v1M405.5,972v1M405.5,975v1M405.5,977v1M405.5,979v1M405.5,982v1M405.5,984v1M405.5,986v1M405.5,989v1M405.5,991v1M580.5,58v1M580.5,60v1M580.5,62v1M580.5,65v1M580.5,67v1M580.5,69v1M580.5,72v1M580.5,74v1M580.5,76v1M580.5,79v1M580.5,81v1M580.5,83v1M580.5,86v1M580.5,88v1M580.5,90v1M580.5,93v1M580.5,95v1M580.5,97v1M580.5,100v1M580.5,102v1M580.5,104v1M580.5,107v1M580.5,109v1M580.5,111v1M580.5,114v1M580.5,116v1M580.5,118v1M580.5,121v1M580.5,123v1M580.5,125v1M580.5,128v1M580.5,130v1M580.5,132v1M580.5,135v1M580.5,137v1M580.5,139v1M580.5,142v1M580.5,144v1M580.5,146v1M580.5,149v1M580.5,151v1M580.5,153v1M580.5,156v1M580.5,158v1M580.5,160v1M580.5,163v1M580.5,165v1M580.5,167v1M580.5,170v1M580.5,172v1M580.5,174v1M580.5,177v1M580.5,179v1M580.5,181v1M580.5,184v1M580.5,186v1M580.5,188v1M580.5,191v1M580.5,193v1M580.5,195v1M580.5,198v1M580.5,200v1M580.5,202v1M580.5,205v1M580.5,207v1M580.5,209v1M580.5,212v1M580.5,214v1M580.5,216v1M580.5,219v1M580.5,221v1M580.5,223v1M580.5,226v1M580.5,228v1M580.5,230v1M580.5,233v1M580.5,235v1M580.5,237v1M580.5,240v1M580.5,242v1M580.5,244v1M580.5,247v1M580.5,249v1M580.5,251v1M580.5,254v1M580.5,256v1M580.5,258v1M580.5,261v1M580.5,263v1M580.5,265v1M580.5,268v1M580.5,270v1M580.5,272v1M580.5,275v1M580.5,277v1M580.5,279v1M580.5,282v1M580.5,284v1M580.5,286v1M580.5,289v1M580.5,291v1M580.5,293v1M580.5,296v1M580.5,298v1M580.5,300v1M580.5,303v1M580.5,305v1M580.5,307v1M580.5,310v1M580.5,312v1M580.5,314v1M580.5,317v1M580.5,319v1M580.5,321v1M580.5,324v1M580.5,326v1M580.5,328v1M580.5,331v1M580.5,333v1M580.5,335v1M580.5,338v1M580.5,340v1M580.5,342v1M580.5,345v1M580.5,347v1M580.5,349v1M580.5,352v1M580.5,354v1M580.5,356v1M580.5,359v1M580.5,361v1M580.5,363v1M580.5,366v1M580.5,368v1M580.5,370v1M580.5,373v1M580.5,375v1M580.5,377v1M580.5,380v1M580.5,382v1M580.5,384v1M580.5,387v1M580.5,389v1M580.5,391v1M580.5,394v1M580.5,396v1M580.5,398v1M580.5,401v1M580.5,403v1M580.5,405v1M580.5,408v1M580.5,410v1M580.5,412v1M580.5,415v1M580.5,417v1M580.5,419v1M580.5,422v1M580.5,424v1M580.5,426v1M580.5,429v1M580.5,431v1M580.5,433v1M580.5,436v1M580.5,438v1M580.5,440v1M580.5,443v1M580.5,445v1M580.5,447v1M580.5,450v1M580.5,452v1M580.5,454v1M580.5,457v1M580.5,459v1M580.5,461v1M580.5,464v1M580.5,466v1M580.5,468v1M580.5,471v1M580.5,473v1M580.5,475v1M580.5,478v1M580.5,480v1M580.5,482v1M580.5,485v1M580.5,487v1M580.5,489v1M580.5,492v1M580.5,494v1M580.5,496v1M580.5,499v1M580.5,501v1M580.5,503v1M580.5,506v1M580.5,508v1M580.5,510v1M580.5,513v1M580.5,515v1M580.5,517v1M580.5,520v1M580.5,522v1M580.5,524v1M580.5,527v1M580.5,529v1M580.5,531v1M580.5,534v1M580.5,536v1M580.5,538v1M580.5,541v1M580.5,543v1M580.5,545v1M580.5,548v1M580.5,550v1M580.5,552v1M580.5,555v1M580.5,557v1M580.5,559v1M580.5,562v1M580.5,564v1M580.5,566v1M580.5,569v1M580.5,571v1M580.5,573v1M580.5,576v1M580.5,578v1M580.5,580v1M580.5,583v1M580.5,585v1M580.5,587v1M580.5,590v1M580.5,592v1M580.5,594v1M580.5,597v1M580.5,599v1M580.5,601v1M580.5,604v1M580.5,606v1M580.5,608v1M580.5,611v1M580.5,613v1M580.5,615v1M580.5,618v1M580.5,620v1M580.5,622v1M580.5,625v1M580.5,627v1M580.5,629v1M580.5,632v1M580.5,634v1M580.5,636v1M580.5,639v1M580.5,641v1M580.5,643v1M580.5,646v1M580.5,648v1M580.5,650v1M580.5,653v1M580.5,655v1M580.5,657v1M580.5,660v1M580.5,662v1M580.5,664v1M580.5,667v1M580.5,669v1M580.5,671v1M580.5,674v1M580.5,676v1M580.5,678v1M580.5,681v1M580.5,683v1M580.5,685v1M580.5,688v1M580.5,690v1M580.5,692v1M580.5,695v1M580.5,697v1M580.5,699v1M580.5,702v1M580.5,704v1M580.5,706v1M580.5,709v1M580.5,711v1M580.5,713v1M580.5,716v1M580.5,718v1M580.5,720v1M580.5,723v1M580.5,725v1M580.5,727v1M580.5,730v1M580.5,732v1M580.5,734v1M580.5,737v1M580.5,739v1M580.5,741v1M580.5,760v1M580.5,762v1M580.5,765v1M580.5,767v1M580.5,769v1M580.5,772v1M580.5,774v1M580.5,776v1M580.5,779v1M580.5,781v1M580.5,783v1M580.5,786v1M580.5,788v1M580.5,790v1M580.5,793v1M580.5,795v1M580.5,797v1M580.5,800v1M580.5,802v1M580.5,804v1M580.5,807v1M580.5,809v1M580.5,811v1M580.5,814v1M580.5,816v1M580.5,818v1M580.5,821v1M580.5,823v1M580.5,825v1M580.5,828v1M580.5,830v1M580.5,832v1M580.5,835v1M580.5,837v1M580.5,839v1M580.5,842v1M580.5,844v1M580.5,846v1M580.5,849v1M580.5,851v1M580.5,853v1M580.5,856v1M580.5,858v1M580.5,860v1M580.5,863v1M580.5,865v1M580.5,867v1M580.5,870v1M580.5,872v1M580.5,874v1M580.5,877v1M580.5,879v1M580.5,881v1M580.5,884v1M580.5,886v1M580.5,888v1M580.5,891v1M580.5,893v1M580.5,895v1M580.5,898v1M580.5,900v1M580.5,902v1M580.5,905v1M580.5,907v1M580.5,909v1M580.5,912v1M580.5,914v1M580.5,916v1M580.5,919v1M580.5,921v1M580.5,923v1M580.5,926v1M580.5,928v1M580.5,930v1M580.5,933v1M580.5,935v1M580.5,937v1M580.5,940v1M580.5,942v1M580.5,944v1M580.5,947v1M580.5,949v1M580.5,951v1M580.5,954v1M580.5,956v1M580.5,958v1M580.5,961v1M580.5,963v1M580.5,965v1M580.5,968v1M580.5,970v1M580.5,972v1M580.5,975v1M580.5,977v1M580.5,979v1M580.5,982v1M580.5,984v1M580.5,986v1M580.5,989v1M580.5,991v1M755.5,58v1M755.5,60v1M755.5,62v1M755.5,65v1M755.5,67v1M755.5,69v1M755.5,72v1M755.5,74v1M755.5,76v1M755.5,79v1M755.5,81v1M755.5,83v1M755.5,86v1M755.5,88v1M755.5,90v1M755.5,93v1M755.5,95v1M755.5,97v1M755.5,100v1M755.5,102v1M755.5,104v1M755.5,107v1M755.5,109v1M755.5,111v1M755.5,114v1M755.5,116v1M755.5,118v1M755.5,121v1M755.5,123v1M755.5,125v1M755.5,128v1M755.5,130v1M755.5,132v1M755.5,135v1M755.5,137v1M755.5,139v1M755.5,142v1M755.5,144v1M755.5,146v1M755.5,149v1M755.5,151v1M755.5,153v1M755.5,156v1M755.5,158v1M755.5,160v1M755.5,163v1M755.5,165v1M755.5,167v1M755.5,170v1M755.5,172v1M755.5,174v1M755.5,177v1M755.5,179v1M755.5,181v1M755.5,184v1M755.5,186v1M755.5,188v1M755.5,191v1M755.5,193v1M755.5,195v1M755.5,198v1M755.5,200v1M755.5,202v1M755.5,205v1M755.5,207v1M755.5,209v1M755.5,212v1M755.5,214v1M755.5,216v1M755.5,219v1M755.5,221v1M755.5,223v1M755.5,226v1M755.5,228v1M755.5,230v1M755.5,233v1M755.5,235v1M755.5,237v1M755.5,240v1M755.5,242v1M755.5,244v1M755.5,247v1M755.5,249v1M755.5,251v1M755.5,254v1M755.5,256v1M755.5,258v1M755.5,261v1M755.5,263v1M755.5,265v1M755.5,268v1M755.5,270v1M755.5,272v1M755.5,275v1M755.5,277v1M755.5,279v1M755.5,282v1M755.5,284v1M755.5,286v1M755.5,289v1M755.5,291v1M755.5,293v1M755.5,296v1M755.5,298v1M755.5,300v1M755.5,303v1M755.5,305v1M755.5,307v1M755.5,310v1M755.5,312v1M755.5,314v1M755.5,317v1M755.5,319v1M755.5,321v1M755.5,324v1M755.5,326v1M755.5,328v1M755.5,331v1M755.5,333v1M755.5,335v1M755.5,338v1M755.5,340v1M755.5,342v1M755.5,345v1M755.5,347v1M755.5,349v1M755.5,352v1M755.5,354v1M755.5,356v1M755.5,359v1M755.5,361v1M755.5,363v1M755.5,366v1M755.5,368v1M755.5,370v1M755.5,373v1M755.5,375v1M755.5,377v1M755.5,380v1M755.5,382v1M755.5,384v1M755.5,387v1M755.5,389v1M755.5,391v1M755.5,394v1M755.5,396v1M755.5,398v1M755.5,401v1M755.5,403v1M755.5,405v1M755.5,408v1M755.5,410v1M755.5,412v1M755.5,415v1M755.5,417v1M755.5,419v1M755.5,422v1M755.5,424v1M755.5,426v1M755.5,429v1M755.5,431v1M755.5,433v1M755.5,436v1M755.5,438v1M755.5,440v1M755.5,443v1M755.5,445v1M755.5,447v1M755.5,450v1M755.5,452v1M755.5,454v1M755.5,457v1M755.5,459v1M755.5,461v1M755.5,464v1M755.5,466v1M755.5,468v1M755.5,471v1M755.5,473v1M755.5,475v1M755.5,478v1M755.5,480v1M755.5,482v1M755.5,485v1M755.5,487v1M755.5,489v1M755.5,492v1M755.5,494v1M755.5,496v1M755.5,499v1M755.5,501v1M755.5,503v1M755.5,506v1M755.5,508v1M755.5,510v1M755.5,513v1M755.5,515v1M755.5,517v1M755.5,520v1M755.5,522v1M755.5,524v1M755.5,527v1M755.5,529v1M755.5,531v1M755.5,534v1M755.5,536v1M755.5,538v1M755.5,541v1M755.5,543v1M755.5,545v1M755.5,548v1M755.5,550v1M755.5,552v1M755.5,555v1M755.5,557v1M755.5,559v1M755.5,562v1M755.5,564v1M755.5,566v1M755.5,569v1M755.5,571v1M755.5,573v1M755.5,576v1M755.5,578v1M755.5,580v1M755.5,583v1M755.5,585v1M755.5,587v1M755.5,590v1M755.5,592v1M755.5,594v1M755.5,597v1M755.5,599v1M755.5,601v1M755.5,604v1M755.5,606v1M755.5,608v1M755.5,611v1M755.5,613v1M755.5,615v1M755.5,618v1M755.5,620v1M755.5,622v1M755.5,625v1M755.5,627v1M755.5,629v1M755.5,632v1M755.5,634v1M755.5,636v1M755.5,639v1M755.5,641v1M755.5,643v1M755.5,646v1M755.5,648v1M755.5,650v1M755.5,653v1M755.5,655v1M755.5,657v1M755.5,660v1M755.5,662v1M755.5,664v1M755.5,667v1M755.5,669v1M755.5,671v1M755.5,674v1M755.5,676v1M755.5,678v1M755.5,681v1M755.5,683v1M755.5,685v1M755.5,688v1M755.5,690v1M755.5,692v1M755.5,695v1M755.5,697v1M755.5,699v1M755.5,702v1M755.5,704v1M755.5,706v1M755.5,709v1M755.5,711v1M755.5,713v1M755.5,716v1M755.5,718v1M755.5,720v1M755.5,723v1M755.5,725v1M755.5,727v1M755.5,730v1M755.5,732v1M755.5,734v1M755.5,737v1M755.5,739v1M755.5,741v1M755.5,760v1M755.5,762v1M755.5,765v1M755.5,767v1M755.5,769v1M755.5,772v1M755.5,774v1M755.5,776v1M755.5,779v1M755.5,781v1M755.5,783v1M755.5,786v1M755.5,788v1M755.5,790v1M755.5,793v1M755.5,795v1M755.5,797v1M755.5,800v1M755.5,802v1M755.5,804v1M755.5,807v1M755.5,809v1M755.5,811v1M755.5,814v1M755.5,816v1M755.5,818v1M755.5,821v1M755.5,823v1M755.5,825v1M755.5,828v1M755.5,830v1M755.5,832v1M755.5,835v1M755.5,837v1M755.5,839v1M755.5,842v1M755.5,844v1M755.5,846v1M755.5,849v1M755.5,851v1M755.5,853v1M755.5,856v1M755.5,858v1M755.5,860v1M755.5,863v1M755.5,865v1M755.5,867v1M755.5,870v1M755.5,872v1M755.5,874v1M755.5,877v1M755.5,879v1M755.5,881v1M755.5,884v1M755.5,886v1M755.5,888v1M755.5,891v1M755.5,893v1M755.5,895v1M755.5,898v1M755.5,900v1M755.5,902v1M755.5,905v1M755.5,907v1M755.5,909v1M755.5,912v1M755.5,914v1M755.5,916v1M755.5,919v1M755.5,921v1M755.5,923v1M755.5,926v1M755.5,928v1M755.5,930v1M755.5,933v1M755.5,935v1M755.5,937v1M755.5,940v1M755.5,942v1M755.5,944v1M755.5,947v1M755.5,949v1M755.5,951v1M755.5,954v1M755.5,956v1M755.5,958v1M755.5,961v1M755.5,963v1M755.5,965v1M755.5,968v1M755.5,970v1M755.5,972v1M755.5,975v1M755.5,977v1M755.5,979v1M755.5,982v1M755.5,984v1M755.5,986v1M755.5,989v1M755.5,991v1M929.5,58v1M929.5,60v1M929.5,62v1M929.5,65v1M929.5,67v1M929.5,69v1M929.5,72v1M929.5,74v1M929.5,76v1M929.5,79v1M929.5,81v1M929.5,83v1M929.5,86v1M929.5,88v1M929.5,90v1M929.5,93v1M929.5,95v1M929.5,97v1M929.5,100v1M929.5,102v1M929.5,104v1M929.5,107v1M929.5,109v1M929.5,111v1M929.5,114v1M929.5,116v1M929.5,118v1M929.5,121v1M929.5,123v1M929.5,125v1M929.5,128v1M929.5,130v1M929.5,132v1M929.5,135v1M929.5,137v1M929.5,139v1M929.5,142v1M929.5,144v1M929.5,146v1M929.5,149v1M929.5,151v1M929.5,153v1M929.5,156v1M929.5,158v1M929.5,160v1M929.5,163v1M929.5,165v1M929.5,167v1M929.5,170v1M929.5,172v1M929.5,174v1M929.5,177v1M929.5,179v1M929.5,181v1M929.5,184v1M929.5,186v1M929.5,188v1M929.5,191v1M929.5,193v1M929.5,195v1M929.5,198v1M929.5,200v1M929.5,202v1M929.5,205v1M929.5,207v1M929.5,209v1M929.5,212v1M929.5,214v1M929.5,216v1M929.5,219v1M929.5,221v1M929.5,223v1M929.5,226v1M929.5,228v1M929.5,230v1M929.5,233v1M929.5,235v1M929.5,237v1M929.5,240v1M929.5,242v1M929.5,244v1M929.5,247v1M929.5,249v1M929.5,251v1M929.5,254v1M929.5,256v1M929.5,258v1M929.5,261v1M929.5,263v1M929.5,265v1M929.5,268v1M929.5,270v1M929.5,272v1M929.5,275v1M929.5,277v1M929.5,279v1M929.5,282v1M929.5,284v1M929.5,286v1M929.5,289v1M929.5,291v1M929.5,293v1M929.5,296v1M929.5,298v1M929.5,300v1M929.5,303v1M929.5,305v1M929.5,307v1M929.5,310v1M929.5,312v1M929.5,314v1M929.5,317v1M929.5,319v1M929.5,321v1M929.5,324v1M929.5,326v1M929.5,328v1M929.5,331v1M929.5,333v1M929.5,335v1M929.5,338v1M929.5,340v1M929.5,342v1M929.5,345v1M929.5,347v1M929.5,349v1M929.5,352v1M929.5,354v1M929.5,356v1M929.5,359v1M929.5,361v1M929.5,363v1M929.5,366v1M929.5,368v1M929.5,370v1M929.5,373v1M929.5,375v1M929.5,377v1M929.5,380v1M929.5,382v1M929.5,384v1M929.5,387v1M929.5,389v1M929.5,391v1M929.5,394v1M929.5,396v1M929.5,398v1M929.5,401v1M929.5,403v1M929.5,405v1M929.5,408v1M929.5,410v1M929.5,412v1M929.5,415v1M929.5,417v1M929.5,419v1M929.5,422v1M929.5,424v1M929.5,426v1M929.5,429v1M929.5,431v1M929.5,433v1M929.5,436v1M929.5,438v1M929.5,440v1M929.5,443v1M929.5,445v1M929.5,447v1M929.5,450v1M929.5,452v1M929.5,454v1M929.5,457v1M929.5,459v1M929.5,461v1M929.5,464v1M929.5,466v1M929.5,468v1M929.5,471v1M929.5,473v1M929.5,475v1M929.5,478v1M929.5,480v1M929.5,482v1M929.5,485v1M929.5,487v1M929.5,489v1M929.5,492v1M929.5,494v1M929.5,496v1M929.5,499v1M929.5,501v1M929.5,503v1M929.5,506v1M929.5,508v1M929.5,510v1M929.5,513v1M929.5,515v1M929.5,517v1M929.5,520v1M929.5,522v1M929.5,524v1M929.5,527v1M929.5,529v1M929.5,531v1M929.5,534v1M929.5,536v1M929.5,538v1M929.5,541v1M929.5,543v1M929.5,545v1M929.5,548v1M929.5,550v1M929.5,552v1M929.5,555v1M929.5,557v1M929.5,559v1M929.5,562v1M929.5,564v1M929.5,566v1M929.5,569v1M929.5,571v1M929.5,573v1M929.5,576v1M929.5,578v1M929.5,580v1M929.5,583v1M929.5,585v1M929.5,587v1M929.5,590v1M929.5,592v1M929.5,594v1M929.5,597v1M929.5,599v1M929.5,601v1M929.5,604v1M929.5,606v1M929.5,608v1M929.5,611v1M929.5,613v1M929.5,615v1M929.5,618v1M929.5,620v1M929.5,622v1M929.5,625v1M929.5,627v1M929.5,629v1M929.5,632v1M929.5,634v1M929.5,636v1M929.5,639v1M929.5,641v1M929.5,643v1M929.5,646v1M929.5,648v1M929.5,650v1M929.5,653v1M929.5,655v1M929.5,657v1M929.5,660v1M929.5,662v1M929.5,664v1M929.5,667v1M929.5,669v1M929.5,671v1M929.5,674v1M929.5,676v1M929.5,678v1M929.5,681v1M929.5,683v1M929.5,685v1M929.5,688v1M929.5,690v1M929.5,692v1M929.5,695v1M929.5,697v1M929.5,699v1M929.5,702v1M929.5,704v1M929.5,706v1M929.5,709v1M929.5,711v1M929.5,713v1M929.5,716v1M929.5,718v1M929.5,720v1M929.5,723v1M929.5,725v1M929.5,727v1M929.5,730v1M929.5,732v1M929.5,734v1M929.5,737v1M929.5,739v1M929.5,741v1M929.5,760v1M929.5,762v1M929.5,765v1M929.5,767v1M929.5,769v1M929.5,772v1M929.5,774v1M929.5,776v1M929.5,779v1M929.5,781v1M929.5,783v1M929.5,786v1M929.5,788v1M929.5,790v1M929.5,793v1M929.5,795v1M929.5,797v1M929.5,800v1M929.5,802v1M929.5,804v1M929.5,807v1M929.5,809v1M929.5,811v1M929.5,814v1M929.5,816v1M929.5,818v1M929.5,821v1M929.5,823v1M929.5,825v1M929.5,828v1M929.5,830v1M929.5,832v1M929.5,835v1M929.5,837v1M929.5,839v1M929.5,842v1M929.5,844v1M929.5,846v1M929.5,849v1M929.5,851v1M929.5,853v1M929.5,856v1M929.5,858v1M929.5,860v1M929.5,863v1M929.5,865v1M929.5,867v1M929.5,870v1M929.5,872v1M929.5,874v1M929.5,877v1M929.5,879v1M929.5,881v1M929.5,884v1M929.5,886v1M929.5,888v1M929.5,891v1M929.5,893v1M929.5,895v1M929.5,898v1M929.5,900v1M929.5,902v1M929.5,905v1M929.5,907v1M929.5,909v1M929.5,912v1M929.5,914v1M929.5,916v1M929.5,919v1M929.5,921v1M929.5,923v1M929.5,926v1M929.5,928v1M929.5,930v1M929.5,933v1M929.5,935v1M929.5,937v1M929.5,940v1M929.5,942v1M929.5,944v1M929.5,947v1M929.5,949v1M929.5,951v1M929.5,954v1M929.5,956v1M929.5,958v1M929.5,961v1M929.5,963v1M929.5,965v1M929.5,968v1M929.5,970v1M929.5,972v1M929.5,975v1M929.5,977v1M929.5,979v1M929.5,982v1M929.5,984v1M929.5,986v1M929.5,989v1M929.5,991v1M1104.5,58v1M1104.5,60v1M1104.5,62v1M1104.5,65v1M1104.5,67v1M1104.5,69v1M1104.5,72v1M1104.5,74v1M1104.5,76v1M1104.5,79v1M1104.5,81v1M1104.5,83v1M1104.5,86v1M1104.5,88v1M1104.5,90v1M1104.5,93v1M1104.5,95v1M1104.5,97v1M1104.5,100v1M1104.5,102v1M1104.5,104v1M1104.5,107v1M1104.5,109v1M1104.5,111v1M1104.5,114v1M1104.5,116v1M1104.5,118v1M1104.5,121v1M1104.5,123v1M1104.5,125v1M1104.5,128v1M1104.5,130v1M1104.5,132v1M1104.5,135v1M1104.5,137v1M1104.5,139v1M1104.5,142v1M1104.5,144v1M1104.5,146v1M1104.5,149v1M1104.5,151v1M1104.5,153v1M1104.5,156v1M1104.5,158v1M1104.5,160v1M1104.5,163v1M1104.5,165v1M1104.5,167v1M1104.5,170v1M1104.5,172v1M1104.5,174v1M1104.5,177v1M1104.5,179v1M1104.5,181v1M1104.5,184v1M1104.5,186v1M1104.5,188v1M1104.5,191v1M1104.5,193v1M1104.5,195v1M1104.5,198v1M1104.5,200v1M1104.5,202v1M1104.5,205v1M1104.5,207v1M1104.5,209v1M1104.5,212v1M1104.5,214v1M1104.5,216v1M1104.5,219v1M1104.5,221v1M1104.5,223v1M1104.5,226v1M1104.5,228v1M1104.5,230v1M1104.5,233v1M1104.5,235v1M1104.5,237v1M1104.5,240v1M1104.5,242v1M1104.5,244v1M1104.5,247v1M1104.5,249v1M1104.5,251v1M1104.5,254v1M1104.5,256v1M1104.5,258v1M1104.5,261v1M1104.5,263v1M1104.5,265v1M1104.5,268v1M1104.5,270v1M1104.5,272v1M1104.5,275v1M1104.5,277v1M1104.5,279v1M1104.5,282v1M1104.5,284v1M1104.5,286v1M1104.5,289v1M1104.5,291v1M1104.5,293v1M1104.5,296v1M1104.5,298v1M1104.5,300v1M1104.5,303v1M1104.5,305v1M1104.5,307v1M1104.5,310v1M1104.5,312v1M1104.5,314v1M1104.5,317v1M1104.5,319v1M1104.5,321v1M1104.5,324v1M1104.5,326v1M1104.5,328v1M1104.5,331v1M1104.5,333v1M1104.5,335v1M1104.5,338v1M1104.5,340v1M1104.5,342v1M1104.5,345v1M1104.5,347v1M1104.5,349v1M1104.5,352v1M1104.5,354v1M1104.5,356v1M1104.5,359v1M1104.5,361v1M1104.5,363v1M1104.5,366v1M1104.5,368v1M1104.5,370v1M1104.5,373v1M1104.5,375v1M1104.5,377v1M1104.5,380v1M1104.5,382v1M1104.5,384v1M1104.5,387v1M1104.5,389v1M1104.5,391v1M1104.5,394v1M1104.5,396v1M1104.5,398v1M1104.5,401v1M1104.5,403v1M1104.5,405v1M1104.5,408v1M1104.5,410v1M1104.5,412v1M1104.5,415v1M1104.5,417v1M1104.5,419v1M1104.5,422v1M1104.5,424v1M1104.5,426v1M1104.5,429v1M1104.5,431v1M1104.5,433v1M1104.5,436v1M1104.5,438v1M1104.5,440v1M1104.5,443v1M1104.5,445v1M1104.5,447v1M1104.5,450v1M1104.5,452v1M1104.5,454v1M1104.5,457v1M1104.5,459v1M1104.5,461v1M1104.5,464v1M1104.5,466v1M1104.5,468v1M1104.5,471v1M1104.5,473v1M1104.5,475v1M1104.5,478v1M1104.5,480v1M1104.5,482v1M1104.5,485v1M1104.5,487v1M1104.5,489v1M1104.5,492v1M1104.5,494v1M1104.5,496v1M1104.5,499v1M1104.5,501v1M1104.5,503v1M1104.5,506v1M1104.5,508v1M1104.5,510v1M1104.5,513v1M1104.5,515v1M1104.5,517v1M1104.5,520v1M1104.5,522v1M1104.5,524v1M1104.5,527v1M1104.5,529v1M1104.5,531v1M1104.5,534v1M1104.5,536v1M1104.5,538v1M1104.5,541v1M1104.5,543v1M1104.5,545v1M1104.5,548v1M1104.5,550v1M1104.5,552v1M1104.5,555v1M1104.5,557v1M1104.5,559v1M1104.5,562v1M1104.5,564v1M1104.5,566v1M1104.5,569v1M1104.5,571v1M1104.5,573v1M1104.5,576v1M1104.5,578v1M1104.5,580v1M1104.5,583v1M1104.5,585v1M1104.5,587v1M1104.5,590v1M1104.5,592v1M1104.5,594v1M1104.5,597v1M1104.5,599v1M1104.5,601v1M1104.5,604v1M1104.5,606v1M1104.5,608v1M1104.5,611v1M1104.5,613v1M1104.5,615v1M1104.5,618v1M1104.5,620v1M1104.5,622v1M1104.5,625v1M1104.5,627v1M1104.5,629v1M1104.5,632v1M1104.5,634v1M1104.5,636v1M1104.5,639v1M1104.5,641v1M1104.5,643v1M1104.5,646v1M1104.5,648v1M1104.5,650v1M1104.5,653v1M1104.5,655v1M1104.5,657v1M1104.5,660v1M1104.5,662v1M1104.5,664v1M1104.5,667v1M1104.5,669v1M1104.5,671v1M1104.5,674v1M1104.5,676v1M1104.5,678v1M1104.5,681v1M1104.5,683v1M1104.5,685v1M1104.5,688v1M1104.5,690v1M1104.5,692v1M1104.5,695v1M1104.5,697v1M1104.5,699v1M1104.5,702v1M1104.5,704v1M1104.5,706v1M1104.5,709v1M1104.5,711v1M1104.5,713v1M1104.5,716v1M1104.5,718v1M1104.5,720v1M1104.5,723v1M1104.5,725v1M1104.5,727v1M1104.5,730v1M1104.5,732v1M1104.5,734v1M1104.5,737v1M1104.5,739v1M1104.5,741v1M1104.5,760v1M1104.5,762v1M1104.5,765v1M1104.5,767v1M1104.5,769v1M1104.5,772v1M1104.5,774v1M1104.5,776v1M1104.5,779v1M1104.5,781v1M1104.5,783v1M1104.5,786v1M1104.5,788v1M1104.5,790v1M1104.5,793v1M1104.5,795v1M1104.5,797v1M1104.5,800v1M1104.5,802v1M1104.5,804v1M1104.5,807v1M1104.5,809v1M1104.5,811v1M1104.5,814v1M1104.5,816v1M1104.5,818v1M1104.5,821v1M1104.5,823v1M1104.5,825v1M1104.5,828v1M1104.5,830v1M1104.5,832v1M1104.5,835v1M1104.5,837v1M1104.5,839v1M1104.5,842v1M1104.5,844v1M1104.5,846v1M1104.5,849v1M1104.5,851v1M1104.5,853v1M1104.5,856v1M1104.5,858v1M1104.5,860v1M1104.5,863v1M1104.5,865v1M1104.5,867v1M1104.5,870v1M1104.5,872v1M1104.5,874v1M1104.5,877v1M1104.5,879v1M1104.5,881v1M1104.5,884v1M1104.5,886v1M1104.5,888v1M1104.5,891v1M1104.5,893v1M1104.5,895v1M1104.5,898v1M1104.5,900v1M1104.5,902v1M1104.5,905v1M1104.5,907v1M1104.5,909v1M1104.5,912v1M1104.5,914v1M1104.5,916v1M1104.5,919v1M1104.5,921v1M1104.5,923v1M1104.5,926v1M1104.5,928v1M1104.5,930v1M1104.5,933v1M1104.5,935v1M1104.5,937v1M1104.5,940v1M1104.5,942v1M1104.5,944v1M1104.5,947v1M1104.5,949v1M1104.5,951v1M1104.5,954v1M1104.5,956v1M1104.5,958v1M1104.5,961v1M1104.5,963v1M1104.5,965v1M1104.5,968v1M1104.5,970v1M1104.5,972v1M1104.5,975v1M1104.5,977v1M1104.5,979v1M1104.5,982v1M1104.5,984v1M1104.5,986v1M1104.5,989v1M1104.5,991v1M1279.5,58v1M1279.5,60v1M1279.5,62v1M1279.5,65v1M1279.5,67v1M1279.5,69v1M1279.5,72v1M1279.5,74v1M1279.5,76v1M1279.5,79v1M1279.5,81v1M1279.5,83v1M1279.5,86v1M1279.5,88v1M1279.5,90v1M1279.5,93v1M1279.5,95v1M1279.5,97v1M1279.5,100v1M1279.5,102v1M1279.5,104v1M1279.5,107v1M1279.5,109v1M1279.5,111v1M1279.5,114v1M1279.5,116v1M1279.5,118v1M1279.5,121v1M1279.5,123v1M1279.5,125v1M1279.5,128v1M1279.5,130v1M1279.5,132v1M1279.5,135v1M1279.5,137v1M1279.5,139v1M1279.5,142v1M1279.5,144v1M1279.5,146v1M1279.5,149v1M1279.5,151v1M1279.5,153v1M1279.5,156v1M1279.5,158v1M1279.5,160v1M1279.5,163v1M1279.5,165v1M1279.5,167v1M1279.5,170v1M1279.5,172v1M1279.5,174v1M1279.5,177v1M1279.5,179v1M1279.5,181v1M1279.5,184v1M1279.5,186v1M1279.5,188v1M1279.5,191v1M1279.5,193v1M1279.5,195v1M1279.5,198v1M1279.5,200v1M1279.5,202v1M1279.5,205v1M1279.5,207v1M1279.5,209v1M1279.5,212v1M1279.5,214v1M1279.5,216v1M1279.5,219v1M1279.5,221v1M1279.5,223v1M1279.5,226v1M1279.5,228v1M1279.5,230v1M1279.5,233v1M1279.5,235v1M1279.5,237v1M1279.5,240v1M1279.5,242v1M1279.5,244v1M1279.5,247v1M1279.5,249v1M1279.5,251v1M1279.5,254v1M1279.5,256v1M1279.5,258v1M1279.5,261v1M1279.5,263v1M1279.5,265v1M1279.5,268v1M1279.5,270v1M1279.5,272v1M1279.5,275v1M1279.5,277v1M1279.5,279v1M1279.5,282v1M1279.5,284v1M1279.5,286v1M1279.5,289v1M1279.5,291v1M1279.5,293v1M1279.5,296v1M1279.5,298v1M1279.5,300v1M1279.5,303v1M1279.5,305v1M1279.5,307v1M1279.5,310v1M1279.5,312v1M1279.5,314v1M1279.5,317v1M1279.5,319v1M1279.5,321v1M1279.5,324v1M1279.5,326v1M1279.5,328v1M1279.5,331v1M1279.5,333v1M1279.5,335v1M1279.5,338v1M1279.5,340v1M1279.5,342v1M1279.5,345v1M1279.5,347v1M1279.5,349v1M1279.5,352v1M1279.5,354v1M1279.5,356v1M1279.5,359v1M1279.5,361v1M1279.5,363v1M1279.5,366v1M1279.5,368v1M1279.5,370v1M1279.5,373v1M1279.5,375v1M1279.5,377v1M1279.5,380v1M1279.5,382v1M1279.5,384v1M1279.5,387v1M1279.5,389v1M1279.5,391v1M1279.5,394v1M1279.5,396v1M1279.5,398v1M1279.5,401v1M1279.5,403v1M1279.5,405v1M1279.5,408v1M1279.5,410v1M1279.5,412v1M1279.5,415v1M1279.5,417v1M1279.5,419v1M1279.5,422v1M1279.5,424v1M1279.5,426v1M1279.5,429v1M1279.5,431v1M1279.5,433v1M1279.5,436v1M1279.5,438v1M1279.5,440v1M1279.5,443v1M1279.5,445v1M1279.5,447v1M1279.5,450v1M1279.5,452v1M1279.5,454v1M1279.5,457v1M1279.5,459v1M1279.5,461v1M1279.5,464v1M1279.5,466v1M1279.5,468v1M1279.5,471v1M1279.5,473v1M1279.5,475v1M1279.5,478v1M1279.5,480v1M1279.5,482v1M1279.5,485v1M1279.5,487v1M1279.5,489v1M1279.5,492v1M1279.5,494v1M1279.5,496v1M1279.5,499v1M1279.5,501v1M1279.5,503v1M1279.5,506v1M1279.5,508v1M1279.5,510v1M1279.5,513v1M1279.5,515v1M1279.5,517v1M1279.5,520v1M1279.5,522v1M1279.5,524v1M1279.5,527v1M1279.5,529v1M1279.5,531v1M1279.5,534v1M1279.5,536v1M1279.5,538v1M1279.5,541v1M1279.5,543v1M1279.5,545v1M1279.5,548v1M1279.5,550v1M1279.5,552v1M1279.5,555v1M1279.5,557v1M1279.5,559v1M1279.5,562v1M1279.5,564v1M1279.5,566v1M1279.5,569v1M1279.5,571v1M1279.5,573v1M1279.5,576v1M1279.5,578v1M1279.5,580v1M1279.5,583v1M1279.5,585v1M1279.5,587v1M1279.5,590v1M1279.5,592v1M1279.5,594v1M1279.5,597v1M1279.5,599v1M1279.5,601v1M1279.5,604v1M1279.5,606v1M1279.5,608v1M1279.5,611v1M1279.5,613v1M1279.5,615v1M1279.5,618v1M1279.5,620v1M1279.5,622v1M1279.5,625v1M1279.5,627v1M1279.5,629v1M1279.5,632v1M1279.5,634v1M1279.5,636v1M1279.5,639v1M1279.5,641v1M1279.5,643v1M1279.5,646v1M1279.5,648v1M1279.5,650v1M1279.5,653v1M1279.5,655v1M1279.5,657v1M1279.5,660v1M1279.5,662v1M1279.5,664v1M1279.5,667v1M1279.5,669v1M1279.5,671v1M1279.5,674v1M1279.5,676v1M1279.5,678v1M1279.5,681v1M1279.5,683v1M1279.5,685v1M1279.5,688v1M1279.5,690v1M1279.5,692v1M1279.5,695v1M1279.5,697v1M1279.5,699v1M1279.5,702v1M1279.5,704v1M1279.5,706v1M1279.5,709v1M1279.5,711v1M1279.5,713v1M1279.5,716v1M1279.5,718v1M1279.5,720v1M1279.5,723v1M1279.5,725v1M1279.5,727v1M1279.5,730v1M1279.5,732v1M1279.5,734v1M1279.5,737v1M1279.5,739v1M1279.5,741v1M1279.5,760v1M1279.5,762v1M1279.5,765v1M1279.5,767v1M1279.5,769v1M1279.5,772v1M1279.5,774v1M1279.5,776v1M1279.5,779v1M1279.5,781v1M1279.5,783v1M1279.5,786v1M1279.5,788v1M1279.5,790v1M1279.5,793v1M1279.5,795v1M1279.5,797v1M1279.5,800v1M1279.5,802v1M1279.5,804v1M1279.5,807v1M1279.5,809v1M1279.5,811v1M1279.5,814v1M1279.5,816v1M1279.5,818v1M1279.5,821v1M1279.5,823v1M1279.5,825v1M1279.5,828v1M1279.5,830v1M1279.5,832v1M1279.5,835v1M1279.5,837v1M1279.5,839v1M1279.5,842v1M1279.5,844v1M1279.5,846v1M1279.5,849v1M1279.5,851v1M1279.5,853v1M1279.5,856v1M1279.5,858v1M1279.5,860v1M1279.5,863v1M1279.5,865v1M1279.5,867v1M1279.5,870v1M1279.5,872v1M1279.5,874v1M1279.5,877v1M1279.5,879v1M1279.5,881v1M1279.5,884v1M1279.5,886v1M1279.5,888v1M1279.5,891v1M1279.5,893v1M1279.5,895v1M1279.5,898v1M1279.5,900v1M1279.5,902v1M1279.5,905v1M1279.5,907v1M1279.5,909v1M1279.5,912v1M1279.5,914v1M1279.5,916v1M1279.5,919v1M1279.5,921v1M1279.5,923v1M1279.5,926v1M1279.5,928v1M1279.5,930v1M1279.5,933v1M1279.5,935v1M1279.5,937v1M1279.5,940v1M1279.5,942v1M1279.5,944v1M1279.5,947v1M1279.5,949v1M1279.5,951v1M1279.5,954v1M1279.5,956v1M1279.5,958v1M1279.5,961v1M1279.5,963v1M1279.5,965v1M1279.5,968v1M1279.5,970v1M1279.5,972v1M1279.5,975v1M1279.5,977v1M1279.5,979v1M1279.5,982v1M1279.5,984v1M1279.5,986v1M1279.5,989v1M1279.5,991v1M1454.5,58v1M1454.5,60v1M1454.5,62v1M1454.5,65v1M1454.5,67v1M1454.5,69v1M1454.5,72v1M1454.5,74v1M1454.5,76v1M1454.5,79v1M1454.5,81v1M1454.5,83v1M1454.5,86v1M1454.5,88v1M1454.5,90v1M1454.5,93v1M1454.5,95v1M1454.5,97v1M1454.5,100v1M1454.5,102v1M1454.5,104v1M1454.5,107v1M1454.5,109v1M1454.5,111v1M1454.5,114v1M1454.5,116v1M1454.5,118v1M1454.5,121v1M1454.5,123v1M1454.5,125v1M1454.5,128v1M1454.5,130v1M1454.5,132v1M1454.5,135v1M1454.5,137v1M1454.5,139v1M1454.5,142v1M1454.5,144v1M1454.5,146v1M1454.5,149v1M1454.5,151v1M1454.5,153v1M1454.5,156v1M1454.5,158v1M1454.5,160v1M1454.5,163v1M1454.5,165v1M1454.5,167v1M1454.5,170v1M1454.5,172v1M1454.5,174v1M1454.5,177v1M1454.5,179v1M1454.5,181v1M1454.5,184v1M1454.5,186v1M1454.5,188v1M1454.5,191v1M1454.5,193v1M1454.5,195v1M1454.5,198v1M1454.5,200v1M1454.5,202v1M1454.5,205v1M1454.5,207v1M1454.5,209v1M1454.5,212v1M1454.5,214v1M1454.5,216v1M1454.5,219v1M1454.5,221v1M1454.5,223v1M1454.5,226v1M1454.5,228v1M1454.5,230v1M1454.5,233v1M1454.5,235v1M1454.5,237v1M1454.5,240v1M1454.5,242v1M1454.5,244v1M1454.5,247v1M1454.5,249v1M1454.5,251v1M1454.5,254v1M1454.5,256v1M1454.5,258v1M1454.5,261v1M1454.5,263v1M1454.5,265v1M1454.5,268v1M1454.5,270v1M1454.5,272v1M1454.5,275v1M1454.5,277v1M1454.5,279v1M1454.5,282v1M1454.5,284v1M1454.5,286v1M1454.5,289v1M1454.5,291v1M1454.5,293v1M1454.5,296v1M1454.5,298v1M1454.5,300v1M1454.5,303v1M1454.5,305v1M1454.5,307v1M1454.5,310v1M1454.5,312v1M1454.5,314v1M1454.5,317v1M1454.5,319v1M1454.5,321v1M1454.5,324v1M1454.5,326v1M1454.5,328v1M1454.5,331v1M1454.5,333v1M1454.5,335v1M1454.5,338v1M1454.5,340v1M1454.5,342v1M1454.5,345v1M1454.5,347v1M1454.5,349v1M1454.5,352v1M1454.5,354v1M1454.5,356v1M1454.5,359v1M1454.5,361v1M1454.5,363v1M1454.5,366v1M1454.5,368v1M1454.5,370v1M1454.5,373v1M1454.5,375v1M1454.5,377v1M1454.5,380v1M1454.5,382v1M1454.5,384v1M1454.5,387v1M1454.5,389v1M1454.5,391v1M1454.5,394v1M1454.5,396v1M1454.5,398v1M1454.5,401v1M1454.5,403v1M1454.5,405v1M1454.5,408v1M1454.5,410v1M1454.5,412v1M1454.5,415v1M1454.5,417v1M1454.5,419v1M1454.5,422v1M1454.5,424v1M1454.5,426v1M1454.5,429v1M1454.5,431v1M1454.5,433v1M1454.5,436v1M1454.5,438v1M1454.5,440v1M1454.5,443v1M1454.5,445v1M1454.5,447v1M1454.5,450v1M1454.5,452v1M1454.5,454v1M1454.5,457v1M1454.5,459v1M1454.5,461v1M1454.5,464v1M1454.5,466v1M1454.5,468v1M1454.5,471v1M1454.5,473v1M1454.5,475v1M1454.5,478v1M1454.5,480v1M1454.5,482v1M1454.5,485v1M1454.5,487v1M1454.5,489v1M1454.5,492v1M1454.5,494v1M1454.5,496v1M1454.5,499v1M1454.5,501v1M1454.5,503v1M1454.5,506v1M1454.5,508v1M1454.5,510v1M1454.5,513v1M1454.5,515v1M1454.5,517v1M1454.5,520v1M1454.5,522v1M1454.5,524v1M1454.5,527v1M1454.5,529v1M1454.5,531v1M1454.5,534v1M1454.5,536v1M1454.5,538v1M1454.5,541v1M1454.5,543v1M1454.5,545v1M1454.5,548v1M1454.5,550v1M1454.5,552v1M1454.5,555v1M1454.5,557v1M1454.5,559v1M1454.5,562v1M1454.5,564v1M1454.5,566v1M1454.5,569v1M1454.5,571v1M1454.5,573v1M1454.5,576v1M1454.5,578v1M1454.5,580v1M1454.5,583v1M1454.5,585v1M1454.5,587v1M1454.5,590v1M1454.5,592v1M1454.5,594v1M1454.5,597v1M1454.5,599v1M1454.5,601v1M1454.5,604v1M1454.5,606v1M1454.5,608v1M1454.5,611v1M1454.5,613v1M1454.5,615v1M1454.5,618v1M1454.5,620v1M1454.5,622v1M1454.5,625v1M1454.5,627v1M1454.5,629v1M1454.5,632v1M1454.5,634v1M1454.5,636v1M1454.5,639v1M1454.5,641v1M1454.5,643v1M1454.5,646v1M1454.5,648v1M1454.5,650v1M1454.5,653v1M1454.5,655v1M1454.5,657v1M1454.5,660v1M1454.5,662v1M1454.5,664v1M1454.5,667v1M1454.5,669v1M1454.5,671v1M1454.5,674v1M1454.5,676v1M1454.5,678v1M1454.5,681v1M1454.5,683v1M1454.5,685v1M1454.5,688v1M1454.5,690v1M1454.5,692v1M1454.5,695v1M1454.5,697v1M1454.5,699v1M1454.5,702v1M1454.5,704v1M1454.5,706v1M1454.5,709v1M1454.5,711v1M1454.5,713v1M1454.5,716v1M1454.5,718v1M1454.5,720v1M1454.5,723v1M1454.5,725v1M1454.5,727v1M1454.5,730v1M1454.5,732v1M1454.5,734v1M1454.5,737v1M1454.5,739v1M1454.5,741v1M1454.5,760v1M1454.5,762v1M1454.5,765v1M1454.5,767v1M1454.5,769v1M1454.5,772v1M1454.5,774v1M1454.5,776v1M1454.5,779v1M1454.5,781v1M1454.5,783v1M1454.5,786v1M1454.5,788v1M1454.5,790v1M1454.5,793v1M1454.5,795v1M1454.5,797v1M1454.5,800v1M1454.5,802v1M1454.5,804v1M1454.5,807v1M1454.5,809v1M1454.5,811v1M1454.5,814v1M1454.5,816v1M1454.5,818v1M1454.5,821v1M1454.5,823v1M1454.5,825v1M1454.5,828v1M1454.5,830v1M1454.5,832v1M1454.5,835v1M1454.5,837v1M1454.5,839v1M1454.5,842v1M1454.5,844v1M1454.5,846v1M1454.5,849v1M1454.5,851v1M1454.5,853v1M1454.5,856v1M1454.5,858v1M1454.5,860v1M1454.5,863v1M1454.5,865v1M1454.5,867v1M1454.5,870v1M1454.5,872v1M1454.5,874v1M1454.5,877v1M1454.5,879v1M1454.5,881v1M1454.5,884v1M1454.5,886v1M1454.5,888v1M1454.5,891v1M1454.5,893v1M1454.5,895v1M1454.5,898v1M1454.5,900v1M1454.5,902v1M1454.5,905v1M1454.5,907v1M1454.5,909v1M1454.5,912v1M1454.5,914v1M1454.5,916v1M1454.5,919v1M1454.5,921v1M1454.5,923v1M1454.5,926v1M1454.5,928v1M1454.5,930v1M1454.5,933v1M1454.5,935v1M1454.5,937v1M1454.5,940v1M1454.5,942v1M1454.5,944v1M1454.5,947v1M1454.5,949v1M1454.5,951v1M1454.5,954v1M1454.5,956v1M1454.5,958v1M1454.5,961v1M1454.5,963v1M1454.5,965v1M1454.5,968v1M1454.5,970v1M1454.5,972v1M1454.5,975v1M1454.5,977v1M1454.5,979v1M1454.5,982v1M1454.5,984v1M1454.5,986v1M1454.5,989v1M1454.5,991v1M1629.5,58v1M1629.5,60v1M1629.5,62v1M1629.5,65v1M1629.5,67v1M1629.5,69v1M1629.5,72v1M1629.5,74v1M1629.5,76v1M1629.5,79v1M1629.5,81v1M1629.5,83v1M1629.5,86v1M1629.5,88v1M1629.5,90v1M1629.5,93v1M1629.5,95v1M1629.5,97v1M1629.5,100v1M1629.5,102v1M1629.5,104v1M1629.5,107v1M1629.5,109v1M1629.5,111v1M1629.5,114v1M1629.5,116v1M1629.5,118v1M1629.5,121v1M1629.5,123v1M1629.5,125v1M1629.5,128v1M1629.5,130v1M1629.5,132v1M1629.5,135v1M1629.5,137v1M1629.5,139v1M1629.5,142v1M1629.5,144v1M1629.5,146v1M1629.5,149v1M1629.5,151v1M1629.5,153v1M1629.5,156v1M1629.5,158v1M1629.5,160v1M1629.5,163v1M1629.5,165v1M1629.5,167v1M1629.5,170v1M1629.5,172v1M1629.5,174v1M1629.5,177v1M1629.5,179v1M1629.5,181v1M1629.5,184v1M1629.5,186v1M1629.5,188v1M1629.5,191v1M1629.5,193v1M1629.5,195v1M1629.5,198v1M1629.5,200v1M1629.5,202v1M1629.5,205v1M1629.5,207v1M1629.5,209v1M1629.5,212v1M1629.5,214v1M1629.5,216v1M1629.5,219v1M1629.5,221v1M1629.5,223v1M1629.5,226v1M1629.5,228v1M1629.5,230v1M1629.5,233v1M1629.5,235v1M1629.5,237v1M1629.5,240v1M1629.5,242v1M1629.5,244v1M1629.5,247v1M1629.5,249v1M1629.5,251v1M1629.5,254v1M1629.5,256v1M1629.5,258v1M1629.5,261v1M1629.5,263v1M1629.5,265v1M1629.5,268v1M1629.5,270v1M1629.5,272v1M1629.5,275v1M1629.5,277v1M1629.5,279v1M1629.5,282v1M1629.5,284v1M1629.5,286v1M1629.5,289v1M1629.5,291v1M1629.5,293v1M1629.5,296v1M1629.5,298v1M1629.5,300v1M1629.5,303v1M1629.5,305v1M1629.5,307v1M1629.5,310v1M1629.5,312v1M1629.5,314v1M1629.5,317v1M1629.5,319v1M1629.5,321v1M1629.5,324v1M1629.5,326v1M1629.5,328v1M1629.5,331v1M1629.5,333v1M1629.5,335v1M1629.5,338v1M1629.5,340v1M1629.5,342v1M1629.5,345v1M1629.5,347v1M1629.5,349v1M1629.5,352v1M1629.5,354v1M1629.5,356v1M1629.5,359v1M1629.5,361v1M1629.5,363v1M1629.5,366v1M1629.5,368v1M1629.5,370v1M1629.5,373v1M1629.5,375v1M1629.5,377v1M1629.5,380v1M1629.5,382v1M1629.5,384v1M1629.5,387v1M1629.5,389v1M1629.5,391v1M1629.5,394v1M1629.5,396v1M1629.5,398v1M1629.5,401v1M1629.5,403v1M1629.5,405v1M1629.5,408v1M1629.5,410v1M1629.5,412v1M1629.5,415v1M1629.5,417v1M1629.5,419v1M1629.5,422v1M1629.5,424v1M1629.5,426v1M1629.5,429v1M1629.5,431v1M1629.5,433v1M1629.5,436v1M1629.5,438v1M1629.5,440v1M1629.5,443v1M1629.5,445v1M1629.5,447v1M1629.5,450v1M1629.5,452v1M1629.5,454v1M1629.5,457v1M1629.5,459v1M1629.5,461v1M1629.5,464v1M1629.5,466v1M1629.5,468v1M1629.5,471v1M1629.5,473v1M1629.5,475v1M1629.5,478v1M1629.5,480v1M1629.5,482v1M1629.5,485v1M1629.5,487v1M1629.5,489v1M1629.5,492v1M1629.5,494v1M1629.5,496v1M1629.5,499v1M1629.5,501v1M1629.5,503v1M1629.5,506v1M1629.5,508v1M1629.5,510v1M1629.5,513v1M1629.5,515v1M1629.5,517v1M1629.5,520v1M1629.5,522v1M1629.5,524v1M1629.5,527v1M1629.5,529v1M1629.5,531v1M1629.5,534v1M1629.5,536v1M1629.5,538v1M1629.5,541v1M1629.5,543v1M1629.5,545v1M1629.5,548v1M1629.5,550v1M1629.5,552v1M1629.5,555v1M1629.5,557v1M1629.5,559v1M1629.5,562v1M1629.5,564v1M1629.5,566v1M1629.5,569v1M1629.5,571v1M1629.5,573v1M1629.5,576v1M1629.5,578v1M1629.5,580v1M1629.5,583v1M1629.5,585v1M1629.5,587v1M1629.5,590v1M1629.5,592v1M1629.5,594v1M1629.5,597v1M1629.5,599v1M1629.5,601v1M1629.5,604v1M1629.5,606v1M1629.5,608v1M1629.5,611v1M1629.5,613v1M1629.5,615v1M1629.5,618v1M1629.5,620v1M1629.5,622v1M1629.5,625v1M1629.5,627v1M1629.5,629v1M1629.5,632v1M1629.5,634v1M1629.5,636v1M1629.5,639v1M1629.5,641v1M1629.5,643v1M1629.5,646v1M1629.5,648v1M1629.5,650v1M1629.5,653v1M1629.5,655v1M1629.5,657v1M1629.5,660v1M1629.5,662v1M1629.5,664v1M1629.5,667v1M1629.5,669v1M1629.5,671v1M1629.5,674v1M1629.5,676v1M1629.5,678v1M1629.5,681v1M1629.5,683v1M1629.5,685v1M1629.5,688v1M1629.5,690v1M1629.5,692v1M1629.5,695v1M1629.5,697v1M1629.5,699v1M1629.5,702v1M1629.5,704v1M1629.5,706v1M1629.5,709v1M1629.5,711v1M1629.5,713v1M1629.5,716v1M1629.5,718v1M1629.5,720v1M1629.5,723v1M1629.5,725v1M1629.5,727v1M1629.5,730v1M1629.5,732v1M1629.5,734v1M1629.5,737v1M1629.5,739v1M1629.5,741v1M1629.5,760v1M1629.5,762v1M1629.5,765v1M1629.5,767v1M1629.5,769v1M1629.5,772v1M1629.5,774v1M1629.5,776v1M1629.5,779v1M1629.5,781v1M1629.5,783v1M1629.5,786v1M1629.5,788v1M1629.5,790v1M1629.5,793v1M1629.5,795v1M1629.5,797v1M1629.5,800v1M1629.5,802v1M1629.5,804v1M1629.5,807v1M1629.5,809v1M1629.5,811v1M1629.5,814v1M1629.5,816v1M1629.5,818v1M1629.5,821v1M1629.5,823v1M1629.5,825v1M1629.5,828v1M1629.5,830v1M1629.5,832v1M1629.5,835v1M1629.5,837v1M1629.5,839v1M1629.5,842v1M1629.5,844v1M1629.5,846v1M1629.5,849v1M1629.5,851v1M1629.5,853v1M1629.5,856v1M1629.5,858v1M1629.5,860v1M1629.5,863v1M1629.5,865v1M1629.5,867v1M1629.5,870v1M1629.5,872v1M1629.5,874v1M1629.5,877v1M1629.5,879v1M1629.5,881v1M1629.5,884v1M1629.5,886v1M1629.5,888v1M1629.5,891v1M1629.5,893v1M1629.5,895v1M1629.5,898v1M1629.5,900v1M1629.5,902v1M1629.5,905v1M1629.5,907v1M1629.5,909v1M1629.5,912v1M1629.5,914v1M1629.5,916v1M1629.5,919v1M1629.5,921v1M1629.5,923v1M1629.5,926v1M1629.5,928v1M1629.5,930v1M1629.5,933v1M1629.5,935v1M1629.5,937v1M1629.5,940v1M1629.5,942v1M1629.5,944v1M1629.5,947v1M1629.5,949v1M1629.5,951v1M1629.5,954v1M1629.5,956v1M1629.5,958v1M1629.5,961v1M1629.5,963v1M1629.5,965v1M1629.5,968v1M1629.5,970v1M1629.5,972v1M1629.5,975v1M1629.5,977v1M1629.5,979v1M1629.5,982v1M1629.5,984v1M1629.5,986v1M1629.5,989v1M1629.5,991v1" stroke="#3a3a3a" stroke-width="1.1"/>
<rect x="3" y="173" width="1748" height="2" fill="#555555"/>
<rect x="3" y="290" width="1748" height="2" fill="#555555"/>
<rect x="3" y="407" width="1748" height="2" fill="#555555"/>
<rect x="3" y="524" width="1748" height="2" fill="#555555"/>
<rect x="3" y="641" width="1748" height="2" fill="#555555"/>
<rect x="3" y="758" width="1748" height="2" fill="#555555"/>
<rect x="3" y="875" width="1748" height="2" fill="#555555"/>
<path d="M55.5,58V993" stroke="#333" stroke-width="1.1" stroke-dasharray="5 5.5"/>
<path d="M3,161.5H1718" stroke="#3a3a3a" stroke-width="1.2" stroke-dasharray="5 5" stroke-dashoffset="0"/>
<path d="M3,246.5H1738" stroke="#3a3a3a" stroke-width="1.2" stroke-dasharray="5 5" stroke-dashoffset="0"/>
<path d="M3,863.5H1718" stroke="#3a3a3a" stroke-width="1.2" stroke-dasharray="5 5" stroke-dashoffset="0"/>
<path d="M3,980.5H1718" stroke="#3a3a3a" stroke-width="1.2" stroke-dasharray="5 5" stroke-dashoffset="0"/>
<path d="M3,161.5H4V160.5H18V161.5H19V160.5H23V159.5H25V160.5H33V159.5H34V160.5H50V159.5H51V160.5H52V161.5H53V160.5H66V161.5H67V160.5H83V156.5H84V155.5H87V154.5H89V153.5H92V152.5H95V151.5H99V150.5H102V149.5H105V148.5H108V147.5H113V146.5H119V145.5H124V144.5H129V143.5H136V142.5H138V143.5H139V142.5H140V141.5H146V140.5H149V139.5H150V140.5H152V139.5H153V138.5H154V139.5H159V138.5H166V137.5H174V136.5H184V135.5H190V134.5H191V135.5H198V136.5H199V135.5H213V136.5H215V137.5H217V138.5H218V139.5H221V140.5H224V141.5H235V140.5H236V141.5H248V142.5H261V141.5H262V142.5H280V145.5H305V144.5H306V145.5H307V146.5H308V145.5H311V146.5H335V147.5H339V148.5H340V146.5H341V147.5H365V146.5H366V147.5H367V148.5H368V147.5H411V146.5H412V147.5H423V148.5H424V147.5H440V146.5H441V147.5H449V146.5H450V147.5H455V149.5H475V150.5H476V149.5H478V150.5H479V149.5H491V148.5H492V149.5H494V147.5H495V146.5H496V147.5H497V148.5H498V147.5H510V146.5H511V147.5H518V148.5H527V147.5H528V148.5H532V149.5H533V148.5H534V149.5H535V148.5H552V147.5H553V148.5H582V147.5H583V149.5H584V148.5H610V149.5H645V150.5H667V149.5H668V150.5H722V151.5H723V150.5H729V151.5H730V150.5H731V149.5H732V150.5H750V151.5H758V152.5H759V154.5H760V156.5H761V155.5H762V154.5H763V155.5H779V154.5H781V155.5H792V154.5H795V153.5H816V154.5H817V153.5H820V152.5H822V151.5H849V152.5H850V151.5H866V152.5H867V151.5H896V150.5H897V151.5H919V152.5H920V151.5H926V150.5H927V151.5H939V152.5H940V151.5H946V150.5H947V151.5H969V150.5H970V151.5H1008V150.5H1009V151.5H1015V150.5H1016V151.5H1026V152.5H1027V151.5H1037V150.5H1038V151.5H1072V152.5H1073V151.5H1081V150.5H1082V151.5H1083V152.5H1084V151.5H1086V152.5H1087V151.5H1093V152.5H1094V151.5H1113V150.5H1114V151.5H1118V152.5H1119V151.5H1123V150.5H1124V151.5H1131V152.5H1132V151.5H1156V150.5H1161V151.5H1164V150.5H1165V151.5H1188V152.5H1189V151.5H1206V152.5H1207V151.5H1208V152.5H1214V153.5H1215V152.5H1256V153.5H1257V152.5H1300V153.5H1301V152.5H1322V151.5H1323V152.5H1327V151.5H1328V152.5H1334V153.5H1335V152.5H1344V151.5H1345V152.5H1374V153.5H1375V152.5H1413V151.5H1414V150.5H1452V151.5H1453V150.5H1454V152.5H1455V151.5H1456V152.5H1457V151.5H1463V152.5H1464V151.5H1472V150.5H1473V151.5H1476V152.5H1477V151.5H1483V150.5H1484V149.5H1486V150.5H1490V151.5H1491" fill="none" stroke="#000000" stroke-width="1.2"/>
<polyline points="1490.5,151.0 1491.0,161.5 1491.5,75.0 1494.0,78.0 1497.0,80.0 1500.0,77.0 1505.0,75.0 1510.0,82.0 1515.0,90.0 1520.0,104.0 1525.0,117.0 1530.0,131.0 1535.0,142.0 1540.0,148.0 1545.0,151.0 1560.0,154.0 1600.0,156.5 1630.0,157.5 1640.0,158.5 1751.0,158.5" fill="none" stroke="#000000" stroke-width="1.4" stroke-linejoin="round"/>
<text x="1719.6" y="97.1" font-size="12.9" fill="#000" textLength="27.2" lengthAdjust="spacingAndGlyphs" stroke="#000" stroke-width="0.45">30 V</text><text x="1719.6" y="120.1" font-size="12.9" fill="#000" textLength="27.2" lengthAdjust="spacingAndGlyphs" stroke="#000" stroke-width="0.45">20 V</text><text x="1719.6" y="143.1" font-size="12.9" fill="#000" textLength="27.2" lengthAdjust="spacingAndGlyphs" stroke="#000" stroke-width="0.45">10 V</text><text x="1728.3" y="166.1" font-size="12.9" fill="#000" textLength="18.5" lengthAdjust="spacingAndGlyphs" stroke="#000" stroke-width="0.45">0 V</text>
<path d="M1710,64.5 H1743 Q1746,64.5 1746,67.5 V99 Z" fill="#4d4d4d" stroke="#111" stroke-width="1.2"/>
<circle cx="1737" cy="71.3" r="4.1" fill="none" stroke="#a8a8a8" stroke-width="1.6"/><path d="M1734,74.3 L1728.3,80.2" stroke="#a8a8a8" stroke-width="2.3" stroke-linecap="round"/>
<path d="M8.8,102.4 H77.9 L83.6,115.4 L77.9,128.4 H8.8 Q6.3,128.4 6.3,125.9 V104.9 Q6.3,102.4 8.8,102.4 Z" fill="#e8e8e8" stroke="#1a1a1a" stroke-width="2"/><path d="M32.7,102.4V128.4" stroke="#1a1a1a" stroke-width="2"/><text x="10.9" y="118.8" font-size="11.0" fill="#222" textLength="16.0" lengthAdjust="spacingAndGlyphs">C 1</text><text x="45.3" y="118.8" font-size="11.0" fill="#222" textLength="24.6" lengthAdjust="spacingAndGlyphs">20 V</text>
<text x="102.0" y="121.4" font-size="19.3" fill="#111" textLength="96.8" lengthAdjust="spacingAndGlyphs" stroke="#111" stroke-width="0.35">U_loop,coil</text>
<polyline points="55.0,247.0 55.0,195.0 56.0,255.0 57.0,224.0 60.0,222.0 65.0,224.0 83.0,224.0 84.0,216.0 85.0,232.0 86.0,218.0 87.0,230.0 88.0,216.0 89.0,231.0 90.0,219.0 91.0,228.0 92.0,223.5" fill="none" stroke="#1cc2ce" stroke-width="1.3" stroke-linejoin="round"/>
<path d="M92,223.5H102V224.5H103V223.5H119V222.5H120V223.5H145V224.5H150V223.5H151V224.5H154V223.5H155V224.5H207V223.5H208V224.5H250V225.5H300V226.5H301V225.5H316V226.5H350V227.5H351V226.5H382V227.5H384V226.5H385V227.5H398V226.5H399V227.5H448V228.5H460V229.5H461V228.5H463V229.5H464V228.5H483V229.5H484V228.5H505V229.5H527V228.5H528V229.5H554V230.5H569V229.5H570V230.5H585V231.5H586V230.5H592V231.5H593V230.5H603V231.5H619V232.5H620V231.5H652V232.5H668V231.5H669V232.5H673V231.5H674V232.5H700V234.5H701V233.5H707V232.5H708V233.5H721V232.5H722V233.5H736V234.5H737V233.5H752V235.5H753V234.5H758V235.5H759V234.5H804V235.5H856V236.5H883V237.5H884V236.5H908V237.5H960V238.5H983V237.5H984V238.5H1007V239.5H1016V238.5H1017V239.5H1038V238.5H1039V239.5H1054V240.5H1062V239.5H1063V240.5H1100V241.5H1121V240.5H1122V241.5H1143V240.5H1144V241.5H1150V242.5H1200V243.5H1210V242.5H1211V243.5H1267V244.5H1315V245.5H1316V244.5H1328V245.5H1329V244.5H1332V243.5H1333V244.5H1344V245.5H1368V244.5H1369V245.5H1380V244.5H1381V245.5H1396V244.5H1397V245.5H1414V246.5H1441V245.5H1442V246.5H1453V247.5H1454V246.5H1472V247.5H1490V246.5H1491V247.5H1536V248.5H1563V247.5H1564V248.5H1600V249.5H1615V250.5H1616V249.5H1676V250.5H1717V251.5H1718V250.5H1727V249.5H1728V250.5H1745V249.5H1746V250.5H1751V251.5H1752" fill="none" stroke="#1cc2ce" stroke-width="1.3"/>
<polyline points="1390.0,245.0 1390.0,231.0 1391.0,251.0 1392.0,245.0" fill="none" stroke="#1cc2ce" stroke-width="1.3" stroke-linejoin="round"/>
<polyline points="1433.0,246.0 1433.0,240.0 1434.0,250.0 1435.0,246.5" fill="none" stroke="#1cc2ce" stroke-width="1.3" stroke-linejoin="round"/>
<polyline points="1491.0,247.0 1491.0,228.0 1492.0,262.0 1493.0,232.0 1494.0,255.0 1495.0,230.0 1496.0,250.0 1497.0,235.0 1498.0,252.0 1499.0,238.0 1500.0,248.0 1502.0,247.0" fill="none" stroke="#1cc2ce" stroke-width="1.3" stroke-linejoin="round"/>
<polyline points="1521.0,248.0 1521.5,238.0 1522.0,250.0 1523.0,248.0" fill="none" stroke="#1cc2ce" stroke-width="1.2" stroke-linejoin="round"/>
<polyline points="1528.0,248.0 1528.5,238.0 1529.0,250.0 1530.0,248.0" fill="none" stroke="#1cc2ce" stroke-width="1.2" stroke-linejoin="round"/>
<polyline points="1539.0,248.0 1539.5,238.0 1540.0,250.0 1541.0,248.0" fill="none" stroke="#1cc2ce" stroke-width="1.2" stroke-linejoin="round"/>
<text x="1707.0" y="195.0" font-size="12.9" fill="#111" textLength="38.9" lengthAdjust="spacingAndGlyphs" opacity="0.85">1.25 V</text><text x="1707.9" y="194.1" font-size="12.9" fill="#1aa9b6" textLength="38.9" lengthAdjust="spacingAndGlyphs">1.25 V</text><text x="1699.2" y="218.0" font-size="12.9" fill="#111" textLength="46.7" lengthAdjust="spacingAndGlyphs" opacity="0.85">750 mV</text><text x="1700.1" y="217.1" font-size="12.9" fill="#1aa9b6" textLength="46.7" lengthAdjust="spacingAndGlyphs">750 mV</text><text x="1699.2" y="241.0" font-size="12.9" fill="#111" textLength="46.7" lengthAdjust="spacingAndGlyphs" opacity="0.85">250 mV</text><text x="1700.1" y="240.1" font-size="12.9" fill="#1aa9b6" textLength="46.7" lengthAdjust="spacingAndGlyphs">250 mV</text><text x="1695.3" y="264.0" font-size="12.9" fill="#111" textLength="50.6" lengthAdjust="spacingAndGlyphs" opacity="0.85">-250 mV</text><text x="1696.2" y="263.1" font-size="12.9" fill="#1aa9b6" textLength="50.6" lengthAdjust="spacingAndGlyphs">-250 mV</text><text x="1695.3" y="287.0" font-size="12.9" fill="#111" textLength="50.6" lengthAdjust="spacingAndGlyphs" opacity="0.85">-750 mV</text><text x="1696.2" y="286.1" font-size="12.9" fill="#1aa9b6" textLength="50.6" lengthAdjust="spacingAndGlyphs">-750 mV</text>
<path d="M8.8,219.3 H77.9 L83.6,232.3 L77.9,245.3 H8.8 Q6.3,245.3 6.3,242.8 V221.8 Q6.3,219.3 8.8,219.3 Z" fill="#e6f8fa" stroke="#1ebcc8" stroke-width="2"/><path d="M32.7,219.3V245.3" stroke="#1ebcc8" stroke-width="2"/><text x="10.9" y="235.7" font-size="11.0" fill="#111" textLength="16.0" lengthAdjust="spacingAndGlyphs">C 2</text><text x="35.5" y="235.7" font-size="11.0" fill="#111" textLength="37.0" lengthAdjust="spacingAndGlyphs">300 mV</text>
<text x="101.2" y="238.8" font-size="19.3" fill="#202020" textLength="75.6" lengthAdjust="spacingAndGlyphs" opacity="0.75">U_Bt,coil</text><text x="102.0" y="238.0" font-size="19.3" fill="#1aa9b6" textLength="75.6" lengthAdjust="spacingAndGlyphs" stroke="#1aa9b6" stroke-width="0.35">U_Bt,coil</text>
<path d="M54.8,297 L56.5,298 L58.8,302 L59.5,330 L60.5,352 L59.5,372 L58.5,401 L55.5,401 L54.8,370 L54.5,340 Z" fill="#e0214a"/>
<path d="M81,350.5 L82.5,368 L84,358 L88,352 Z" fill="#e0214a"/>
<polyline points="42.0,349.5 54.0,349.5" fill="none" stroke="#e0214a" stroke-width="1.3" stroke-linejoin="round"/>
<path d="M60,350.5H63V349.5H64V350.5H68V349.5H69V350.5H75V351.5H76V350.5H84V349.5H85V350.5H90V351.5H91V350.5H98V351.5H99V350.5H114V351.5H115V350.5H142V349.5H143V350.5H148V351.5H149V350.5H152V351.5H153V350.5H183V349.5H184V350.5H195V351.5H196V350.5H211V349.5H212V350.5H216V351.5H219V350.5H220V351.5H222V350.5H223V351.5H238V352.5H239V351.5H252V352.5H253V351.5H257V350.5H258V351.5H274V352.5H275V351.5H285V352.5H287V351.5H327V350.5H332V351.5H333V350.5H397V351.5H398V350.5H425V349.5H426V350.5H428V351.5H445V352.5H446V351.5H458V350.5H459V351.5H460V352.5H474V353.5H475V352.5H481V351.5H496V350.5H497V351.5H505V350.5H506V351.5H519V350.5H520V351.5H530V350.5H531V351.5H537V350.5H538V351.5H553V352.5H554V350.5H555V351.5H564V352.5H565V351.5H585V352.5H586V351.5H594V350.5H595V351.5H603V352.5H604V350.5H605V351.5H617V350.5H618V351.5H631V352.5H632V351.5H634V352.5H635V351.5H658V352.5H659V351.5H666V350.5H667V351.5H669V352.5H670V351.5H678V352.5H679V351.5H711V350.5H712V352.5H713V351.5H720V350.5H722V349.5H754V350.5H756V349.5H769V350.5H770V349.5H780V350.5H781V349.5H782V348.5H783V349.5H806V350.5H809V351.5H818V350.5H819V351.5H829V350.5H830V352.5H831V351.5H855V352.5H856V351.5H872V352.5H873V351.5H881V352.5H882V351.5H883V352.5H884V350.5H885V351.5H900V350.5H902V351.5H903V350.5H907V349.5H908V350.5H909V349.5H910V350.5H924V351.5H925V350.5H931V351.5H932V350.5H940V349.5H941V350.5H953V351.5H954V349.5H955V350.5H962V351.5H963V350.5H977V349.5H978V350.5H981V351.5H982V350.5H986V351.5H987V350.5H1051V349.5H1052V350.5H1053V351.5H1054V350.5H1062V351.5H1063V350.5H1067V349.5H1068V350.5H1081V349.5H1082V350.5H1090V349.5H1091V350.5H1105V351.5H1106V350.5H1114V351.5H1115V350.5H1135V349.5H1136V350.5H1156V353.5H1171V352.5H1179V353.5H1180V352.5H1185V351.5H1187V352.5H1189V353.5H1190V352.5H1231V351.5H1232V353.5H1233V352.5H1282V351.5H1283V352.5H1293V351.5H1297V350.5H1325V349.5H1326V350.5H1331V349.5H1332V350.5H1339V349.5H1340V350.5H1383V351.5H1384V350.5H1389V349.5H1394V348.5H1396V349.5H1401V348.5H1402V349.5H1408V348.5H1409V349.5H1411V348.5H1412V349.5H1416V350.5H1417V349.5H1428V348.5H1429V349.5H1445V350.5H1447V349.5H1452V350.5H1453V349.5H1461V350.5H1462V349.5H1476V348.5H1477V349.5H1491" fill="none" stroke="#e0214a" stroke-width="1.4"/>
<polyline points="81.0,351.0 82.0,367.5 83.0,352.0 84.0,356.0 85.0,351.0" fill="none" stroke="#e0214a" stroke-width="1.3" stroke-linejoin="round"/>
<path d="M1389.5,350 L1390.5,341 L1392,350 L1390.8,359.5 Z" fill="#e0214a" stroke="#e0214a" stroke-width="1"/>
<polyline points="1491.0,350.0 1491.0,371.7 1492.0,296.0" fill="none" stroke="#e0214a" stroke-width="1.3" stroke-linejoin="round"/>
<path d="M1491.5,372 L1492,296 L1494,303 L1495,297 L1497,306 L1498,299 L1500,302 L1501,295 L1503,297 L1505,292 L1509,292 L1508,296 L1506,304 L1504,300 L1503,312 L1501,308 L1499,322 L1497,318 L1495,335 L1493.5,330 L1492.5,352 Z" fill="#e0214a"/>
<polyline points="1522.0,292.0 1526.0,310.0 1528.8,323.8 1533.8,333.8 1538.8,338.8 1539.5,336.0 1541.0,346.2 1547.5,347.5 1557.5,348.3 1570.0,348.8 1600.0,349.5 1751.0,349.5" fill="none" stroke="#e0214a" stroke-width="1.6" stroke-linejoin="round"/>
<path d="M3,349.5H1751" stroke="#3a3a3a" stroke-width="1.2" stroke-dasharray="5 5" stroke-dashoffset="0"/>
<text x="1707.0" y="309.0" font-size="12.9" fill="#111" textLength="38.9" lengthAdjust="spacingAndGlyphs" opacity="0.85">1.80 V</text><text x="1707.9" y="308.1" font-size="12.9" fill="#dc2448" textLength="38.9" lengthAdjust="spacingAndGlyphs">1.80 V</text><text x="1699.2" y="332.0" font-size="12.9" fill="#111" textLength="46.7" lengthAdjust="spacingAndGlyphs" opacity="0.85">900 mV</text><text x="1700.1" y="331.1" font-size="12.9" fill="#dc2448" textLength="46.7" lengthAdjust="spacingAndGlyphs">900 mV</text><text x="1727.4" y="355.0" font-size="12.9" fill="#111" textLength="18.5" lengthAdjust="spacingAndGlyphs" opacity="0.85">0 V</text><text x="1728.3" y="354.1" font-size="12.9" fill="#dc2448" textLength="18.5" lengthAdjust="spacingAndGlyphs">0 V</text><text x="1695.3" y="378.0" font-size="12.9" fill="#111" textLength="50.6" lengthAdjust="spacingAndGlyphs" opacity="0.85">-900 mV</text><text x="1696.2" y="377.1" font-size="12.9" fill="#dc2448" textLength="50.6" lengthAdjust="spacingAndGlyphs">-900 mV</text><text x="1703.1" y="401.0" font-size="12.9" fill="#111" textLength="42.8" lengthAdjust="spacingAndGlyphs" opacity="0.85">-1.80 V</text><text x="1704.0" y="400.1" font-size="12.9" fill="#dc2448" textLength="42.8" lengthAdjust="spacingAndGlyphs">-1.80 V</text>
<path d="M9.1,337.2 H30.3 L42.0,350.0 L30.3,362.8 H9.1 Q6.1,362.8 6.1,359.8 V340.2 Q6.1,337.2 9.1,337.2 Z" fill="#fde8ec" stroke="#f07088" stroke-width="1.6"/><text x="15.0" y="352.2" font-size="11.0" fill="#ee6474" textLength="16.7" lengthAdjust="spacingAndGlyphs">C 3</text>
<text x="53.6" y="355.8" font-size="19.3" fill="#202020" textLength="91.1" lengthAdjust="spacingAndGlyphs" opacity="0.75">U_Rog,coil</text><text x="54.4" y="355.0" font-size="19.3" fill="#dc2448" textLength="91.1" lengthAdjust="spacingAndGlyphs" stroke="#dc2448" stroke-width="0.35">U_Rog,coil</text>
<path d="M3,477.5H218V476.5H221V475.5H223V474.5H226V473.5H229V472.5H232V471.5H235V470.5H237V469.5H240V468.5H243V467.5H246V466.5H249V465.5H252V464.5H254V463.5H260V462.5H330V463.5H331V462.5H344V463.5H374V464.5H375V463.5H396V464.5H444V463.5H445V464.5H453V465.5H478V464.5H479V465.5H489V466.5H490V465.5H496V466.5H646V467.5H703V466.5H704V467.5H783V468.5H871V469.5H1008V470.5H1009V469.5H1152V470.5H1153V469.5H1166V470.5H1167V471.5H1168V470.5H1311V469.5H1440V468.5H1441V469.5H1476V470.5H1491" fill="none" stroke="#74bf22" stroke-width="1.3"/>
<polyline points="1490.0,470.5 1491.2,470.5 1491.5,459.5 1495.0,462.0" fill="none" stroke="#74bf22" stroke-width="1.4" stroke-linejoin="round"/>
<path d="M1495,462.5H1519V463.5H1522V464.5H1525V465.5H1529V466.5H1533V467.5H1537V468.5H1540V469.5H1544V470.5H1547V471.5H1550V472.5H1558V473.5H1565V474.5H1572V475.5H1582V476.5H1630V477.5H1752" fill="none" stroke="#74bf22" stroke-width="1.5"/>
<path d="M3,478.5H1751" stroke="#3a3a3a" stroke-width="1.2" stroke-dasharray="5 5" stroke-dashoffset="0"/>
<text x="1727.4" y="426.5" font-size="12.9" fill="#111" textLength="18.5" lengthAdjust="spacingAndGlyphs" opacity="0.85">1 V</text><text x="1728.3" y="425.6" font-size="12.9" fill="#6cb020" textLength="18.5" lengthAdjust="spacingAndGlyphs">1 V</text><text x="1699.2" y="449.5" font-size="12.9" fill="#111" textLength="46.7" lengthAdjust="spacingAndGlyphs" opacity="0.85">600 mV</text><text x="1700.1" y="448.6" font-size="12.9" fill="#6cb020" textLength="46.7" lengthAdjust="spacingAndGlyphs">600 mV</text><text x="1699.2" y="472.5" font-size="12.9" fill="#111" textLength="46.7" lengthAdjust="spacingAndGlyphs" opacity="0.85">200 mV</text><text x="1700.1" y="471.6" font-size="12.9" fill="#6cb020" textLength="46.7" lengthAdjust="spacingAndGlyphs">200 mV</text><text x="1695.3" y="495.5" font-size="12.9" fill="#111" textLength="50.6" lengthAdjust="spacingAndGlyphs" opacity="0.85">-200 mV</text><text x="1696.2" y="494.6" font-size="12.9" fill="#6cb020" textLength="50.6" lengthAdjust="spacingAndGlyphs">-200 mV</text><text x="1695.3" y="518.5" font-size="12.9" fill="#111" textLength="50.6" lengthAdjust="spacingAndGlyphs" opacity="0.85">-600 mV</text><text x="1696.2" y="517.6" font-size="12.9" fill="#6cb020" textLength="50.6" lengthAdjust="spacingAndGlyphs">-600 mV</text>
<path d="M8.8,453 H77.9 L83.6,466.0 L77.9,479 H8.8 Q6.3,479 6.3,476.5 V455.5 Q6.3,453 8.8,453 Z" fill="#f0f8e6" stroke="#7cc83e" stroke-width="2"/><path d="M32.7,453V479" stroke="#7cc83e" stroke-width="2"/><text x="10.9" y="469.4" font-size="11.0" fill="#111" textLength="16.0" lengthAdjust="spacingAndGlyphs">C 4</text><text x="35.5" y="469.4" font-size="11.0" fill="#111" textLength="37.0" lengthAdjust="spacingAndGlyphs">200 mV</text>
<text x="100.5" y="473.3" font-size="19.3" fill="#202020" textLength="86.2" lengthAdjust="spacingAndGlyphs" opacity="0.75">U_Photod</text><text x="101.3" y="472.5" font-size="19.3" fill="#6cb020" textLength="86.2" lengthAdjust="spacingAndGlyphs" stroke="#6cb020" stroke-width="0.35">U_Photod</text>
<path d="M42,583.5H60V584.5H61V582.5H62V583.5H69V582.5H70V583.5H80V584.5H81V583.5H93V584.5H94V583.5H105V584.5H106V583.5H172V584.5H173V583.5H174V584.5H175V583.5H185V584.5H186V583.5H192V582.5H193V583.5H231V582.5H232V584.5H233V583.5H238V582.5H239V583.5H246V584.5H247V583.5H254V584.5H255V583.5H279V584.5H280V583.5H292V584.5H293V583.5H325V584.5H326V583.5H357V582.5H358V583.5H424V584.5H425V583.5H428V584.5H429V583.5H430V582.5H431V583.5H447V582.5H448V583.5H468V582.5H469V583.5H512V584.5H513V583.5H514V582.5H515V583.5H548V584.5H549V583.5H565V584.5H566V583.5H578V584.5H579V583.5H598V582.5H599V583.5H622V582.5H623V583.5H653V584.5H654V583.5H660V584.5H661V583.5H662V582.5H663V583.5H736V582.5H737V583.5H738V584.5H739V583.5H748V582.5H749V583.5H757V584.5H758V583.5H775V584.5H776V583.5H819V582.5H820V583.5H827V582.5H828V583.5H837V584.5H838V583.5H845V582.5H846V583.5H877V582.5H878V583.5H894V582.5H895V583.5H897V582.5H898V583.5H912V584.5H913V583.5H928V582.5H929V583.5H980V582.5H981V583.5H995V582.5H996V583.5H1005V584.5H1006V583.5H1008V582.5H1009V583.5H1040V582.5H1041V583.5H1045V582.5H1046V583.5H1062V584.5H1063V583.5H1080V584.5H1081V583.5H1096V582.5H1097V583.5H1107V584.5H1108V583.5H1114V584.5H1115V583.5H1150V582.5H1151V583.5H1166V584.5H1167V583.5H1194V582.5H1195V583.5H1200V582.5H1201V583.5H1206V582.5H1207V583.5H1261V584.5H1262V583.5H1288V584.5H1289V583.5H1292V582.5H1293V583.5H1294V582.5H1295V583.5H1323V582.5H1324V583.5H1335V584.5H1336V583.5H1363V582.5H1364V583.5H1400V584.5H1401V583.5H1417V582.5H1418V583.5H1440V582.5H1441V583.5H1474V582.5H1475V583.5H1478V582.5H1479V583.5H1551V582.5H1552V583.5H1614V582.5H1615V583.5H1635V582.5H1636V583.5H1639V584.5H1640V583.5H1659V582.5H1660V583.5H1689V582.5H1690V583.5H1711V584.5H1712V583.5H1723V584.5H1724V583.5H1751V582.5H1752" fill="none" stroke="#f0901e" stroke-width="1.3"/>
<path d="M42,583.5H1718" stroke="#3a3a3a" stroke-width="1.2" stroke-dasharray="5 5" stroke-dashoffset="0"/>
<text x="1727.4" y="543.0" font-size="12.9" fill="#111" textLength="18.5" lengthAdjust="spacingAndGlyphs" opacity="0.85">4 V</text><text x="1728.3" y="542.1" font-size="12.9" fill="#ea8a1a" textLength="18.5" lengthAdjust="spacingAndGlyphs">4 V</text><text x="1727.4" y="566.0" font-size="12.9" fill="#111" textLength="18.5" lengthAdjust="spacingAndGlyphs" opacity="0.85">2 V</text><text x="1728.3" y="565.1" font-size="12.9" fill="#ea8a1a" textLength="18.5" lengthAdjust="spacingAndGlyphs">2 V</text><text x="1727.4" y="589.0" font-size="12.9" fill="#111" textLength="18.5" lengthAdjust="spacingAndGlyphs" opacity="0.85">0 V</text><text x="1728.3" y="588.1" font-size="12.9" fill="#ea8a1a" textLength="18.5" lengthAdjust="spacingAndGlyphs">0 V</text><text x="1723.5" y="612.0" font-size="12.9" fill="#111" textLength="22.4" lengthAdjust="spacingAndGlyphs" opacity="0.85">-2 V</text><text x="1724.4" y="611.1" font-size="12.9" fill="#ea8a1a" textLength="22.4" lengthAdjust="spacingAndGlyphs">-2 V</text><text x="1723.5" y="635.0" font-size="12.9" fill="#111" textLength="22.4" lengthAdjust="spacingAndGlyphs" opacity="0.85">-4 V</text><text x="1724.4" y="634.1" font-size="12.9" fill="#ea8a1a" textLength="22.4" lengthAdjust="spacingAndGlyphs">-4 V</text>
<path d="M9.1,571 H30.3 L42.0,583.8 L30.3,596.6 H9.1 Q6.1,596.6 6.1,593.6 V574 Q6.1,571 9.1,571 Z" fill="#fff1e4" stroke="#f5a860" stroke-width="1.6"/><text x="15.0" y="586.0" font-size="11.0" fill="#111" textLength="16.7" lengthAdjust="spacingAndGlyphs">C 5</text>
<text x="53.0" y="589.6" font-size="19.3" fill="#202020" textLength="101.7" lengthAdjust="spacingAndGlyphs" opacity="0.75">U_Diamagn</text><text x="53.8" y="588.8" font-size="19.3" fill="#ea8a1a" textLength="101.7" lengthAdjust="spacingAndGlyphs" stroke="#ea8a1a" stroke-width="0.35">U_Diamagn</text>
<path d="M3,747.5H4V746.5H18V745.5H55" fill="none" stroke="#2121a8" stroke-width="1.3"/>
<polyline points="55.0,745.5 55.0,670.0" fill="none" stroke="#2121a8" stroke-width="1.3" stroke-linejoin="round"/>
<polyline points="65.0,644.0 66.0,653.5 82.0,653.5 82.5,644.0 83.0,653.5 89.0,653.5 90.0,643.0 93.0,653.5" fill="none" stroke="#2121a8" stroke-width="1.4" stroke-linejoin="round"/>
<path d="M93,653.5H127V654.5H128V653.5H130V652.5H131V653.5H137V654.5H138V653.5H147V654.5H148V653.5H162V654.5H163V653.5H261V654.5H262V653.5H271V654.5H272V653.5H297V652.5H298V653.5H305V652.5H306V653.5H313V652.5H314V653.5H319V652.5H320V653.5H362V652.5H363V653.5H413V652.5H414V653.5H415V652.5H416V653.5H424V652.5H425V653.5H433V654.5H434V653.5H446V654.5H447V653.5H459V654.5H460V653.5H492V652.5H493V653.5H533V654.5H534V653.5H543V652.5H544V653.5H551V652.5H552V653.5H569V654.5H570V653.5H580V654.5H581V653.5H597V652.5H598V653.5H605V654.5H606V653.5H629V652.5H630V653.5H776V654.5H777V653.5H880V654.5H881V653.5H894V654.5H895V653.5H915V654.5H916V653.5H946V654.5H947V653.5H1036V652.5H1037V653.5H1043V652.5H1044V653.5H1079V652.5H1080V653.5H1112V654.5H1113V653.5H1130V652.5H1131V653.5H1135V654.5H1136V653.5H1141V654.5H1142V653.5H1162V652.5H1163V653.5H1168V654.5H1169V653.5H1178V654.5H1179V653.5H1181V654.5H1182V653.5H1203V652.5H1204V653.5H1205V652.5H1206V653.5H1227V652.5H1228V653.5H1281V652.5H1282V653.5H1285V654.5H1286V653.5H1289V652.5H1290V653.5H1320V652.5H1321V653.5H1325V652.5H1326V653.5H1339V654.5H1340V653.5H1381V654.5H1382V653.5H1391V654.5H1392V653.5H1398V652.5H1399V654.5H1400V653.5H1414V654.5H1415V653.5H1427V652.5H1429V653.5H1432V654.5H1433V653.5H1455V652.5H1456V653.5H1475V652.5H1476V653.5H1479V652.5H1480V653.5H1485V654.5H1486V653.5H1488V654.5H1490V653.5H1492" fill="none" stroke="#2121a8" stroke-width="1.6"/>
<path d="M1541,653.5H1752" fill="none" stroke="#2121a8" stroke-width="1.6"/>
<polyline points="1390.0,654.0 1390.0,648.0 1391.0,653.8 1432.0,653.8 1433.0,648.0 1434.0,653.8" fill="none" stroke="#2121a8" stroke-width="1.3" stroke-linejoin="round"/>
<polyline points="1491.0,653.8 1491.5,653.8 1491.5,643.0" fill="none" stroke="#2121a8" stroke-width="1.4" stroke-linejoin="round"/>
<polyline points="1503.0,643.0 1504.0,650.0 1507.0,653.8 1520.0,653.8 1521.0,643.0 1524.0,651.0 1526.0,643.0 1528.0,653.8 1529.0,643.0 1531.0,653.8 1537.0,653.8 1538.0,643.0 1541.0,653.8 1545.0,653.8" fill="none" stroke="#2121a8" stroke-width="1.4" stroke-linejoin="round"/>
<text x="1727.4" y="659.5" font-size="12.9" fill="#111" textLength="18.5" lengthAdjust="spacingAndGlyphs" opacity="0.85">6 V</text><text x="1728.3" y="658.6" font-size="12.9" fill="#2a2a9a" textLength="18.5" lengthAdjust="spacingAndGlyphs">6 V</text><text x="1707.0" y="682.5" font-size="12.9" fill="#111" textLength="38.9" lengthAdjust="spacingAndGlyphs" opacity="0.85">4.50 V</text><text x="1707.9" y="681.6" font-size="12.9" fill="#2a2a9a" textLength="38.9" lengthAdjust="spacingAndGlyphs">4.50 V</text><text x="1727.4" y="705.5" font-size="12.9" fill="#111" textLength="18.5" lengthAdjust="spacingAndGlyphs" opacity="0.85">3 V</text><text x="1728.3" y="704.6" font-size="12.9" fill="#2a2a9a" textLength="18.5" lengthAdjust="spacingAndGlyphs">3 V</text><text x="1707.0" y="728.5" font-size="12.9" fill="#111" textLength="38.9" lengthAdjust="spacingAndGlyphs" opacity="0.85">1.50 V</text><text x="1707.9" y="727.6" font-size="12.9" fill="#2a2a9a" textLength="38.9" lengthAdjust="spacingAndGlyphs">1.50 V</text><text x="1727.4" y="751.5" font-size="12.9" fill="#111" textLength="18.5" lengthAdjust="spacingAndGlyphs" opacity="0.85">0 V</text><text x="1728.3" y="750.6" font-size="12.9" fill="#2a2a9a" textLength="18.5" lengthAdjust="spacingAndGlyphs">0 V</text>
<path d="M1729,700.5 L1741,690 V711 Z" fill="#2121a8"/><path d="M1739,700.5H1751.5" stroke="#2121a8" stroke-width="4"/>
<path d="M45.5,644.5 H64.5 V664 H59 L55,670 L51,664 H45.5 Z" fill="#0a0a0a" stroke="#f39020" stroke-width="1.8"/>
<path d="M50.5,648.5 H59.5 M55,648.5 V660" stroke="#f39020" stroke-width="2.4"/>
<path d="M8.8,687.3 H77.9 L83.6,700.3 L77.9,713.3 H8.8 Q6.3,713.3 6.3,710.8 V689.8 Q6.3,687.3 8.8,687.3 Z" fill="#e8e8f8" stroke="#111" stroke-width="2"/><path d="M8.8,687.3 H32.7 V713.3 H8.8 Q6.3,713.3 6.3,710.8 V689.8 Q6.3,687.3 8.8,687.3 Z" fill="#2424c4" stroke="#111" stroke-width="2"/><path d="M32.7,687.3V713.3" stroke="#111" stroke-width="2"/><text x="10.9" y="703.7" font-size="11.0" fill="#ffffff" textLength="16.0" lengthAdjust="spacingAndGlyphs">C 6</text><text x="49.0" y="703.7" font-size="11.0" fill="#2828a8" textLength="17.0" lengthAdjust="spacingAndGlyphs">3 V</text>
<text x="100.5" y="707.1" font-size="19.3" fill="#202020" textLength="62.5" lengthAdjust="spacingAndGlyphs" opacity="0.75">Trigger</text><text x="101.3" y="706.3" font-size="19.3" fill="#2a2a9a" textLength="62.5" lengthAdjust="spacingAndGlyphs" stroke="#2a2a9a" stroke-width="0.35">Trigger</text>
<text x="47.1" y="753.4" font-size="12.9" fill="#111" textLength="16.5" lengthAdjust="spacingAndGlyphs" opacity="0.9">0 s</text>
<text x="47.9" y="752.7" font-size="12.9" fill="#3a3a3a" textLength="16.5" lengthAdjust="spacingAndGlyphs" stroke="#3a3a3a" stroke-width="0.2">0 s</text>
<text x="215.5" y="753.4" font-size="12.9" fill="#111" textLength="29.5" lengthAdjust="spacingAndGlyphs" opacity="0.9">4 ms</text>
<text x="216.2" y="752.7" font-size="12.9" fill="#3a3a3a" textLength="29.5" lengthAdjust="spacingAndGlyphs" stroke="#3a3a3a" stroke-width="0.2">4 ms</text>
<text x="390.3" y="753.4" font-size="12.9" fill="#111" textLength="29.5" lengthAdjust="spacingAndGlyphs" opacity="0.9">8 ms</text>
<text x="391.0" y="752.7" font-size="12.9" fill="#3a3a3a" textLength="29.5" lengthAdjust="spacingAndGlyphs" stroke="#3a3a3a" stroke-width="0.2">8 ms</text>
<text x="561.7" y="753.4" font-size="12.9" fill="#111" textLength="36.3" lengthAdjust="spacingAndGlyphs" opacity="0.9">12 ms</text>
<text x="562.4" y="752.7" font-size="12.9" fill="#3a3a3a" textLength="36.3" lengthAdjust="spacingAndGlyphs" stroke="#3a3a3a" stroke-width="0.2">12 ms</text>
<text x="736.5" y="753.4" font-size="12.9" fill="#111" textLength="36.3" lengthAdjust="spacingAndGlyphs" opacity="0.9">16 ms</text>
<text x="737.2" y="752.7" font-size="12.9" fill="#3a3a3a" textLength="36.3" lengthAdjust="spacingAndGlyphs" stroke="#3a3a3a" stroke-width="0.2">16 ms</text>
<text x="911.2" y="753.4" font-size="12.9" fill="#111" textLength="36.3" lengthAdjust="spacingAndGlyphs" opacity="0.9">20 ms</text>
<text x="912.0" y="752.7" font-size="12.9" fill="#3a3a3a" textLength="36.3" lengthAdjust="spacingAndGlyphs" stroke="#3a3a3a" stroke-width="0.2">20 ms</text>
<text x="1086.0" y="753.4" font-size="12.9" fill="#111" textLength="36.3" lengthAdjust="spacingAndGlyphs" opacity="0.9">24 ms</text>
<text x="1086.8" y="752.7" font-size="12.9" fill="#3a3a3a" textLength="36.3" lengthAdjust="spacingAndGlyphs" stroke="#3a3a3a" stroke-width="0.2">24 ms</text>
<text x="1260.8" y="753.4" font-size="12.9" fill="#111" textLength="36.3" lengthAdjust="spacingAndGlyphs" opacity="0.9">28 ms</text>
<text x="1261.5" y="752.7" font-size="12.9" fill="#3a3a3a" textLength="36.3" lengthAdjust="spacingAndGlyphs" stroke="#3a3a3a" stroke-width="0.2">28 ms</text>
<text x="1435.6" y="753.4" font-size="12.9" fill="#111" textLength="36.3" lengthAdjust="spacingAndGlyphs" opacity="0.9">32 ms</text>
<text x="1436.3" y="752.7" font-size="12.9" fill="#3a3a3a" textLength="36.3" lengthAdjust="spacingAndGlyphs" stroke="#3a3a3a" stroke-width="0.2">32 ms</text>
<text x="1610.4" y="753.4" font-size="12.9" fill="#111" textLength="36.3" lengthAdjust="spacingAndGlyphs" opacity="0.9">36 ms</text>
<text x="1611.1" y="752.7" font-size="12.9" fill="#3a3a3a" textLength="36.3" lengthAdjust="spacingAndGlyphs" stroke="#3a3a3a" stroke-width="0.2">36 ms</text>
<path d="M3,864.5H56V863.5H68V862.5H81V861.5H93V860.5H100V859.5H107V858.5H113V857.5H120V856.5H127V855.5H134V854.5H141V853.5H148V852.5H155V851.5H162V850.5H169V849.5H176V848.5H183V847.5H190V846.5H197V845.5H204V844.5H211V843.5H218V842.5H225V841.5H232V840.5H242V839.5H251V838.5H260V837.5H270V836.5H279V835.5H288V834.5H298V833.5H307V832.5H316V831.5H325V830.5H335V829.5H344V828.5H353V827.5H363V826.5H372V825.5H381V824.5H391V823.5H400V822.5H410V821.5H420V820.5H430V819.5H441V818.5H451V817.5H461V816.5H471V815.5H482V814.5H492V813.5H502V812.5H513V811.5H523V810.5H533V809.5H543V808.5H554V807.5H564V806.5H574V805.5H586V804.5H600V803.5H613V802.5H627V801.5H641V800.5H654V799.5H668V798.5H682V797.5H695V796.5H709V795.5H723V794.5H736V793.5H750V792.5H765V791.5H781V790.5H797V789.5H813V788.5H829V787.5H845V786.5H861V785.5H877V784.5H898V783.5H920V782.5H944V781.5H971V780.5H998V779.5H1025V778.5H1052V777.5H1079V776.5H1106V775.5H1154V774.5H1203V773.5H1251V772.5H1557V773.5H1613V774.5H1660V775.5H1752" fill="none" stroke="#ea8c1c" stroke-width="1.25"/>
<text x="1673.9" y="777.0" font-size="12.9" fill="#111" textLength="72.0" lengthAdjust="spacingAndGlyphs" opacity="0.85">590.701 mT</text><text x="1674.8" y="776.1" font-size="12.9" fill="#e8881a" textLength="72.0" lengthAdjust="spacingAndGlyphs">590.701 mT</text><text x="1673.9" y="800.0" font-size="12.9" fill="#111" textLength="72.0" lengthAdjust="spacingAndGlyphs" opacity="0.85">443.026 mT</text><text x="1674.8" y="799.1" font-size="12.9" fill="#e8881a" textLength="72.0" lengthAdjust="spacingAndGlyphs">443.026 mT</text><text x="1673.9" y="823.0" font-size="12.9" fill="#111" textLength="72.0" lengthAdjust="spacingAndGlyphs" opacity="0.85">295.351 mT</text><text x="1674.8" y="822.1" font-size="12.9" fill="#e8881a" textLength="72.0" lengthAdjust="spacingAndGlyphs">295.351 mT</text><text x="1673.9" y="846.0" font-size="12.9" fill="#111" textLength="72.0" lengthAdjust="spacingAndGlyphs" opacity="0.85">147.675 mT</text><text x="1674.8" y="845.1" font-size="12.9" fill="#e8881a" textLength="72.0" lengthAdjust="spacingAndGlyphs">147.675 mT</text><text x="1727.4" y="869.0" font-size="12.9" fill="#111" textLength="18.5" lengthAdjust="spacingAndGlyphs" opacity="0.85">0 T</text><text x="1728.3" y="868.1" font-size="12.9" fill="#e8881a" textLength="18.5" lengthAdjust="spacingAndGlyphs">0 T</text>
<path d="M9.1,851.3 H30.3 L42.0,863.0 L30.3,874.6999999999999 H9.1 Q6.1,874.6999999999999 6.1,871.6999999999999 V854.3 Q6.1,851.3 9.1,851.3 Z" fill="#fdf0e6" stroke="#f2a860" stroke-width="1.6"/><text x="15.0" y="866.3" font-size="11.0" fill="#111" textLength="19.6" lengthAdjust="spacingAndGlyphs">M 1</text>
<text x="54.0" y="863.7" font-size="25.0" fill="#202020" textLength="38.2" lengthAdjust="spacingAndGlyphs" opacity="0.75">B_t</text><text x="54.8" y="862.9" font-size="25.0" fill="#e8881a" textLength="38.2" lengthAdjust="spacingAndGlyphs" stroke="#e8881a" stroke-width="0.35">B_t</text>
<path d="M3,976.5H5V975.5H6V976.5H12V977.5H13V976.5H27V975.5H28V976.5H35V975.5H36V976.5H55V977.5H79V978.5H87V979.5H88V978.5H137V977.5H138V978.5H144V977.5H145V978.5H213V977.5H214V976.5H216V975.5H217V974.5H218V973.5H219V972.5H221V971.5H222V970.5H224V969.5H226V968.5H229V967.5H233V966.5H237V965.5H241V964.5H245V963.5H249V962.5H253V961.5H256V960.5H259V959.5H261V958.5H263V959.5H264V957.5H266V956.5H269V954.5H270V955.5H271V954.5H274V953.5H276V952.5H279V951.5H281V950.5H284V949.5H286V948.5H289V946.5H290V947.5H292V946.5H295V945.5H297V944.5H300V943.5H303V942.5H305V941.5H308V940.5H311V939.5H313V938.5H316V937.5H319V936.5H321V935.5H324V934.5H327V933.5H329V932.5H337V931.5H349V930.5H357V931.5H358V930.5H360V929.5H371V928.5H383V927.5H394V926.5H405V925.5H420V924.5H436V923.5H441V922.5H447V921.5H452V922.5H453V916.5H455V915.5H460V914.5H465V913.5H469V912.5H475V911.5H479V910.5H483V909.5H488V908.5H492V907.5H496V906.5H500V905.5H504V904.5H508V903.5H512V902.5H516V901.5H520V900.5H524V899.5H529V898.5H531V897.5H535V896.5H536V895.5H537V896.5H540V895.5H543V894.5H547V893.5H550V892.5H554V891.5H557V890.5H560V889.5H563V888.5H566V887.5H570V886.5H573V885.5H576V884.5H579V883.5H583V882.5H586V881.5H589V880.5H592V879.5H595V878.5H599V877.5H602V876.5H604" fill="none" stroke="#6c2c9c" stroke-width="1.25"/>
<polyline points="1506.3,876.0 1511.0,895.0 1516.3,915.0 1522.5,945.0 1526.0,951.5 1530.0,956.3 1535.0,959.5 1540.0,961.3 1552.5,963.3 1600.0,964.3 1640.0,965.0 1641.0,962.5 1645.0,963.5 1751.0,963.8" fill="none" stroke="#6c2c9c" stroke-width="1.3" stroke-linejoin="round"/>
<text x="1685.4" y="894.0" font-size="12.9" fill="#111" textLength="60.5" lengthAdjust="spacingAndGlyphs" opacity="0.85">10.592 kA</text><text x="1686.3" y="893.1" font-size="12.9" fill="#5a2a8a" textLength="60.5" lengthAdjust="spacingAndGlyphs">10.592 kA</text><text x="1692.9" y="917.0" font-size="12.9" fill="#111" textLength="53.0" lengthAdjust="spacingAndGlyphs" opacity="0.85">7.944 kA</text><text x="1693.8" y="916.1" font-size="12.9" fill="#5a2a8a" textLength="53.0" lengthAdjust="spacingAndGlyphs">7.944 kA</text><text x="1692.9" y="940.0" font-size="12.9" fill="#111" textLength="53.0" lengthAdjust="spacingAndGlyphs" opacity="0.85">5.296 kA</text><text x="1693.8" y="939.1" font-size="12.9" fill="#5a2a8a" textLength="53.0" lengthAdjust="spacingAndGlyphs">5.296 kA</text><text x="1692.9" y="963.0" font-size="12.9" fill="#111" textLength="53.0" lengthAdjust="spacingAndGlyphs" opacity="0.85">2.648 kA</text><text x="1693.8" y="962.1" font-size="12.9" fill="#5a2a8a" textLength="53.0" lengthAdjust="spacingAndGlyphs">2.648 kA</text><text x="1726.6" y="986.0" font-size="12.9" fill="#111" textLength="19.3" lengthAdjust="spacingAndGlyphs" opacity="0.85">0 A</text><text x="1727.5" y="985.1" font-size="12.9" fill="#5a2a8a" textLength="19.3" lengthAdjust="spacingAndGlyphs">0 A</text>
<path d="M9.1,967.3 H30.3 L42.0,979.0 L30.3,990.6999999999999 H9.1 Q6.1,990.6999999999999 6.1,987.6999999999999 V970.3 Q6.1,967.3 9.1,967.3 Z" fill="#f2eaf6" stroke="#b088cc" stroke-width="1.6"/><text x="15.0" y="982.3" font-size="11.0" fill="#7a48a8" textLength="19.6" lengthAdjust="spacingAndGlyphs">M 2</text>
<text x="53.7" y="985.8" font-size="25.0" fill="#202020" textLength="24.0" lengthAdjust="spacingAndGlyphs" opacity="0.75">I_p</text><text x="54.5" y="985.0" font-size="25.0" fill="#5a2a8a" textLength="24.0" lengthAdjust="spacingAndGlyphs" stroke="#5a2a8a" stroke-width="0.35">I_p</text>
<path d="M45,58 H65 L55,68 Z" fill="#f39020"/>
<defs><linearGradient id="btng" x1="0" y1="0" x2="0" y2="1"><stop offset="0" stop-color="#424346"/><stop offset="0.22" stop-color="#303133"/><stop offset="0.8" stop-color="#2a2a2a"/><stop offset="1" stop-color="#1e1e1e"/></linearGradient></defs>
<path d="M1769.5,995.5 V29.5" fill="none" stroke="#55575a" stroke-width="1"/>
<path d="M1920,995.5 H1769.5 M1769.5,29.5 H1920" fill="none" stroke="#6a625c" stroke-width="1"/>
<circle cx="1762" cy="503.7" r="2" fill="#c4c4c4"/>
<circle cx="1762" cy="512.2" r="2" fill="#c4c4c4"/>
<circle cx="1762" cy="520.8" r="2" fill="#c4c4c4"/>
<text x="1785.9" y="25.9" font-size="31.3" fill="#ffffff" font-weight="bold" textLength="28.1" lengthAdjust="spacingAndGlyphs">Te</text>
<path d="M1815.1,3.9 H1820.1 V26 H1815.1 Z M1822.8,26 L1829.9,26 L1825.6,18.3 Z" fill="#ffffff"/>
<path d="M1814.9,26 L1822.4,26 L1830.9,9.1 L1825.6,9.1 Z" fill="#1fc0e0"/>
<path d="M1831.5,10.5 L1836.2,4.6 V9.1 H1838.6 V13.8 H1836.2 V26 H1831.5 Z" fill="#ffffff"/>
<text x="1839.6" y="25.9" font-size="31.3" fill="#ffffff" font-weight="bold" textLength="63.6" lengthAdjust="spacingAndGlyphs">ronix</text>
<text x="1802.4" y="43.8" font-size="14.8" fill="#e8e8ec" font-weight="bold" textLength="84.2" lengthAdjust="spacingAndGlyphs">Add New...</text>
<rect x="1778.5" y="54.4" width="62.299999999999955" height="36.199999999999996" rx="4.5" fill="url(#btng)" stroke="#6d645c" stroke-width="1"/>
<rect x="1850.3" y="54.4" width="62.40000000000009" height="36.199999999999996" rx="4.5" fill="url(#btng)" stroke="#6d645c" stroke-width="1"/>
<rect x="1778.5" y="100.2" width="62.299999999999955" height="36.3" rx="4.5" fill="url(#btng)" stroke="#6d645c" stroke-width="1"/>
<rect x="1850.3" y="100.2" width="62.40000000000009" height="36.3" rx="4.5" fill="url(#btng)" stroke="#6d645c" stroke-width="1"/>
<rect x="1778.5" y="146.2" width="62.299999999999955" height="36.20000000000002" rx="4.5" fill="url(#btng)" stroke="#6d645c" stroke-width="1"/>
<rect x="1850.3" y="146.2" width="62.40000000000009" height="36.20000000000002" rx="4.5" fill="url(#btng)" stroke="#6d645c" stroke-width="1"/>
<rect x="1778.5" y="196.3" width="62.299999999999955" height="36.099999999999994" rx="4.5" fill="url(#btng)" stroke="#6d645c" stroke-width="1"/>
<rect x="1850.3" y="196.3" width="62.40000000000009" height="36.099999999999994" rx="4.5" fill="url(#btng)" stroke="#6d645c" stroke-width="1"/>
<text x="1785.0" y="76.8" font-size="15.0" fill="#f0f0f0" textLength="50.0" lengthAdjust="spacingAndGlyphs">Cursors</text>
<text x="1856.6" y="76.8" font-size="15.0" fill="#f0f0f0" textLength="48.8" lengthAdjust="spacingAndGlyphs">Callout</text>
<text x="1780.4" y="122.8" font-size="15.0" fill="#f0f0f0" textLength="58.2" lengthAdjust="spacingAndGlyphs">Measure</text>
<text x="1858.2" y="122.8" font-size="15.0" fill="#f0f0f0" textLength="45.9" lengthAdjust="spacingAndGlyphs">Search</text>
<text x="1785.5" y="160.4" font-size="15.0" fill="#f0f0f0" textLength="48.0" lengthAdjust="spacingAndGlyphs">Results</text>
<text x="1791.2" y="177.0" font-size="15.0" fill="#f0f0f0" textLength="36.6" lengthAdjust="spacingAndGlyphs">Table</text>
<text x="1867.2" y="169.3" font-size="15.0" fill="#f0f0f0" textLength="28.2" lengthAdjust="spacingAndGlyphs">Plot</text>
<text x="1856.8" y="218.8" font-size="15.0" fill="#f0f0f0" textLength="49.5" lengthAdjust="spacingAndGlyphs">More...</text>
<rect x="1773" y="189" width="144" height="1" fill="#5e5954"/>
<rect x="1773" y="241" width="144" height="1" fill="#5e5954"/>
<rect x="1797.5" y="202.5" width="22" height="19" fill="none" stroke="#a8a8a8" stroke-width="1.6" stroke-dasharray="2.4 1.8"/>
<circle cx="1811" cy="209.5" r="4.6" fill="none" stroke="#c8c8c8" stroke-width="1.7"/>
<path d="M1807.6,213 L1802,218.6" stroke="#c8c8c8" stroke-width="2.4" stroke-linecap="round"/>
<path d="M1817.5,213.5 L1818,226 L1820.8,223.2 L1823.5,227.5 L1825.2,226.4 L1822.6,222.3 L1826.3,221.5 Z" fill="#c0c0c0"/>
<rect x="0" y="996" width="1920" height="84" fill="#2e2e2e"/>
<path d="M3.1,988 Q3.1,984 7.1,984 H89.1 Q93.1,984 93.1,988 V1003 H3.1 Z" fill="#1c1c1c"/>
<rect x="3.1" y="1002.6" width="90" height="2.2" fill="#a9a9a9"/>
<rect x="3.1" y="1004.7" width="90" height="17.2" fill="#ff0000"/>
<path d="M11.3,1006.8 L18.9,1020.8 H3.7 Z" fill="#f2f000" stroke="#3c3c5a" stroke-width="1"/><path d="M11.3,1011.3 V1018.3" stroke="#8a8a40" stroke-width="1.3"/>
<text x="19.9" y="1017.9" font-size="14.6" fill="#ffffff" textLength="56.8" lengthAdjust="spacingAndGlyphs">Clipping</text>
<text x="8.4" y="997.4" font-size="13.0" fill="#f0e82a" textLength="28.2" lengthAdjust="spacingAndGlyphs">Ch 1</text>
<path d="M3.1,1021.9 H93.1 V1074.6 Q93.1,1078.6 89.1,1078.6 H7.1 Q3.1,1078.6 3.1,1074.6 Z" fill="#c8c8c8"/>
<text x="8.6" y="1036.5" font-size="13.8" fill="#0e0e0e" textLength="43.0" lengthAdjust="spacingAndGlyphs">5 V/div</text>
<text x="8.6" y="1055.5" font-size="13.8" fill="#0e0e0e" textLength="34.4" lengthAdjust="spacingAndGlyphs">1 MΩ</text>
<text x="8.6" y="1074.1" font-size="13.8" fill="#0e0e0e" textLength="52.2" lengthAdjust="spacingAndGlyphs">200 kHz</text>
<text x="75.1" y="1068.8" font-size="9.5" fill="#111" textLength="6.5" lengthAdjust="spacingAndGlyphs">B</text>
<text x="81.1" y="1072.0" font-size="9.5" fill="#111" textLength="7.0" lengthAdjust="spacingAndGlyphs">w</text>
<path d="M98,988 Q98,984 102,984 H184 Q188,984 188,988 V1003 H98 Z" fill="#1e4042"/>
<rect x="98" y="1002.6" width="90" height="2.2" fill="#a9a9a9"/>
<rect x="98" y="1004.7" width="90" height="17.2" fill="#ff0000"/>
<path d="M106.19999999999999,1006.8 L113.8,1020.8 H98.6 Z" fill="#f2f000" stroke="#3c3c5a" stroke-width="1"/><path d="M106.19999999999999,1011.3 V1018.3" stroke="#8a8a40" stroke-width="1.3"/>
<text x="114.8" y="1017.9" font-size="14.6" fill="#ffffff" textLength="56.8" lengthAdjust="spacingAndGlyphs">Clipping</text>
<text x="103.3" y="997.4" font-size="13.0" fill="#26c8d2" textLength="28.2" lengthAdjust="spacingAndGlyphs">Ch 2</text>
<path d="M98,1021.9 H188 V1074.6 Q188,1078.6 184,1078.6 H102 Q98,1078.6 98,1074.6 Z" fill="#c8c8c8"/>
<text x="103.5" y="1036.5" font-size="13.8" fill="#0e0e0e" textLength="73.0" lengthAdjust="spacingAndGlyphs">250 mV/div</text>
<text x="103.5" y="1055.5" font-size="13.8" fill="#0e0e0e" textLength="34.4" lengthAdjust="spacingAndGlyphs">1 MΩ</text>
<text x="103.5" y="1074.1" font-size="13.8" fill="#0e0e0e" textLength="52.2" lengthAdjust="spacingAndGlyphs">200 kHz</text>
<text x="170.0" y="1068.8" font-size="9.5" fill="#111" textLength="6.5" lengthAdjust="spacingAndGlyphs">B</text>
<text x="176.0" y="1072.0" font-size="9.5" fill="#111" textLength="7.0" lengthAdjust="spacingAndGlyphs">w</text>
<path d="M193.2,988 Q193.2,984 197.2,984 H279.2 Q283.2,984 283.2,988 V1003 H193.2 Z" fill="#48282c"/>
<rect x="193.2" y="1002.6" width="90" height="2.2" fill="#a9a9a9"/>
<rect x="193.2" y="1004.7" width="90" height="17.2" fill="#ff0000"/>
<path d="M201.39999999999998,1006.8 L208.99999999999997,1020.8 H193.79999999999998 Z" fill="#f2f000" stroke="#3c3c5a" stroke-width="1"/><path d="M201.39999999999998,1011.3 V1018.3" stroke="#8a8a40" stroke-width="1.3"/>
<text x="210.0" y="1017.9" font-size="14.6" fill="#ffffff" textLength="56.8" lengthAdjust="spacingAndGlyphs">Clipping</text>
<text x="198.5" y="997.4" font-size="13.0" fill="#f4f4f4" textLength="29.3" lengthAdjust="spacingAndGlyphs">Ch 3</text>
<path d="M193.2,1021.9 H283.2 V1074.6 Q283.2,1078.6 279.2,1078.6 H197.2 Q193.2,1078.6 193.2,1074.6 Z" fill="#c8c8c8"/>
<text x="198.7" y="1036.5" font-size="13.8" fill="#0e0e0e" textLength="73.0" lengthAdjust="spacingAndGlyphs">450 mV/div</text>
<text x="198.7" y="1055.5" font-size="13.8" fill="#0e0e0e" textLength="35.0" lengthAdjust="spacingAndGlyphs">1 MΩ</text>
<text x="198.7" y="1074.1" font-size="13.8" fill="#0e0e0e" textLength="53.0" lengthAdjust="spacingAndGlyphs">200 kHz</text>
<text x="265.2" y="1068.8" font-size="9.5" fill="#111" textLength="6.5" lengthAdjust="spacingAndGlyphs">B</text>
<text x="271.2" y="1072.0" font-size="9.5" fill="#111" textLength="7.0" lengthAdjust="spacingAndGlyphs">w</text>
<path d="M287.8,1007 Q287.8,1003 291.8,1003 H373.8 Q377.8,1003 377.8,1007 V1022 H287.8 Z" fill="#363f20"/>
<rect x="287.8" y="1021.6" width="90" height="2.2" fill="#a9a9a9"/>
<text x="293.1" y="1016.9" font-size="13.0" fill="#8fd23a" textLength="29.7" lengthAdjust="spacingAndGlyphs">Ch 4</text>
<path d="M287.8,1023.8 H377.8 V1074.6 Q377.8,1078.6 373.8,1078.6 H291.8 Q287.8,1078.6 287.8,1074.6 Z" fill="#c8c8c8"/>
<text x="293.3" y="1036.5" font-size="13.8" fill="#0e0e0e" textLength="72.7" lengthAdjust="spacingAndGlyphs">200 mV/div</text>
<text x="293.3" y="1055.5" font-size="13.8" fill="#0e0e0e" textLength="35.0" lengthAdjust="spacingAndGlyphs">1 MΩ</text>
<text x="293.3" y="1074.1" font-size="13.8" fill="#0e0e0e" textLength="53.0" lengthAdjust="spacingAndGlyphs">200 kHz</text>
<text x="359.8" y="1068.8" font-size="9.5" fill="#111" textLength="6.5" lengthAdjust="spacingAndGlyphs">B</text>
<text x="365.8" y="1072.0" font-size="9.5" fill="#111" textLength="7.0" lengthAdjust="spacingAndGlyphs">w</text>
<path d="M383,1007 Q383,1003 387,1003 H469 Q473,1003 473,1007 V1022 H383 Z" fill="#4a3320"/>
<rect x="383" y="1021.6" width="90" height="2.2" fill="#a9a9a9"/>
<text x="388.3" y="1016.9" font-size="13.0" fill="#f39a30" textLength="29.7" lengthAdjust="spacingAndGlyphs">Ch 5</text>
<path d="M383,1023.8 H473 V1074.6 Q473,1078.6 469,1078.6 H387 Q383,1078.6 383,1074.6 Z" fill="#c8c8c8"/>
<text x="388.5" y="1036.5" font-size="13.8" fill="#0e0e0e" textLength="42.5" lengthAdjust="spacingAndGlyphs">1 V/div</text>
<text x="388.5" y="1055.5" font-size="13.8" fill="#0e0e0e" textLength="35.0" lengthAdjust="spacingAndGlyphs">1 MΩ</text>
<text x="388.5" y="1074.1" font-size="13.8" fill="#0e0e0e" textLength="53.0" lengthAdjust="spacingAndGlyphs">200 kHz</text>
<text x="455.0" y="1068.8" font-size="9.5" fill="#111" textLength="6.5" lengthAdjust="spacingAndGlyphs">B</text>
<text x="461.0" y="1072.0" font-size="9.5" fill="#111" textLength="7.0" lengthAdjust="spacingAndGlyphs">w</text>
<path d="M478,988 Q478,984 482,984 H564 Q568,984 568,988 V1003 H478 Z" fill="#2424c0"/>
<rect x="478" y="1002.6" width="90" height="2.2" fill="#a9a9a9"/>
<rect x="478" y="1004.7" width="90" height="17.2" fill="#ff0000"/>
<path d="M486.20000000000005,1006.8 L493.8,1020.8 H478.6 Z" fill="#f2f000" stroke="#3c3c5a" stroke-width="1"/><path d="M486.20000000000005,1011.3 V1018.3" stroke="#8a8a40" stroke-width="1.3"/>
<text x="494.8" y="1017.9" font-size="14.6" fill="#ffffff" textLength="57.2" lengthAdjust="spacingAndGlyphs">Clipping</text>
<text x="483.3" y="997.4" font-size="13.0" fill="#e4e4ff" textLength="29.5" lengthAdjust="spacingAndGlyphs">Ch 6</text>
<path d="M478,1021.9 H568 V1074.6 Q568,1078.6 564,1078.6 H482 Q478,1078.6 478,1074.6 Z" fill="#c8c8c8"/>
<text x="483.5" y="1036.5" font-size="13.8" fill="#0e0e0e" textLength="72.4" lengthAdjust="spacingAndGlyphs">750 mV/div</text>
<text x="483.5" y="1055.5" font-size="13.8" fill="#0e0e0e" textLength="35.5" lengthAdjust="spacingAndGlyphs">1 MΩ</text>
<text x="483.5" y="1074.1" font-size="13.8" fill="#0e0e0e" textLength="52.1" lengthAdjust="spacingAndGlyphs">200 kHz</text>
<text x="550.0" y="1068.8" font-size="9.5" fill="#111" textLength="6.5" lengthAdjust="spacingAndGlyphs">B</text>
<text x="556.0" y="1072.0" font-size="9.5" fill="#111" textLength="7.0" lengthAdjust="spacingAndGlyphs">w</text>
<path d="M573,988 Q573,984 577,984 H659 Q663,984 663,988 V1003 H573 Z" fill="#46321e"/>
<rect x="573" y="1002.6" width="90" height="2.2" fill="#a9a9a9"/>
<rect x="573" y="1004.7" width="90" height="17.2" fill="#ff0000"/>
<path d="M581.2,1006.8 L588.8000000000001,1020.8 H573.6 Z" fill="#f2f000" stroke="#3c3c5a" stroke-width="1"/><path d="M581.2,1011.3 V1018.3" stroke="#8a8a40" stroke-width="1.3"/>
<text x="589.8" y="1017.9" font-size="14.6" fill="#ffffff" textLength="66.0" lengthAdjust="spacingAndGlyphs">Empty i…</text>
<text x="578.3" y="997.4" font-size="13.0" fill="#f2a23a" textLength="47.8" lengthAdjust="spacingAndGlyphs">Math 1</text>
<path d="M573,1021.9 H663 V1074.6 Q663,1078.6 659,1078.6 H577 Q573,1078.6 573,1074.6 Z" fill="#c8c8c8"/>
<text x="578.5" y="1036.5" font-size="13.8" fill="#0e0e0e" font-weight="bold" textLength="81.1" lengthAdjust="spacingAndGlyphs">73.8 mT/div</text>
<text x="578.5" y="1055.5" font-size="13.8" fill="#0e0e0e" textLength="73.2" lengthAdjust="spacingAndGlyphs">Intg(Ch2)…</text>
<path d="M668,988 Q668,984 672,984 H754 Q758,984 758,988 V1003 H668 Z" fill="#2c2232"/>
<rect x="668" y="1002.6" width="90" height="2.2" fill="#a9a9a9"/>
<rect x="668" y="1004.7" width="90" height="17.2" fill="#ff0000"/>
<path d="M676.2,1006.8 L683.8000000000001,1020.8 H668.6 Z" fill="#f2f000" stroke="#3c3c5a" stroke-width="1"/><path d="M676.2,1011.3 V1018.3" stroke="#8a8a40" stroke-width="1.3"/>
<text x="684.8" y="1017.9" font-size="14.6" fill="#ffffff" textLength="66.2" lengthAdjust="spacingAndGlyphs">Empty i…</text>
<text x="673.3" y="997.4" font-size="13.0" fill="#f0f0f0" textLength="48.8" lengthAdjust="spacingAndGlyphs">Math 2</text>
<path d="M668,1021.9 H758 V1074.6 Q758,1078.6 754,1078.6 H672 Q668,1078.6 668,1074.6 Z" fill="#c8c8c8"/>
<text x="673.5" y="1036.5" font-size="13.8" fill="#0e0e0e" font-weight="bold" textLength="79.7" lengthAdjust="spacingAndGlyphs">1.324 kA/…</text>
<text x="673.5" y="1055.5" font-size="13.8" fill="#0e0e0e" textLength="74.2" lengthAdjust="spacingAndGlyphs">-Intg(Ch3…</text>
<rect x="1118.3" y="1000" width="1.2" height="80" fill="#5e5954"/>
<rect x="1269.3" y="1000" width="1.2" height="80" fill="#5e5954"/>
<rect x="1811" y="1000" width="1.2" height="80" fill="#5e5954"/>
<rect x="1129.5" y="999.5" width="39" height="79" rx="5" fill="url(#btng)" stroke="#6d645c" stroke-width="1"/>
<rect x="1133" y="1007" width="31" height="2" fill="#c62828"/>
<text x="1135.8" y="1032.7" font-size="15.0" fill="#f0f0f0" textLength="26.2" lengthAdjust="spacingAndGlyphs">Add</text>
<text x="1134.4" y="1048.7" font-size="15.0" fill="#f0f0f0" textLength="29.1" lengthAdjust="spacingAndGlyphs">New</text>
<text x="1132.3" y="1064.6" font-size="15.0" fill="#f0f0f0" textLength="33.3" lengthAdjust="spacingAndGlyphs">Math</text>
<rect x="1174.5" y="999.5" width="39" height="79" rx="5" fill="url(#btng)" stroke="#6d645c" stroke-width="1"/>
<rect x="1178" y="1007" width="31" height="2" fill="#c8cce0"/>
<text x="1180.8" y="1032.7" font-size="15.0" fill="#f0f0f0" textLength="26.5" lengthAdjust="spacingAndGlyphs">Add</text>
<text x="1179.0" y="1048.7" font-size="15.0" fill="#f0f0f0" textLength="29.3" lengthAdjust="spacingAndGlyphs">New</text>
<text x="1184.0" y="1064.6" font-size="15.0" fill="#f0f0f0" textLength="20.0" lengthAdjust="spacingAndGlyphs">Ref</text>
<rect x="1219.5" y="999.5" width="39" height="79" rx="5" fill="url(#btng)" stroke="#6d645c" stroke-width="1"/>
<rect x="1223" y="1007" width="31" height="2" fill="#c44cf0"/>
<text x="1225.6" y="1032.7" font-size="15.0" fill="#f0f0f0" textLength="26.4" lengthAdjust="spacingAndGlyphs">Add</text>
<text x="1224.4" y="1048.7" font-size="15.0" fill="#f0f0f0" textLength="29.1" lengthAdjust="spacingAndGlyphs">New</text>
<text x="1228.0" y="1064.6" font-size="15.0" fill="#f0f0f0" textLength="22.0" lengthAdjust="spacingAndGlyphs">Bus</text>
<path d="M1281,1007.6 Q1281,1003.6 1285,1003.6 H1475 Q1479,1003.6 1479,1007.6 V1078.5 H1281 Z" fill="#c8c8c8" stroke="#0a0a0a" stroke-width="1.5"/><path d="M1281.5,1007.6 Q1281.5,1004.1 1285,1004.1 H1475 Q1478.5,1004.1 1478.5,1007.6 V1023.2 H1281.5 Z" fill="#5a5a5c"/><rect x="1281.5" y="1022" width="197" height="1.5" fill="#8a8a8a"/><text x="1287.0" y="1018.0" font-size="15.0" fill="#f4f4f4" textLength="72.9" lengthAdjust="spacingAndGlyphs">Horizontal</text>
<text x="1285.4" y="1036.2" font-size="14.0" fill="#0e0e0e" textLength="52.5" lengthAdjust="spacingAndGlyphs">4 ms/div</text>
<text x="1391.0" y="1036.2" font-size="14.0" fill="#0e0e0e" textLength="38.8" lengthAdjust="spacingAndGlyphs">40 ms</text>
<text x="1285.4" y="1055.2" font-size="14.0" fill="#0e0e0e" textLength="66.6" lengthAdjust="spacingAndGlyphs">SR: 1 MS/s</text>
<text x="1392.7" y="1055.2" font-size="14.0" fill="#0e0e0e" textLength="42.1" lengthAdjust="spacingAndGlyphs">1 µs/pt</text>
<text x="1285.4" y="1074.0" font-size="14.0" fill="#0e0e0e" textLength="69.8" lengthAdjust="spacingAndGlyphs">RL: 40 kpts</text>
<path d="M1391.5,1063.5 H1399.5 V1071.5 H1397 L1395.5,1074 L1394,1071.5 H1391.5 Z" fill="#111" stroke="#f39020" stroke-width="1.3"/>
<path d="M1393.3,1066 H1397.7 M1395.5,1066 V1070.5" stroke="#f0f0f0" stroke-width="1.2"/>
<text x="1405.2" y="1074.0" font-size="14.0" fill="#0e0e0e" textLength="21.8" lengthAdjust="spacingAndGlyphs">3%</text>
<path d="M1485.7,1007.6 Q1485.7,1003.6 1489.7,1003.6 H1640.3 Q1644.3,1003.6 1644.3,1007.6 V1078.5 H1485.7 Z" fill="#c8c8c8" stroke="#0a0a0a" stroke-width="1.5"/><path d="M1486.2,1007.6 Q1486.2,1004.1 1489.7,1004.1 H1640.3 Q1643.8,1004.1 1643.8,1007.6 V1023.2 H1486.2 Z" fill="#5a5a5c"/><rect x="1486.2" y="1022" width="157.5999999999999" height="1.5" fill="#8a8a8a"/><text x="1491.7" y="1018.0" font-size="15.0" fill="#f4f4f4" textLength="48.5" lengthAdjust="spacingAndGlyphs">Trigger</text>
<rect x="1490.5" y="1025.5" width="29" height="15" rx="4" fill="#2424c4" stroke="#181830" stroke-width="1"/>
<text x="1500.8" y="1038.0" font-size="13.0" fill="#ffffff" textLength="8.0" lengthAdjust="spacingAndGlyphs">6</text>
<path d="M1530,1037.5 H1535 L1541,1031.5 H1546" fill="none" stroke="#2a2a9a" stroke-width="1.2"/>
<text x="1556.3" y="1037.0" font-size="14.0" fill="#0e0e0e" textLength="21.1" lengthAdjust="spacingAndGlyphs">3 V</text>
<path d="M1650.7,1007.6 Q1650.7,1003.6 1654.7,1003.6 H1795.2 Q1799.2,1003.6 1799.2,1007.6 V1078.5 H1650.7 Z" fill="#c8c8c8" stroke="#0a0a0a" stroke-width="1.5"/><path d="M1651.2,1007.6 Q1651.2,1004.1 1654.7,1004.1 H1795.2 Q1798.7,1004.1 1798.7,1007.6 V1023.2 H1651.2 Z" fill="#5a5a5c"/><rect x="1651.2" y="1022" width="147.5" height="1.5" fill="#8a8a8a"/><text x="1656.7" y="1018.0" font-size="15.0" fill="#f4f4f4" textLength="76.8" lengthAdjust="spacingAndGlyphs">Acquisition</text>
<text x="1655.3" y="1037.0" font-size="14.0" fill="#0e0e0e" textLength="51.1" lengthAdjust="spacingAndGlyphs">Manual,</text>
<text x="1736.2" y="1037.0" font-size="14.0" fill="#0e0e0e" textLength="49.0" lengthAdjust="spacingAndGlyphs">Analyze</text>
<text x="1655.3" y="1056.0" font-size="14.0" fill="#0e0e0e" textLength="106.6" lengthAdjust="spacingAndGlyphs">High Res: 16 bits</text>
<text x="1655.3" y="1074.8" font-size="14.0" fill="#0e0e0e" textLength="69.9" lengthAdjust="spacingAndGlyphs">Single: 1 /1</text>
<rect x="1822.5" y="999.5" width="89.5" height="35" rx="6" fill="#ff1c24" stroke="#8a8a8a" stroke-width="1"/>
<text x="1839.0" y="1019.8" font-size="13.0" fill="#ffffff" font-weight="bold" textLength="55.8" lengthAdjust="spacingAndGlyphs">Stopped</text>
<rect x="1822" y="1040" width="90.5" height="38.5" rx="4.5" fill="#c8c8c8"/>
<text x="1827.2" y="1055.3" font-size="14.0" fill="#0e0e0e" textLength="80.2" lengthAdjust="spacingAndGlyphs">16 Apr 2025</text>
<text x="1829.5" y="1071.3" font-size="14.0" fill="#0e0e0e" textLength="74.5" lengthAdjust="spacingAndGlyphs">6:50:00 PM</text>
</svg>
</body></html>
